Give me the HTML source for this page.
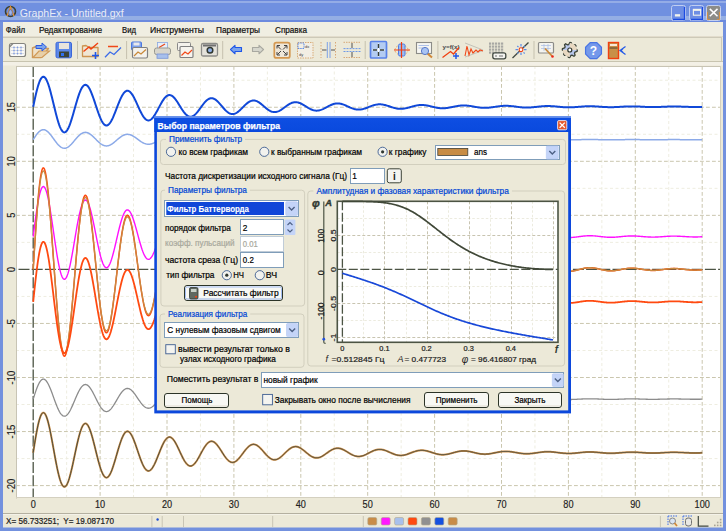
<!DOCTYPE html>
<html><head><meta charset="utf-8"><title>GraphEx</title>
<style>html,body{margin:0;padding:0;background:#ECE9D8;width:726px;height:531px;overflow:hidden}svg text{font-family:"Liberation Sans", sans-serif}</style>
</head><body><svg width="726" height="531" viewBox="0 0 726 531" style="display:block;font-family:'Liberation Sans', sans-serif"><rect x="0" y="0" width="726" height="531" fill="#ECE9D8" stroke="none" stroke-width="1" rx="0" /><linearGradient id="tg" x1="0" y1="0" x2="0" y2="1"><stop offset="0" stop-color="#6A88DC"/><stop offset="0.045" stop-color="#6A88DC"/><stop offset="0.045" stop-color="#94ACE6"/><stop offset="0.14" stop-color="#94ACE6"/><stop offset="0.14" stop-color="#7090E0"/><stop offset="0.727" stop-color="#7090E0"/><stop offset="0.727" stop-color="#94AEE4"/><stop offset="0.909" stop-color="#94AEE4"/><stop offset="0.909" stop-color="#6C8ADE"/><stop offset="1" stop-color="#6C8ADE"/></linearGradient><rect x="0" y="0" width="726" height="22" fill="url(#tg)" stroke="none" stroke-width="1" rx="0" /><rect x="0" y="22" width="3" height="509" fill="#7391DE" stroke="none" stroke-width="1" rx="0" /><rect x="723" y="22" width="3" height="509" fill="#7391DE" stroke="none" stroke-width="1" rx="0" /><rect x="0" y="527.5" width="726" height="3.5" fill="#7391DE" stroke="none" stroke-width="1" rx="0" /><text x="19.8" y="16.6" font-size="10.6" fill="#E8ECF6" font-weight="400" textLength="104" lengthAdjust="spacingAndGlyphs" >GraphEx - Untitled.gxf</text><g transform="translate(5,6)"><circle cx="5.5" cy="5.5" r="5" fill="none" stroke="#3C4030" stroke-width="1.6"/><path d="M2,10 L5.5,1 L9,10" fill="none" stroke="#E09030" stroke-width="1.4"/><ellipse cx="5.5" cy="6.5" rx="1.8" ry="2.8" fill="#9CB4EC" stroke="#506090" stroke-width="0.6"/></g><rect x="671.5" y="5.5" width="14" height="15" fill="#6E8EE4" stroke="#C0CEF2" stroke-width="1" rx="2" /><path d="M684.5,7 V19.5 H673" fill="none" stroke="#1C4CE0" stroke-width="1.3"/><rect x="674.9" y="14.2" width="5.2" height="2.3" fill="#F4F4EC" stroke="none" stroke-width="1" rx="0" /><rect x="689.5" y="5.5" width="14" height="15" fill="#6E8EE4" stroke="#C0CEF2" stroke-width="1" rx="2" /><path d="M702.5,7 V19.5 H691" fill="none" stroke="#1C4CE0" stroke-width="1.3"/><rect x="693.4" y="9.8" width="7.2" height="5.4" fill="none" stroke="#F4F4EC" stroke-width="1.1" rx="0" /><rect x="692.9" y="8.8" width="8.2" height="2" fill="#F4F4EC" stroke="none" stroke-width="1" rx="0" /><rect x="706.5" y="5.5" width="14" height="15" fill="#8C8C88" stroke="#C4D0F0" stroke-width="1" rx="2" /><path d="M707.5,12 V19.5 H710 M719.5,12 V19.5 H717" fill="none" stroke="#D89040" stroke-width="0.9"/><line x1="709.8" y1="8.9" x2="717.5" y2="16.2" stroke="#fff" stroke-width="1.5" /><line x1="717.5" y1="8.9" x2="709.8" y2="16.2" stroke="#fff" stroke-width="1.5" /><rect x="3" y="22" width="720" height="15" fill="#F0EEE2" stroke="none" stroke-width="1" rx="0" /><line x1="3" y1="36.5" x2="723" y2="36.5" stroke="#E2DCCC" stroke-width="1" /><line x1="3" y1="37.5" x2="722" y2="37.5" stroke="#CDC9B8" stroke-width="1" /><text x="5.8" y="32.7" font-size="8.3" fill="#101010" font-weight="400" textLength="19.4" lengthAdjust="spacingAndGlyphs" stroke="#101010" stroke-width="0.2" >Файл</text><text x="39" y="32.7" font-size="8.3" fill="#101010" font-weight="400" textLength="63" lengthAdjust="spacingAndGlyphs" stroke="#101010" stroke-width="0.2" >Редактирование</text><text x="122" y="32.7" font-size="8.3" fill="#101010" font-weight="400" textLength="14" lengthAdjust="spacingAndGlyphs" stroke="#101010" stroke-width="0.2" >Вид</text><text x="150" y="32.7" font-size="8.3" fill="#101010" font-weight="400" textLength="54" lengthAdjust="spacingAndGlyphs" stroke="#101010" stroke-width="0.2" >Инструменты</text><text x="216" y="32.7" font-size="8.3" fill="#101010" font-weight="400" textLength="44" lengthAdjust="spacingAndGlyphs" stroke="#101010" stroke-width="0.2" >Параметры</text><text x="275" y="32.7" font-size="8.3" fill="#101010" font-weight="400" textLength="32" lengthAdjust="spacingAndGlyphs" stroke="#101010" stroke-width="0.2" >Справка</text><rect x="3" y="38" width="720" height="23" fill="#ECE9D8" stroke="none" stroke-width="1" rx="0" /><line x1="3" y1="61.5" x2="723" y2="61.5" stroke="#C8C4B0" stroke-width="1" /><line x1="721.5" y1="37.5" x2="721.5" y2="61.5" stroke="#CDC9B8" stroke-width="1" /><line x1="77.5" y1="41" x2="77.5" y2="59" stroke="#C5C1AE" stroke-width="1" /><line x1="126.6" y1="41" x2="126.6" y2="59" stroke="#C5C1AE" stroke-width="1" /><line x1="222.7" y1="41" x2="222.7" y2="59" stroke="#C5C1AE" stroke-width="1" /><line x1="365.2" y1="41" x2="365.2" y2="59" stroke="#C5C1AE" stroke-width="1" /><line x1="437.9" y1="41" x2="437.9" y2="59" stroke="#C5C1AE" stroke-width="1" /><line x1="534.0" y1="41" x2="534.0" y2="59" stroke="#C5C1AE" stroke-width="1" /><g><rect x="9.5" y="43.5" width="16" height="13" rx="2" fill="#FAFAF8" stroke="#84847E" stroke-width="1.2"/><path d="M9.5,47 L13,43.5" stroke="#84847E" stroke-width="1.2"/><line x1="14" y1="46" x2="14" y2="55" stroke="#D0D4D8" stroke-width="0.8"/><line x1="17.5" y1="46" x2="17.5" y2="55" stroke="#D0D4D8" stroke-width="0.8"/><line x1="21" y1="46" x2="21" y2="55" stroke="#D0D4D8" stroke-width="0.8"/><line x1="11" y1="47.5" x2="24" y2="47.5" stroke="#D0D4D8" stroke-width="0.8"/><line x1="11" y1="50.5" x2="24" y2="50.5" stroke="#D0D4D8" stroke-width="0.8"/><line x1="11" y1="53.5" x2="24" y2="53.5" stroke="#D0D4D8" stroke-width="0.8"/><rect x="13.3" y="46.8" width="1.4" height="1.4" fill="#7C9CE8"/><rect x="13.3" y="49.8" width="1.4" height="1.4" fill="#7C9CE8"/><rect x="13.3" y="52.8" width="1.4" height="1.4" fill="#7C9CE8"/><rect x="16.8" y="46.8" width="1.4" height="1.4" fill="#7C9CE8"/><rect x="16.8" y="49.8" width="1.4" height="1.4" fill="#7C9CE8"/><rect x="16.8" y="52.8" width="1.4" height="1.4" fill="#7C9CE8"/><rect x="20.3" y="46.8" width="1.4" height="1.4" fill="#7C9CE8"/><rect x="20.3" y="49.8" width="1.4" height="1.4" fill="#7C9CE8"/><rect x="20.3" y="52.8" width="1.4" height="1.4" fill="#7C9CE8"/></g><g><path d="M32.5,57.5 L32.5,48 L36,46.5 L40,48.5 L48.5,48.5 L41,57.5 Z" fill="#F0E2C8" stroke="#D09A58" stroke-width="1.4" stroke-linejoin="round"/><path d="M33,57.5 L39,51 L49.5,51 L42,57.5 Z" fill="#E8D0A8" stroke="#D09A58" stroke-width="1.2"/><path d="M36,45.5 H42 V43 L46.5,47 L42,51 V48.5 H36 Z" fill="#7CA4EC" stroke="#2C5CE0" stroke-width="1"/></g><g><rect x="56" y="42.3" width="15.5" height="15.5" rx="1.5" fill="#5C88E8" stroke="#3A66DA" stroke-width="1"/><rect x="59" y="43" width="10" height="6" fill="#E8E4DC"/><rect x="59" y="51.5" width="10" height="5.8" fill="#3C4438"/><rect x="61" y="53" width="3" height="3" fill="#3070F0"/></g><g><path d="M82.5,56.5 V46 L86,45.5 L89,47.5 H98 V56.5 Z" fill="#F0E6D4" stroke="#CC9450" stroke-width="1.3" stroke-linejoin="round"/><path d="M83.5,51.5 L89,47 L91,49 L98,43" fill="none" stroke="#F04010" stroke-width="1.4"/><path d="M95.5,52 V59 M92,55.5 H99" stroke="#2058E8" stroke-width="1.6"/></g><g><line x1="108" y1="46.5" x2="118" y2="46.5" stroke="#F04818" stroke-width="1.5"/><path d="M105,57.3 L110,52 L114,54.5 L121,47.5" fill="none" stroke="#3C6CE8" stroke-width="1.3"/></g><g><rect x="131.5" y="42" width="10" height="8" rx="1" fill="#7CA0EC" stroke="#4C78E0" stroke-width="1"/><rect x="133.5" y="42.5" width="6" height="3" fill="#E8E8EC"/><rect x="132.5" y="47.5" width="15" height="10.5" rx="1.5" fill="#F4F2EC" stroke="#808080" stroke-width="1.2"/><path d="M134,56 L138,52 L141,54 L146,49.5" fill="none" stroke="#C88838" stroke-width="1.2"/></g><g><rect x="157.5" y="42.5" width="10" height="6" fill="#E8EEF8" stroke="#8AA8E0" stroke-width="0.8"/><path d="M159,47.5 L165,44" stroke="#E84818" stroke-width="1.2"/><rect x="154.5" y="48" width="16" height="6.5" rx="2" fill="#D8D6CC" stroke="#989890" stroke-width="1"/><rect x="157" y="54" width="11" height="4.3" fill="#A8C0EC" stroke="#7894D8" stroke-width="0.8"/></g><g><rect x="177.5" y="42.5" width="13" height="8" rx="1" fill="#F4F2EC" stroke="#888" stroke-width="1"/><rect x="180" y="46.5" width="13" height="11" rx="1" fill="#F6F4EE" stroke="#808080" stroke-width="1.2"/><path d="M181.5,55.5 L185,52 L188,54 L192,50" fill="none" stroke="#F04818" stroke-width="1.2"/></g><g><rect x="201.5" y="43.5" width="16" height="12.5" rx="1.5" fill="#E4E2DA" stroke="#8C8C88" stroke-width="1.3"/><rect x="203" y="44.5" width="13" height="2" fill="#707070"/><circle cx="210" cy="50.3" r="2.8" fill="#90B0E8" stroke="#303830" stroke-width="1.5"/></g><g><path d="M230.5,49.5 L235,45.3 V47.5 H241.5 V51.5 H235 V53.8 Z" fill="#7CA4EC" stroke="#1E56E8" stroke-width="1.1" stroke-linejoin="round"/></g><g><path d="M263.5,49.5 L259,45.3 V47.5 H252.5 V51.5 H259 V53.8 Z" fill="#D6D6CC" stroke="#A8A8A0" stroke-width="1.1" stroke-linejoin="round"/></g><g><rect x="274.3" y="42.7" width="15.5" height="15.2" rx="2" fill="#EEE6D8" stroke="#D49850" stroke-width="1.7"/><path d="M277.5,46 L281,49.5 M286.5,46 L283,49.5 M277.5,54.5 L281,51 M286.5,54.5 L283,51" stroke="#404040" stroke-width="1"/><path d="M277,45.5 h3 M277,45.5 v3 M287,45.5 h-3 M287,45.5 v3 M277,55 h3 M277,55 v-3 M287,55 h-3 M287,55 v-3" stroke="#404040" stroke-width="1"/></g><g><rect x="297.5" y="42.5" width="15.5" height="15.5" fill="#F2EEE4" stroke="#D8AC78" stroke-width="1" stroke-dasharray="1.5,1"/><rect x="298" y="43" width="6" height="5.5" fill="none" stroke="#5C8CE8" stroke-width="1" stroke-dasharray="1.5,0.8"/><text x="305" y="48" font-size="4" fill="#404040">dx</text><text x="299" y="56" font-size="4" fill="#404040">dy</text></g><g><line x1="321" y1="42" x2="321" y2="58" stroke="#D8A878" stroke-width="1" stroke-dasharray="1.5,1.5"/><line x1="335.5" y1="42" x2="335.5" y2="58" stroke="#D8A878" stroke-width="1" stroke-dasharray="1.5,1.5"/><line x1="327.3" y1="42" x2="327.3" y2="58" stroke="#7CA0E8" stroke-width="1"/><line x1="330" y1="42" x2="330" y2="58" stroke="#7CA0E8" stroke-width="1"/><path d="M322,50 H326.5 M331,50 H335" stroke="#505050" stroke-width="1"/></g><g><line x1="343.5" y1="42.3" x2="360.5" y2="42.3" stroke="#D8A878" stroke-width="1" stroke-dasharray="1.5,1"/><line x1="343.5" y1="57.5" x2="360.5" y2="57.5" stroke="#D8A878" stroke-width="1" stroke-dasharray="1.5,1"/><line x1="343.5" y1="48.6" x2="360.5" y2="48.6" stroke="#6C98E8" stroke-width="1" stroke-dasharray="2,1"/><line x1="343.5" y1="51.5" x2="360.5" y2="51.5" stroke="#6C98E8" stroke-width="1" stroke-dasharray="2,1"/><path d="M352,43 V48 M352,52 V57" stroke="#505050" stroke-width="1"/></g><g><rect x="370.5" y="41.5" width="16" height="16.5" rx="1" fill="#B4CCF2" stroke="#5A82E8" stroke-width="1.7"/><path d="M378.5,43.5 V56.5 M372.5,50 H384.5" stroke="#FFFFFF" stroke-width="1"/><path d="M378.5,44 V48 M378.5,52 V56 M373,50 H377 M380,50 H384" stroke="#384038" stroke-width="1.4"/></g><g><ellipse cx="401.5" cy="50" rx="6.5" ry="5" fill="none" stroke="#E8A050" stroke-width="1" stroke-dasharray="1.5,1.5"/><rect x="398.5" y="44" width="6.5" height="12" rx="1.5" fill="#9CBCF0" stroke="#4C7CE8" stroke-width="1"/><path d="M401.5,42 V58 M394,50 H410" stroke="#F03C10" stroke-width="1.2"/></g><g><rect x="416.5" y="42.5" width="15" height="11" fill="#F6F6F2" stroke="#8C8C88" stroke-width="1.1"/><path d="M418.5,45.5 H429 M418.5,48 H423" stroke="#9CB4E4" stroke-width="0.8"/><path d="M427.5,53.5 L432,57.5" stroke="#D08838" stroke-width="2"/><circle cx="425" cy="51" r="3.6" fill="#A8C4F4" stroke="#5878C8" stroke-width="1"/></g><g><text x="442.5" y="48.8" font-size="6.2" font-weight="700" fill="#484848" textLength="17" lengthAdjust="spacingAndGlyphs">y=f(x)</text><path d="M442.5,57.5 L450.5,51.5 L453.5,54 L459,47.5" fill="none" stroke="#F04010" stroke-width="1.3"/><path d="M456,53 V59 M453,56 H459" stroke="#2058E8" stroke-width="1.5"/></g><g><path d="M465,43 L483,50 M465,57 L483,50.5" stroke="#B8B8B0" stroke-width="0.8"/><path d="M465,56 L467,46 L469,55 L471,49 L473,53 L476,50 L478,52 L480,50 L483,51" fill="none" stroke="#F04818" stroke-width="1.1"/></g><g><rect x="489" y="42.5" width="2.2" height="2.2" fill="#A8A8A4"/><rect x="489" y="45.5" width="2.2" height="2.2" fill="#A8A8A4"/><rect x="489" y="48.5" width="2.2" height="2.2" fill="#A8A8A4"/><rect x="489" y="51.5" width="2.2" height="2.2" fill="#A8A8A4"/><rect x="492" y="42.5" width="2.2" height="2.2" fill="#A8A8A4"/><rect x="492" y="45.5" width="2.2" height="2.2" fill="#A8A8A4"/><rect x="492" y="48.5" width="2.2" height="2.2" fill="#A8A8A4"/><rect x="492" y="51.5" width="2.2" height="2.2" fill="#A8A8A4"/><rect x="495" y="42.5" width="2.2" height="2.2" fill="#A8A8A4"/><rect x="495" y="45.5" width="2.2" height="2.2" fill="#A8A8A4"/><rect x="495" y="48.5" width="2.2" height="2.2" fill="#A8A8A4"/><rect x="495" y="51.5" width="2.2" height="2.2" fill="#A8A8A4"/><rect x="498" y="42.5" width="2.2" height="2.2" fill="#A8A8A4"/><rect x="498" y="45.5" width="2.2" height="2.2" fill="#A8A8A4"/><rect x="498" y="48.5" width="2.2" height="2.2" fill="#A8A8A4"/><rect x="498" y="51.5" width="2.2" height="2.2" fill="#A8A8A4"/><rect x="501" y="42.5" width="2.2" height="2.2" fill="#A8A8A4"/><rect x="501" y="45.5" width="2.2" height="2.2" fill="#A8A8A4"/><rect x="501" y="48.5" width="2.2" height="2.2" fill="#A8A8A4"/><rect x="501" y="51.5" width="2.2" height="2.2" fill="#A8A8A4"/><rect x="492.8" y="52.8" width="13" height="6" rx="2" fill="#F4F4F0" stroke="#404840" stroke-width="1.3"/><path d="M495,56 h2 M499,56 h4" stroke="#707070" stroke-width="1"/></g><g><path d="M512.5,58 L528.5,42.5" stroke="#404840" stroke-width="1.3"/><path d="M521,44 V46.5 M521,52.5 V55 M515.5,49.7 H518 M524,49.7 H526.5 M517.3,46 L518.5,47.2 M523.5,52.3 L524.7,53.5 M517.3,53.5 L518.5,52.3 M523.5,47.2 L524.7,46" stroke="#5C8CE8" stroke-width="1.2"/><circle cx="521" cy="49.7" r="1.9" fill="#FFFFFF" stroke="#F03C10" stroke-width="1.1"/></g><g><rect x="538.5" y="42.5" width="15" height="10.5" rx="1" fill="#F4F4F0" stroke="#8C8C88" stroke-width="1.2"/><path d="M541,45.5 H551 M541,48.5 H551 M544,44 V51 M548,44 V51" stroke="#A8BCE4" stroke-width="0.7"/><path d="M545,48.5 L552,56" stroke="#C88838" stroke-width="1.8"/><circle cx="552.5" cy="56.5" r="1.3" fill="#F02818"/></g><g><path d="M577.30,50.00 L577.16,51.46 L574.97,52.14 L574.46,53.11 L575.10,55.30 L573.97,56.24 L571.94,55.17 L570.89,55.49 L569.80,57.50 L568.34,57.36 L567.66,55.17 L566.69,54.66 L564.50,55.30 L563.56,54.17 L564.63,52.14 L564.31,51.09 L562.30,50.00 L562.44,48.54 L564.63,47.86 L565.14,46.89 L564.50,44.70 L565.63,43.76 L567.66,44.83 L568.71,44.51 L569.80,42.50 L571.26,42.64 L571.94,44.83 L572.91,45.34 L575.10,44.70 L576.04,45.83 L574.97,47.86 L575.29,48.91 Z" fill="#B8C8EC" stroke="#3C4438" stroke-width="1.3" stroke-linejoin="round"/><path d="M569.8,43 A7,7 0 0 1 576.8,50 L569.8,50 Z M569.8,57 A7,7 0 0 1 562.8,50 L569.8,50Z" fill="#E8D8C0"/><circle cx="569.8" cy="50" r="2" fill="#FFFFFF" stroke="#303830" stroke-width="1.2"/></g><g><path d="M601.45,53.89 L596.79,58.55 L590.21,58.55 L585.55,53.89 L585.55,47.31 L590.21,42.65 L596.79,42.65 L601.45,47.31 Z" fill="#7498EA" stroke="#4874E4" stroke-width="1.2"/><text x="593.5" y="55" font-size="12" font-weight="700" fill="#FFFFFF" text-anchor="middle">?</text></g><g><rect x="608.5" y="42.5" width="10" height="16" fill="#C89048" stroke="#F04010" stroke-width="1.4"/><rect x="610" y="44" width="7" height="2" fill="#F8E8D8"/><path d="M609.5,48 H617.5" stroke="#303030" stroke-width="0.8"/><path d="M625.5,46.5 L620,50.5 L625.5,54.5 M623,48.5 L621,50.5 L623,52.5" fill="none" stroke="#2058E8" stroke-width="1.2"/></g><rect x="3" y="62" width="720" height="451" fill="#ECE9D8" stroke="none" stroke-width="1" rx="0" /><rect x="3" y="62" width="720" height="3.5" fill="#F3F0E6" stroke="none" stroke-width="1" rx="0" /><rect x="16" y="66" width="705" height="432" fill="#FFFFFF" stroke="none" stroke-width="1" rx="0" /><line x1="16.5" y1="66" x2="16.5" y2="498.5" stroke="#C8C4B4" stroke-width="1" /><line x1="16" y1="66.5" x2="721" y2="66.5" stroke="#C8C4B4" stroke-width="1" /><line x1="720.5" y1="66" x2="720.5" y2="498" stroke="#D4D0C0" stroke-width="1" /><line x1="16" y1="497.5" x2="721" y2="497.5" stroke="#D4D0C0" stroke-width="1" /><clipPath id="pc"><rect x="17" y="67" width="703" height="430"/></clipPath><g clip-path="url(#pc)"><line x1="66.65" y1="66" x2="66.65" y2="498" stroke="#EEEDE0" stroke-width="1" stroke-dasharray="3,2.5" /><line x1="133.55" y1="66" x2="133.55" y2="498" stroke="#EEEDE0" stroke-width="1" stroke-dasharray="3,2.5" /><line x1="200.45" y1="66" x2="200.45" y2="498" stroke="#EEEDE0" stroke-width="1" stroke-dasharray="3,2.5" /><line x1="267.35" y1="66" x2="267.35" y2="498" stroke="#EEEDE0" stroke-width="1" stroke-dasharray="3,2.5" /><line x1="334.25" y1="66" x2="334.25" y2="498" stroke="#EEEDE0" stroke-width="1" stroke-dasharray="3,2.5" /><line x1="401.15" y1="66" x2="401.15" y2="498" stroke="#EEEDE0" stroke-width="1" stroke-dasharray="3,2.5" /><line x1="468.05" y1="66" x2="468.05" y2="498" stroke="#EEEDE0" stroke-width="1" stroke-dasharray="3,2.5" /><line x1="534.95" y1="66" x2="534.95" y2="498" stroke="#EEEDE0" stroke-width="1" stroke-dasharray="3,2.5" /><line x1="601.85" y1="66" x2="601.85" y2="498" stroke="#EEEDE0" stroke-width="1" stroke-dasharray="3,2.5" /><line x1="668.75" y1="66" x2="668.75" y2="498" stroke="#EEEDE0" stroke-width="1" stroke-dasharray="3,2.5" /><line x1="16" y1="458.57" x2="721" y2="458.57" stroke="#EEEDE0" stroke-width="1" stroke-dasharray="3,2.5" /><line x1="16" y1="404.52" x2="721" y2="404.52" stroke="#EEEDE0" stroke-width="1" stroke-dasharray="3,2.5" /><line x1="16" y1="350.47" x2="721" y2="350.47" stroke="#EEEDE0" stroke-width="1" stroke-dasharray="3,2.5" /><line x1="16" y1="296.42" x2="721" y2="296.42" stroke="#EEEDE0" stroke-width="1" stroke-dasharray="3,2.5" /><line x1="16" y1="242.37" x2="721" y2="242.37" stroke="#EEEDE0" stroke-width="1" stroke-dasharray="3,2.5" /><line x1="16" y1="188.32" x2="721" y2="188.32" stroke="#EEEDE0" stroke-width="1" stroke-dasharray="3,2.5" /><line x1="16" y1="134.27" x2="721" y2="134.27" stroke="#EEEDE0" stroke-width="1" stroke-dasharray="3,2.5" /><line x1="16" y1="80.22" x2="721" y2="80.22" stroke="#EEEDE0" stroke-width="1" stroke-dasharray="3,2.5" /><line x1="100.1" y1="66" x2="100.1" y2="498" stroke="#CAC6AE" stroke-width="1" stroke-dasharray="3.8,2.2" /><line x1="167.0" y1="66" x2="167.0" y2="498" stroke="#CAC6AE" stroke-width="1" stroke-dasharray="3.8,2.2" /><line x1="233.9" y1="66" x2="233.9" y2="498" stroke="#CAC6AE" stroke-width="1" stroke-dasharray="3.8,2.2" /><line x1="300.8" y1="66" x2="300.8" y2="498" stroke="#CAC6AE" stroke-width="1" stroke-dasharray="3.8,2.2" /><line x1="367.7" y1="66" x2="367.7" y2="498" stroke="#CAC6AE" stroke-width="1" stroke-dasharray="3.8,2.2" /><line x1="434.6" y1="66" x2="434.6" y2="498" stroke="#CAC6AE" stroke-width="1" stroke-dasharray="3.8,2.2" /><line x1="501.5" y1="66" x2="501.5" y2="498" stroke="#CAC6AE" stroke-width="1" stroke-dasharray="3.8,2.2" /><line x1="568.4" y1="66" x2="568.4" y2="498" stroke="#CAC6AE" stroke-width="1" stroke-dasharray="3.8,2.2" /><line x1="635.3" y1="66" x2="635.3" y2="498" stroke="#CAC6AE" stroke-width="1" stroke-dasharray="3.8,2.2" /><line x1="702.2" y1="66" x2="702.2" y2="498" stroke="#CAC6AE" stroke-width="1" stroke-dasharray="3.8,2.2" /><line x1="16" y1="485.6" x2="721" y2="485.6" stroke="#CAC6AE" stroke-width="1" stroke-dasharray="3.8,2.2" /><line x1="16" y1="431.55" x2="721" y2="431.55" stroke="#CAC6AE" stroke-width="1" stroke-dasharray="3.8,2.2" /><line x1="16" y1="377.5" x2="721" y2="377.5" stroke="#CAC6AE" stroke-width="1" stroke-dasharray="3.8,2.2" /><line x1="16" y1="323.45" x2="721" y2="323.45" stroke="#CAC6AE" stroke-width="1" stroke-dasharray="3.8,2.2" /><line x1="16" y1="215.35" x2="721" y2="215.35" stroke="#CAC6AE" stroke-width="1" stroke-dasharray="3.8,2.2" /><line x1="16" y1="161.3" x2="721" y2="161.3" stroke="#CAC6AE" stroke-width="1" stroke-dasharray="3.8,2.2" /><line x1="16" y1="107.25" x2="721" y2="107.25" stroke="#CAC6AE" stroke-width="1" stroke-dasharray="3.8,2.2" /><line x1="16" y1="269.4" x2="721" y2="269.4" stroke="#4C5444" stroke-width="1.3" stroke-dasharray="11,2.2" stroke-dashoffset="-2.5"/><line x1="33.2" y1="66" x2="33.2" y2="498" stroke="#4C5444" stroke-width="1.3" stroke-dasharray="11,2.2" /><polyline points="33.20,106.75 33.87,103.53 34.54,100.37 35.21,97.31 35.88,94.37 36.55,91.59 37.21,88.98 37.88,86.58 38.55,84.40 39.22,82.46 39.89,80.79 40.56,79.39 41.23,78.28 41.90,77.47 42.57,76.95 43.24,76.74 43.90,76.83 44.57,77.21 45.24,77.89 45.91,78.84 46.58,80.07 47.25,81.55 47.92,83.26 48.59,85.19 49.26,87.32 49.93,89.62 50.59,92.07 51.26,94.64 51.93,97.31 52.60,100.04 53.27,102.81 53.94,105.60 54.61,108.36 55.28,111.09 55.95,113.74 56.62,116.30 57.28,118.74 57.95,121.03 58.62,123.16 59.29,125.10 59.96,126.84 60.63,128.37 61.30,129.66 61.97,130.71 62.64,131.52 63.31,132.06 63.97,132.35 64.64,132.39 65.31,132.16 65.98,131.69 66.65,130.97 67.32,130.02 67.99,128.84 68.66,127.46 69.33,125.88 69.99,124.13 70.66,122.22 71.33,120.18 72.00,118.02 72.67,115.78 73.34,113.46 74.01,111.10 74.68,108.73 75.35,106.35 76.02,104.01 76.68,101.71 77.35,99.49 78.02,97.36 78.69,95.34 79.36,93.46 80.03,91.74 80.70,90.17 81.37,88.79 82.04,87.60 82.71,86.62 83.37,85.84 84.04,85.28 84.71,84.94 85.38,84.83 86.05,84.93 86.72,85.24 87.39,85.77 88.06,86.50 88.73,87.43 89.40,88.54 90.06,89.82 90.73,91.26 91.40,92.83 92.07,94.53 92.74,96.34 93.41,98.23 94.08,100.18 94.75,102.19 95.42,104.21 96.09,106.25 96.75,108.27 97.42,110.25 98.09,112.18 98.76,114.03 99.43,115.79 100.10,117.45 100.77,118.98 101.44,120.38 102.11,121.63 102.78,122.71 103.44,123.63 104.11,124.36 104.78,124.92 105.45,125.29 106.12,125.47 106.79,125.46 107.46,125.27 108.13,124.89 108.80,124.33 109.47,123.61 110.13,122.73 110.80,121.69 111.47,120.52 112.14,119.22 112.81,117.81 113.48,116.30 114.15,114.71 114.82,113.06 115.49,111.37 116.16,109.64 116.82,107.90 117.49,106.17 118.16,104.46 118.83,102.79 119.50,101.18 120.17,99.64 120.84,98.18 121.51,96.83 122.18,95.58 122.85,94.46 123.51,93.48 124.18,92.63 124.85,91.94 125.52,91.40 126.19,91.02 126.86,90.80 127.53,90.74 128.20,90.84 128.87,91.10 129.54,91.51 130.20,92.07 130.87,92.77 131.54,93.60 132.21,94.55 132.88,95.62 133.55,96.79 134.22,98.04 134.89,99.37 135.56,100.76 136.23,102.20 136.89,103.67 137.56,105.15 138.23,106.63 138.90,108.10 139.57,109.55 140.24,110.95 140.91,112.29 141.58,113.57 142.25,114.76 142.92,115.86 143.58,116.87 144.25,117.76 144.92,118.53 145.59,119.18 146.26,119.69 146.93,120.08 147.60,120.32 148.27,120.43 148.94,120.40 149.61,120.24 150.27,119.94 150.94,119.51 151.61,118.96 152.28,118.30 152.95,117.53 153.62,116.65 154.29,115.69 154.96,114.65 155.63,113.53 156.30,112.37 156.96,111.15 157.63,109.91 158.30,108.65 158.97,107.38 159.64,106.11 160.31,104.87 160.98,103.66 161.65,102.49 162.32,101.37 162.99,100.32 163.66,99.34 164.32,98.45 164.99,97.65 165.66,96.95 166.33,96.35 167.00,95.86 167.67,95.48 168.34,95.22 169.01,95.08 169.68,95.06 170.35,95.15 171.01,95.36 171.68,95.68 172.35,96.10 173.02,96.63 173.69,97.26 174.36,97.97 175.03,98.76 175.70,99.62 176.37,100.55 177.04,101.53 177.70,102.55 178.37,103.60 179.04,104.68 179.71,105.76 180.38,106.85 181.05,107.92 181.72,108.97 182.39,109.98 183.06,110.96 183.73,111.88 184.39,112.74 185.06,113.54 185.73,114.25 186.40,114.89 187.07,115.44 187.74,115.90 188.41,116.26 189.08,116.52 189.75,116.68 190.42,116.75 191.08,116.71 191.75,116.57 192.42,116.34 193.09,116.01 193.76,115.60 194.43,115.10 195.10,114.52 195.77,113.87 196.44,113.15 197.11,112.38 197.77,111.56 198.44,110.71 199.11,109.82 199.78,108.90 200.45,107.98 201.12,107.05 201.79,106.13 202.46,105.23 203.13,104.34 203.80,103.50 204.46,102.69 205.13,101.93 205.80,101.23 206.47,100.58 207.14,100.01 207.81,99.51 208.48,99.09 209.15,98.74 209.82,98.48 210.49,98.31 211.15,98.22 211.82,98.22 212.49,98.30 213.16,98.46 213.83,98.71 214.50,99.03 215.17,99.43 215.84,99.90 216.51,100.43 217.18,101.02 217.84,101.66 218.51,102.34 219.18,103.06 219.85,103.81 220.52,104.58 221.19,105.37 221.86,106.16 222.53,106.95 223.20,107.73 223.87,108.50 224.53,109.23 225.20,109.94 225.87,110.61 226.54,111.23 227.21,111.80 227.88,112.31 228.55,112.77 229.22,113.16 229.89,113.48 230.56,113.73 231.22,113.91 231.89,114.02 232.56,114.05 233.23,114.01 233.90,113.90 234.57,113.72 235.24,113.47 235.91,113.15 236.58,112.78 237.25,112.35 237.91,111.86 238.58,111.34 239.25,110.77 239.92,110.16 240.59,109.53 241.26,108.88 241.93,108.21 242.60,107.53 243.27,106.86 243.94,106.19 244.60,105.53 245.27,104.89 245.94,104.27 246.61,103.69 247.28,103.14 247.95,102.63 248.62,102.17 249.29,101.76 249.96,101.41 250.63,101.11 251.29,100.87 251.96,100.69 252.63,100.57 253.30,100.51 253.97,100.52 254.64,100.59 255.31,100.72 255.98,100.91 256.65,101.16 257.32,101.46 257.98,101.81 258.65,102.20 259.32,102.64 259.99,103.11 260.66,103.62 261.33,104.15 262.00,104.70 262.67,105.26 263.34,105.84 264.01,106.42 264.67,106.99 265.34,107.56 266.01,108.12 266.68,108.65 267.35,109.16 268.02,109.64 268.69,110.09 269.36,110.50 270.03,110.87 270.70,111.20 271.36,111.47 272.03,111.70 272.70,111.88 273.37,112.00 274.04,112.07 274.71,112.08 275.38,112.04 276.05,111.95 276.72,111.81 277.39,111.62 278.05,111.38 278.72,111.10 279.39,110.78 280.06,110.42 280.73,110.03 281.40,109.61 282.07,109.17 282.74,108.70 283.41,108.22 284.08,107.73 284.74,107.24 285.41,106.75 286.08,106.26 286.75,105.78 287.42,105.31 288.09,104.87 288.76,104.44 289.43,104.05 290.10,103.68 290.77,103.35 291.43,103.06 292.10,102.81 292.77,102.59 293.44,102.43 294.11,102.30 294.78,102.23 295.45,102.19 296.12,102.21 296.79,102.27 297.46,102.37 298.12,102.51 298.79,102.70 299.46,102.93 300.13,103.19 300.80,103.48 301.47,103.80 302.14,104.15 302.81,104.52 303.48,104.91 304.15,105.32 304.81,105.73 305.48,106.16 306.15,106.58 306.82,107.00 307.49,107.41 308.16,107.82 308.83,108.20 309.50,108.57 310.17,108.92 310.84,109.24 311.50,109.54 312.17,109.80 312.84,110.03 313.51,110.23 314.18,110.39 314.85,110.51 315.52,110.59 316.19,110.64 316.86,110.64 317.53,110.61 318.19,110.54 318.86,110.43 319.53,110.28 320.20,110.10 320.87,109.89 321.54,109.65 322.21,109.39 322.88,109.10 323.55,108.79 324.22,108.46 324.88,108.12 325.55,107.77 326.22,107.41 326.89,107.05 327.56,106.69 328.23,106.33 328.90,105.98 329.57,105.64 330.24,105.32 330.91,105.02 331.57,104.73 332.24,104.47 332.91,104.23 333.58,104.02 334.25,103.84 334.92,103.69 335.59,103.57 336.26,103.49 336.93,103.44 337.60,103.42 338.26,103.44 338.93,103.49 339.60,103.57 340.27,103.68 340.94,103.82 341.61,103.99 342.28,104.18 342.95,104.40 343.62,104.64 344.29,104.90 344.95,105.17 345.62,105.46 346.29,105.76 346.96,106.06 347.63,106.37 348.30,106.68 348.97,106.98 349.64,107.28 350.31,107.58 350.98,107.86 351.64,108.13 352.31,108.38 352.98,108.61 353.65,108.82 354.32,109.01 354.99,109.17 355.66,109.31 356.33,109.43 357.00,109.51 357.67,109.57 358.33,109.59 359.00,109.59 359.67,109.56 360.34,109.50 361.01,109.42 361.68,109.31 362.35,109.17 363.02,109.02 363.69,108.84 364.36,108.64 365.02,108.43 365.69,108.20 366.36,107.96 367.03,107.71 367.70,107.45 368.37,107.19 369.04,106.92 369.71,106.66 370.38,106.40 371.05,106.15 371.71,105.90 372.38,105.67 373.05,105.45 373.72,105.24 374.39,105.05 375.06,104.88 375.73,104.73 376.40,104.61 377.07,104.50 377.74,104.42 378.40,104.36 379.07,104.33 379.74,104.32 380.41,104.33 381.08,104.37 381.75,104.44 382.42,104.52 383.09,104.63 383.76,104.75 384.43,104.90 385.09,105.06 385.76,105.24 386.43,105.43 387.10,105.63 387.77,105.84 388.44,106.06 389.11,106.28 389.78,106.51 390.45,106.73 391.12,106.96 391.78,107.18 392.45,107.39 393.12,107.59 393.79,107.79 394.46,107.97 395.13,108.14 395.80,108.29 396.47,108.42 397.14,108.54 397.81,108.64 398.47,108.72 399.14,108.77 399.81,108.81 400.48,108.83 401.15,108.82 401.82,108.80 402.49,108.75 403.16,108.69 403.83,108.60 404.50,108.50 405.16,108.38 405.83,108.25 406.50,108.11 407.17,107.95 407.84,107.78 408.51,107.60 409.18,107.42 409.85,107.23 410.52,107.04 411.19,106.84 411.85,106.65 412.52,106.46 413.19,106.28 413.86,106.10 414.53,105.93 415.20,105.77 415.87,105.62 416.54,105.49 417.21,105.37 417.88,105.26 418.54,105.17 419.21,105.10 419.88,105.04 420.55,105.00 421.22,104.98 421.89,104.97 422.56,104.99 423.23,105.02 423.90,105.07 424.57,105.13 425.23,105.21 425.90,105.31 426.57,105.42 427.24,105.54 427.91,105.67 428.58,105.81 429.25,105.96 429.92,106.11 430.59,106.27 431.26,106.44 431.92,106.60 432.59,106.77 433.26,106.93 433.93,107.09 434.60,107.24 435.27,107.39 435.94,107.53 436.61,107.66 437.28,107.78 437.95,107.89 438.61,107.99 439.28,108.07 439.95,108.14 440.62,108.19 441.29,108.23 441.96,108.26 442.63,108.27 443.30,108.26 443.97,108.24 444.64,108.21 445.30,108.16 445.97,108.09 446.64,108.02 447.31,107.93 447.98,107.83 448.65,107.72 449.32,107.60 449.99,107.48 450.66,107.35 451.33,107.21 451.99,107.08 452.66,106.94 453.33,106.79 454.00,106.65 454.67,106.52 455.34,106.38 456.01,106.25 456.68,106.13 457.35,106.02 458.02,105.91 458.68,105.81 459.35,105.73 460.02,105.65 460.69,105.59 461.36,105.53 462.03,105.49 462.70,105.47 463.37,105.45 464.04,105.45 464.71,105.47 465.37,105.49 466.04,105.53 466.71,105.58 467.38,105.64 468.05,105.71 468.72,105.79 469.39,105.88 470.06,105.98 470.73,106.08 471.40,106.19 472.06,106.30 472.73,106.42 473.40,106.54 474.07,106.66 474.74,106.78 475.41,106.90 476.08,107.02 476.75,107.13 477.42,107.24 478.09,107.34 478.75,107.43 479.42,107.52 480.09,107.60 480.76,107.66 481.43,107.72 482.10,107.77 482.77,107.81 483.44,107.84 484.11,107.85 484.78,107.86 485.44,107.85 486.11,107.84 486.78,107.81 487.45,107.77 488.12,107.72 488.79,107.66 489.46,107.60 490.13,107.53 490.80,107.45 491.47,107.36 492.13,107.27 492.80,107.17 493.47,107.07 494.14,106.97 494.81,106.87 495.48,106.77 496.15,106.66 496.82,106.56 497.49,106.47 498.16,106.37 498.82,106.28 499.49,106.20 500.16,106.12 500.83,106.05 501.50,105.99 502.17,105.94 502.84,105.89 503.51,105.86 504.18,105.83 504.85,105.81 505.51,105.80 506.18,105.80 506.85,105.82 507.52,105.84 508.19,105.86 508.86,105.90 509.53,105.95 510.20,106.00 510.87,106.06 511.54,106.13 512.20,106.20 512.87,106.27 513.54,106.36 514.21,106.44 514.88,106.53 515.55,106.61 516.22,106.70 516.89,106.79 517.56,106.87 518.23,106.96 518.89,107.04 519.56,107.12 520.23,107.19 520.90,107.26 521.57,107.32 522.24,107.38 522.91,107.43 523.58,107.47 524.25,107.50 524.92,107.53 525.58,107.55 526.25,107.56 526.92,107.56 527.59,107.55 528.26,107.54 528.93,107.52 529.60,107.49 530.27,107.45 530.94,107.41 531.61,107.36 532.27,107.31 532.94,107.25 533.61,107.18 534.28,107.12 534.95,107.05 535.62,106.97 536.29,106.90 536.96,106.82 537.63,106.75 538.29,106.67 538.96,106.60 539.63,106.53 540.30,106.46 540.97,106.40 541.64,106.34 542.31,106.28 542.98,106.23 543.65,106.19 544.32,106.15 544.98,106.12 545.65,106.09 546.32,106.07 546.99,106.06 547.66,106.06 548.33,106.06 549.00,106.07 549.67,106.08 550.34,106.11 551.01,106.14 551.67,106.17 552.34,106.21 553.01,106.25 553.68,106.30 554.35,106.36 555.02,106.41 555.69,106.47 556.36,106.53 557.03,106.60 557.70,106.66 558.36,106.72 559.03,106.79 559.70,106.85 560.37,106.91 561.04,106.97 561.71,107.03 562.38,107.08 563.05,107.13 563.72,107.17 564.39,107.21 565.05,107.25 565.72,107.28 566.39,107.30 567.06,107.32 567.73,107.33 568.40,107.34 569.07,107.34 569.74,107.34 570.41,107.32 571.08,107.31 571.74,107.29 572.41,107.26 573.08,107.23 573.75,107.19 574.42,107.15 575.09,107.11 575.76,107.06 576.43,107.01 577.10,106.96 577.77,106.90 578.43,106.85 579.10,106.79 579.77,106.74 580.44,106.69 581.11,106.63 581.78,106.58 582.45,106.53 583.12,106.49 583.79,106.44 584.46,106.40 585.12,106.37 585.79,106.34 586.46,106.31 587.13,106.29 587.80,106.27 588.47,106.25 589.14,106.25 589.81,106.24 590.48,106.25 591.15,106.25 591.81,106.27 592.48,106.28 593.15,106.31 593.82,106.33 594.49,106.36 595.16,106.39 595.83,106.43 596.50,106.47 597.17,106.51 597.84,106.55 598.50,106.60 599.17,106.65 599.84,106.69 600.51,106.74 601.18,106.79 601.85,106.83 602.52,106.88 603.19,106.92 603.86,106.96 604.53,107.00 605.19,107.03 605.86,107.06 606.53,107.09 607.20,107.12 607.87,107.14 608.54,107.16 609.21,107.17 609.88,107.18 610.55,107.18 611.22,107.18 611.88,107.18 612.55,107.17 613.22,107.16 613.89,107.14 614.56,107.12 615.23,107.09 615.90,107.07 616.57,107.04 617.24,107.00 617.91,106.97 618.57,106.93 619.24,106.89 619.91,106.86 620.58,106.82 621.25,106.78 621.92,106.74 622.59,106.70 623.26,106.66 623.93,106.62 624.60,106.59 625.26,106.55 625.93,106.52 626.60,106.49 627.27,106.47 627.94,106.44 628.61,106.42 629.28,106.41 629.95,106.40 630.62,106.39 631.29,106.38 631.95,106.38 632.62,106.38 633.29,106.39 633.96,106.40 634.63,106.41 635.30,106.43 635.97,106.45 636.64,106.47 637.31,106.49 637.98,106.52 638.64,106.55 639.31,106.58 639.98,106.61 640.65,106.65 641.32,106.68 641.99,106.71 642.66,106.75 643.33,106.78 644.00,106.82 644.67,106.85 645.33,106.88 646.00,106.91 646.67,106.94 647.34,106.96 648.01,106.98 648.68,107.00 649.35,107.02 650.02,107.04 650.69,107.05 651.36,107.06 652.02,107.06 652.69,107.07 653.36,107.06 654.03,107.06 654.70,107.05 655.37,107.04 656.04,107.03 656.71,107.02 657.38,107.00 658.05,106.98 658.71,106.96 659.38,106.93 660.05,106.91 660.72,106.88 661.39,106.85 662.06,106.82 662.73,106.79 663.40,106.76 664.07,106.73 664.74,106.71 665.40,106.68 666.07,106.65 666.74,106.63 667.41,106.60 668.08,106.58 668.75,106.56 669.42,106.54 670.09,106.52 670.76,106.51 671.43,106.50 672.09,106.49 672.76,106.48 673.43,106.48 674.10,106.48 674.77,106.48 675.44,106.49 676.11,106.49 676.78,106.50 677.45,106.52 678.12,106.53 678.78,106.55 679.45,106.57 680.12,106.59 680.79,106.61 681.46,106.63 682.13,106.65 682.80,106.68 683.47,106.70 684.14,106.73 684.81,106.75 685.47,106.78 686.14,106.80 686.81,106.82 687.48,106.85 688.15,106.87 688.82,106.89 689.49,106.91 690.16,106.92 690.83,106.94 691.50,106.95 692.16,106.96 692.83,106.97 693.50,106.98 694.17,106.98 694.84,106.98 695.51,106.98 696.18,106.98 696.85,106.97 697.52,106.96 698.19,106.95 698.85,106.94 699.52,106.93 700.19,106.91 700.86,106.90 701.53,106.88 702.20,106.86" fill="none" stroke="#1048D8" stroke-width="2.0" stroke-linejoin="round"/><polyline points="33.20,139.68 33.87,138.61 34.54,137.55 35.21,136.53 35.88,135.55 36.55,134.63 37.21,133.76 37.88,132.96 38.55,132.23 39.22,131.58 39.89,131.03 40.56,130.56 41.23,130.19 41.90,129.92 42.57,129.75 43.24,129.68 43.90,129.71 44.57,129.83 45.24,130.06 45.91,130.38 46.58,130.79 47.25,131.28 47.92,131.85 48.59,132.49 49.26,133.20 49.93,133.97 50.59,134.79 51.26,135.64 51.93,136.53 52.60,137.44 53.27,138.37 53.94,139.30 54.61,140.22 55.28,141.13 55.95,142.01 56.62,142.86 57.28,143.68 57.95,144.44 58.62,145.15 59.29,145.80 59.96,146.38 60.63,146.89 61.30,147.32 61.97,147.67 62.64,147.94 63.31,148.12 63.97,148.21 64.64,148.23 65.31,148.15 65.98,147.99 66.65,147.75 67.32,147.44 67.99,147.04 68.66,146.58 69.33,146.06 69.99,145.47 70.66,144.84 71.33,144.16 72.00,143.44 72.67,142.69 73.34,141.92 74.01,141.13 74.68,140.34 75.35,139.55 76.02,138.77 76.68,138.00 77.35,137.26 78.02,136.55 78.69,135.88 79.36,135.25 80.03,134.68 80.70,134.15 81.37,133.69 82.04,133.30 82.71,132.97 83.37,132.71 84.04,132.52 84.71,132.41 85.38,132.37 86.05,132.41 86.72,132.51 87.39,132.69 88.06,132.93 88.73,133.24 89.40,133.61 90.06,134.04 90.73,134.52 91.40,135.04 92.07,135.61 92.74,136.21 93.41,136.84 94.08,137.49 94.75,138.16 95.42,138.83 96.09,139.51 96.75,140.19 97.42,140.85 98.09,141.49 98.76,142.11 99.43,142.69 100.10,143.25 100.77,143.76 101.44,144.22 102.11,144.64 102.78,145.00 103.44,145.31 104.11,145.55 104.78,145.74 105.45,145.86 106.12,145.92 106.79,145.92 107.46,145.85 108.13,145.73 108.80,145.54 109.47,145.30 110.13,145.01 110.80,144.66 111.47,144.27 112.14,143.84 112.81,143.37 113.48,142.86 114.15,142.33 114.82,141.78 115.49,141.22 116.16,140.64 116.82,140.06 117.49,139.49 118.16,138.92 118.83,138.36 119.50,137.82 120.17,137.31 120.84,136.82 121.51,136.37 122.18,135.96 122.85,135.58 123.51,135.26 124.18,134.97 124.85,134.74 125.52,134.56 126.19,134.44 126.86,134.36 127.53,134.34 128.20,134.38 128.87,134.46 129.54,134.60 130.20,134.79 130.87,135.02 131.54,135.30 132.21,135.61 132.88,135.97 133.55,136.36 134.22,136.78 134.89,137.22 135.56,137.68 136.23,138.16 136.89,138.65 137.56,139.15 138.23,139.64 138.90,140.13 139.57,140.61 140.24,141.08 140.91,141.53 141.58,141.95 142.25,142.35 142.92,142.72 143.58,143.05 144.25,143.35 144.92,143.61 145.59,143.82 146.26,143.99 146.93,144.12 147.60,144.20 148.27,144.24 148.94,144.23 149.61,144.18 150.27,144.08 150.94,143.93 151.61,143.75 152.28,143.53 152.95,143.27 153.62,142.98 154.29,142.66 154.96,142.31 155.63,141.94 156.30,141.55 156.96,141.15 157.63,140.73 158.30,140.31 158.97,139.89 159.64,139.47 160.31,139.05 160.98,138.65 161.65,138.26 162.32,137.89 162.99,137.54 163.66,137.21 164.32,136.91 164.99,136.65 165.66,136.41 166.33,136.21 167.00,136.05 167.67,135.92 168.34,135.84 169.01,135.79 169.68,135.78 170.35,135.81 171.01,135.88 171.68,135.99 172.35,136.13 173.02,136.31 173.69,136.52 174.36,136.75 175.03,137.02 175.70,137.30 176.37,137.61 177.04,137.94 177.70,138.28 178.37,138.63 179.04,138.99 179.71,139.35 180.38,139.71 181.05,140.07 181.72,140.42 182.39,140.76 183.06,141.08 183.73,141.39 184.39,141.68 185.06,141.94 185.73,142.18 186.40,142.39 187.07,142.58 187.74,142.73 188.41,142.85 189.08,142.94 189.75,142.99 190.42,143.01 191.08,143.00 191.75,142.95 192.42,142.88 193.09,142.77 193.76,142.63 194.43,142.46 195.10,142.27 195.77,142.05 196.44,141.81 197.11,141.56 197.77,141.28 198.44,141.00 199.11,140.70 199.78,140.40 200.45,140.09 201.12,139.78 201.79,139.47 202.46,139.17 203.13,138.88 203.80,138.60 204.46,138.33 205.13,138.07 205.80,137.84 206.47,137.62 207.14,137.43 207.81,137.27 208.48,137.13 209.15,137.01 209.82,136.92 210.49,136.87 211.15,136.84 211.82,136.84 212.49,136.86 213.16,136.92 213.83,137.00 214.50,137.11 215.17,137.24 215.84,137.40 216.51,137.57 217.18,137.77 217.84,137.98 218.51,138.21 219.18,138.45 219.85,138.70 220.52,138.96 221.19,139.22 221.86,139.48 222.53,139.75 223.20,140.01 223.87,140.26 224.53,140.51 225.20,140.74 225.87,140.97 226.54,141.17 227.21,141.36 227.88,141.53 228.55,141.69 229.22,141.82 229.89,141.92 230.56,142.01 231.22,142.07 231.89,142.10 232.56,142.11 233.23,142.10 233.90,142.06 234.57,142.00 235.24,141.92 235.91,141.81 236.58,141.69 237.25,141.55 237.91,141.38 238.58,141.21 239.25,141.02 239.92,140.82 240.59,140.61 241.26,140.39 241.93,140.17 242.60,139.94 243.27,139.72 243.94,139.49 244.60,139.27 245.27,139.06 245.94,138.85 246.61,138.66 247.28,138.48 247.95,138.31 248.62,138.15 249.29,138.02 249.96,137.90 250.63,137.80 251.29,137.72 251.96,137.66 252.63,137.62 253.30,137.60 253.97,137.60 254.64,137.63 255.31,137.67 255.98,137.73 256.65,137.82 257.32,137.92 257.98,138.03 258.65,138.16 259.32,138.31 259.99,138.47 260.66,138.64 261.33,138.81 262.00,139.00 262.67,139.18 263.34,139.38 264.01,139.57 264.67,139.76 265.34,139.95 266.01,140.14 266.68,140.31 267.35,140.48 268.02,140.64 268.69,140.79 269.36,140.93 270.03,141.05 270.70,141.16 271.36,141.25 272.03,141.33 272.70,141.39 273.37,141.43 274.04,141.45 274.71,141.46 275.38,141.44 276.05,141.41 276.72,141.37 277.39,141.30 278.05,141.22 278.72,141.13 279.39,141.02 280.06,140.90 280.73,140.77 281.40,140.63 282.07,140.49 282.74,140.33 283.41,140.17 284.08,140.01 284.74,139.84 285.41,139.68 286.08,139.52 286.75,139.36 287.42,139.20 288.09,139.05 288.76,138.91 289.43,138.78 290.10,138.66 290.77,138.55 291.43,138.45 292.10,138.37 292.77,138.29 293.44,138.24 294.11,138.20 294.78,138.17 295.45,138.16 296.12,138.17 296.79,138.19 297.46,138.22 298.12,138.27 298.79,138.33 299.46,138.41 300.13,138.49 300.80,138.59 301.47,138.70 302.14,138.81 302.81,138.94 303.48,139.07 304.15,139.20 304.81,139.34 305.48,139.48 306.15,139.62 306.82,139.76 307.49,139.90 308.16,140.04 308.83,140.16 309.50,140.29 310.17,140.40 310.84,140.51 311.50,140.61 312.17,140.70 312.84,140.77 313.51,140.84 314.18,140.89 314.85,140.93 315.52,140.96 316.19,140.98 316.86,140.98 317.53,140.97 318.19,140.94 318.86,140.91 319.53,140.86 320.20,140.80 320.87,140.73 321.54,140.65 322.21,140.56 322.88,140.46 323.55,140.36 324.22,140.25 324.88,140.14 325.55,140.02 326.22,139.90 326.89,139.78 327.56,139.66 328.23,139.54 328.90,139.42 329.57,139.31 330.24,139.20 330.91,139.10 331.57,139.01 332.24,138.92 332.91,138.84 333.58,138.77 334.25,138.71 334.92,138.66 335.59,138.62 336.26,138.59 336.93,138.58 337.60,138.57 338.26,138.58 338.93,138.59 339.60,138.62 340.27,138.66 340.94,138.70 341.61,138.76 342.28,138.82 342.95,138.90 343.62,138.98 344.29,139.06 344.95,139.15 345.62,139.25 346.29,139.35 346.96,139.45 347.63,139.55 348.30,139.66 348.97,139.76 349.64,139.86 350.31,139.96 350.98,140.05 351.64,140.14 352.31,140.22 352.98,140.30 353.65,140.37 354.32,140.43 354.99,140.49 355.66,140.53 356.33,140.57 357.00,140.60 357.67,140.62 358.33,140.63 359.00,140.63 359.67,140.62 360.34,140.60 361.01,140.57 361.68,140.53 362.35,140.49 363.02,140.44 363.69,140.38 364.36,140.31 365.02,140.24 365.69,140.16 366.36,140.08 367.03,140.00 367.70,139.91 368.37,139.83 369.04,139.74 369.71,139.65 370.38,139.56 371.05,139.48 371.71,139.40 372.38,139.32 373.05,139.25 373.72,139.18 374.39,139.11 375.06,139.06 375.73,139.01 376.40,138.97 377.07,138.93 377.74,138.90 378.40,138.88 379.07,138.87 379.74,138.87 380.41,138.87 381.08,138.89 381.75,138.91 382.42,138.94 383.09,138.97 383.76,139.01 384.43,139.06 385.09,139.12 385.76,139.18 386.43,139.24 387.10,139.31 387.77,139.38 388.44,139.45 389.11,139.52 389.78,139.60 390.45,139.67 391.12,139.75 391.78,139.82 392.45,139.89 393.12,139.96 393.79,140.03 394.46,140.09 395.13,140.14 395.80,140.19 396.47,140.24 397.14,140.28 397.81,140.31 398.47,140.34 399.14,140.35 399.81,140.37 400.48,140.37 401.15,140.37 401.82,140.36 402.49,140.35 403.16,140.33 403.83,140.30 404.50,140.26 405.16,140.22 405.83,140.18 406.50,140.13 407.17,140.08 407.84,140.02 408.51,139.96 409.18,139.90 409.85,139.84 410.52,139.78 411.19,139.71 411.85,139.65 412.52,139.58 413.19,139.52 413.86,139.46 414.53,139.41 415.20,139.35 415.87,139.30 416.54,139.26 417.21,139.22 417.88,139.18 418.54,139.15 419.21,139.13 419.88,139.11 420.55,139.10 421.22,139.09 421.89,139.09 422.56,139.09 423.23,139.10 423.90,139.12 424.57,139.14 425.23,139.17 425.90,139.20 426.57,139.24 427.24,139.28 427.91,139.32 428.58,139.37 429.25,139.42 429.92,139.47 430.59,139.52 431.26,139.58 431.92,139.63 432.59,139.69 433.26,139.74 433.93,139.79 434.60,139.84 435.27,139.89 435.94,139.94 436.61,139.98 437.28,140.02 437.95,140.06 438.61,140.09 439.28,140.12 439.95,140.14 440.62,140.16 441.29,140.17 441.96,140.18 442.63,140.19 443.30,140.18 443.97,140.18 444.64,140.17 445.30,140.15 445.97,140.13 446.64,140.10 447.31,140.07 447.98,140.04 448.65,140.00 449.32,139.96 449.99,139.92 450.66,139.88 451.33,139.83 451.99,139.79 452.66,139.74 453.33,139.69 454.00,139.65 454.67,139.60 455.34,139.56 456.01,139.51 456.68,139.47 457.35,139.44 458.02,139.40 458.68,139.37 459.35,139.34 460.02,139.31 460.69,139.29 461.36,139.27 462.03,139.26 462.70,139.25 463.37,139.25 464.04,139.25 464.71,139.25 465.37,139.26 466.04,139.27 466.71,139.29 467.38,139.31 468.05,139.33 468.72,139.36 469.39,139.39 470.06,139.42 470.73,139.46 471.40,139.49 472.06,139.53 472.73,139.57 473.40,139.61 474.07,139.65 474.74,139.69 475.41,139.73 476.08,139.77 476.75,139.81 477.42,139.84 478.09,139.88 478.75,139.91 479.42,139.94 480.09,139.96 480.76,139.98 481.43,140.00 482.10,140.02 482.77,140.03 483.44,140.04 484.11,140.05 484.78,140.05 485.44,140.05 486.11,140.04 486.78,140.03 487.45,140.02 488.12,140.00 488.79,139.98 489.46,139.96 490.13,139.94 490.80,139.91 491.47,139.88 492.13,139.85 492.80,139.82 493.47,139.79 494.14,139.75 494.81,139.72 495.48,139.69 496.15,139.65 496.82,139.62 497.49,139.59 498.16,139.55 498.82,139.52 499.49,139.50 500.16,139.47 500.83,139.45 501.50,139.43 502.17,139.41 502.84,139.39 503.51,139.38 504.18,139.37 504.85,139.37 505.51,139.36 506.18,139.36 506.85,139.37 507.52,139.38 508.19,139.38 508.86,139.40 509.53,139.41 510.20,139.43 510.87,139.45 511.54,139.47 512.20,139.50 512.87,139.52 513.54,139.55 514.21,139.58 514.88,139.61 515.55,139.63 516.22,139.66 516.89,139.69 517.56,139.72 518.23,139.75 518.89,139.78 519.56,139.80 520.23,139.83 520.90,139.85 521.57,139.87 522.24,139.89 522.91,139.91 523.58,139.92 524.25,139.93 524.92,139.94 525.58,139.95 526.25,139.95 526.92,139.95 527.59,139.95 528.26,139.94 528.93,139.94 529.60,139.93 530.27,139.91 530.94,139.90 531.61,139.88 532.27,139.87 532.94,139.85 533.61,139.82 534.28,139.80 534.95,139.78 535.62,139.75 536.29,139.73 536.96,139.70 537.63,139.68 538.29,139.65 538.96,139.63 539.63,139.61 540.30,139.58 540.97,139.56 541.64,139.54 542.31,139.52 542.98,139.51 543.65,139.49 544.32,139.48 544.98,139.47 545.65,139.46 546.32,139.45 546.99,139.45 547.66,139.45 548.33,139.45 549.00,139.45 549.67,139.46 550.34,139.47 551.01,139.48 551.67,139.49 552.34,139.50 553.01,139.51 553.68,139.53 554.35,139.55 555.02,139.57 555.69,139.59 556.36,139.61 557.03,139.63 557.70,139.65 558.36,139.67 559.03,139.69 559.70,139.71 560.37,139.73 561.04,139.75 561.71,139.77 562.38,139.79 563.05,139.81 563.72,139.82 564.39,139.83 565.05,139.85 565.72,139.86 566.39,139.86 567.06,139.87 567.73,139.87 568.40,139.88 569.07,139.88 569.74,139.88 570.41,139.87 571.08,139.87 571.74,139.86 572.41,139.85 573.08,139.84 573.75,139.83 574.42,139.81 575.09,139.80 575.76,139.78 576.43,139.77 577.10,139.75 577.77,139.73 578.43,139.71 579.10,139.69 579.77,139.68 580.44,139.66 581.11,139.64 581.78,139.62 582.45,139.61 583.12,139.59 583.79,139.58 584.46,139.56 585.12,139.55 585.79,139.54 586.46,139.53 587.13,139.53 587.80,139.52 588.47,139.51 589.14,139.51 589.81,139.51 590.48,139.51 591.15,139.51 591.81,139.52 592.48,139.52 593.15,139.53 593.82,139.54 594.49,139.55 595.16,139.56 595.83,139.57 596.50,139.59 597.17,139.60 597.84,139.61 598.50,139.63 599.17,139.65 599.84,139.66 600.51,139.68 601.18,139.69 601.85,139.71 602.52,139.72 603.19,139.74 603.86,139.75 604.53,139.76 605.19,139.77 605.86,139.78 606.53,139.79 607.20,139.80 607.87,139.81 608.54,139.82 609.21,139.82 609.88,139.82 610.55,139.82 611.22,139.82 611.88,139.82 612.55,139.82 613.22,139.82 613.89,139.81 614.56,139.80 615.23,139.79 615.90,139.79 616.57,139.78 617.24,139.76 617.91,139.75 618.57,139.74 619.24,139.73 619.91,139.72 620.58,139.70 621.25,139.69 621.92,139.68 622.59,139.66 623.26,139.65 623.93,139.64 624.60,139.63 625.26,139.61 625.93,139.60 626.60,139.59 627.27,139.59 627.94,139.58 628.61,139.57 629.28,139.57 629.95,139.56 630.62,139.56 631.29,139.56 631.95,139.56 632.62,139.56 633.29,139.56 633.96,139.56 634.63,139.57 635.30,139.57 635.97,139.58 636.64,139.59 637.31,139.59 637.98,139.60 638.64,139.61 639.31,139.62 639.98,139.63 640.65,139.65 641.32,139.66 641.99,139.67 642.66,139.68 643.33,139.69 644.00,139.70 644.67,139.71 645.33,139.72 646.00,139.73 646.67,139.74 647.34,139.75 648.01,139.76 648.68,139.76 649.35,139.77 650.02,139.78 650.69,139.78 651.36,139.78 652.02,139.78 652.69,139.79 653.36,139.78 654.03,139.78 654.70,139.78 655.37,139.78 656.04,139.77 656.71,139.77 657.38,139.76 658.05,139.76 658.71,139.75 659.38,139.74 660.05,139.73 660.72,139.72 661.39,139.71 662.06,139.70 662.73,139.69 663.40,139.68 664.07,139.67 664.74,139.67 665.40,139.66 666.07,139.65 666.74,139.64 667.41,139.63 668.08,139.62 668.75,139.62 669.42,139.61 670.09,139.60 670.76,139.60 671.43,139.60 672.09,139.59 672.76,139.59 673.43,139.59 674.10,139.59 674.77,139.59 675.44,139.59 676.11,139.59 676.78,139.60 677.45,139.60 678.12,139.61 678.78,139.61 679.45,139.62 680.12,139.63 680.79,139.63 681.46,139.64 682.13,139.65 682.80,139.66 683.47,139.66 684.14,139.67 684.81,139.68 685.47,139.69 686.14,139.70 686.81,139.70 687.48,139.71 688.15,139.72 688.82,139.73 689.49,139.73 690.16,139.74 690.83,139.74 691.50,139.75 692.16,139.75 692.83,139.75 693.50,139.76 694.17,139.76 694.84,139.76 695.51,139.76 696.18,139.76 696.85,139.75 697.52,139.75 698.19,139.75 698.85,139.74 699.52,139.74 700.19,139.73 700.86,139.73 701.53,139.72 702.20,139.72" fill="none" stroke="#8CAAE8" stroke-width="1.5" stroke-linejoin="round"/><polyline points="33.20,236.57 33.87,231.20 34.54,225.94 35.21,220.83 35.88,215.94 36.55,211.30 37.21,206.95 37.88,202.95 38.55,199.32 39.22,196.09 39.89,193.31 40.56,190.98 41.23,189.13 41.90,187.77 42.57,186.91 43.24,186.55 43.90,186.70 44.57,187.34 45.24,188.46 45.91,190.06 46.58,192.10 47.25,194.56 47.92,197.42 48.59,200.64 49.26,204.19 49.93,208.02 50.59,212.10 51.26,216.39 51.93,220.83 52.60,225.38 53.27,230.00 53.94,234.65 54.61,239.26 55.28,243.80 55.95,248.22 56.62,252.49 57.28,256.55 57.95,260.37 58.62,263.92 59.29,267.16 59.96,270.06 60.63,272.60 61.30,274.76 61.97,276.51 62.64,277.85 63.31,278.76 63.97,279.24 64.64,279.30 65.31,278.92 65.98,278.13 66.65,276.94 67.32,275.35 67.99,273.39 68.66,271.08 69.33,268.45 69.99,265.54 70.66,262.36 71.33,258.95 72.00,255.36 72.67,251.62 73.34,247.76 74.01,243.83 74.68,239.86 75.35,235.91 76.02,232.00 76.68,228.17 77.35,224.46 78.02,220.92 78.69,217.56 79.36,214.43 80.03,211.55 80.70,208.94 81.37,206.64 82.04,204.66 82.71,203.02 83.37,201.73 84.04,200.79 84.71,200.23 85.38,200.03 86.05,200.20 86.72,200.72 87.39,201.61 88.06,202.83 88.73,204.37 89.40,206.22 90.06,208.35 90.73,210.75 91.40,213.38 92.07,216.21 92.74,219.22 93.41,222.37 94.08,225.63 94.75,228.96 95.42,232.34 96.09,235.73 96.75,239.10 97.42,242.40 98.09,245.61 98.76,248.71 99.43,251.64 100.10,254.40 100.77,256.96 101.44,259.29 102.11,261.36 102.78,263.17 103.44,264.70 104.11,265.93 104.78,266.85 105.45,267.47 106.12,267.77 106.79,267.75 107.46,267.43 108.13,266.80 108.80,265.88 109.47,264.67 110.13,263.20 110.80,261.47 111.47,259.51 112.14,257.35 112.81,255.00 113.48,252.49 114.15,249.84 114.82,247.09 115.49,244.26 116.16,241.39 116.82,238.49 117.49,235.60 118.16,232.75 118.83,229.97 119.50,227.28 120.17,224.71 120.84,222.29 121.51,220.03 122.18,217.96 122.85,216.09 123.51,214.45 124.18,213.04 124.85,211.89 125.52,210.99 126.19,210.35 126.86,209.98 127.53,209.88 128.20,210.05 128.87,210.48 129.54,211.16 130.20,212.10 130.87,213.26 131.54,214.65 132.21,216.24 132.88,218.02 133.55,219.97 134.22,222.06 134.89,224.28 135.56,226.59 136.23,228.98 136.89,231.43 137.56,233.90 138.23,236.37 138.90,238.82 139.57,241.23 140.24,243.56 140.91,245.80 141.58,247.93 142.25,249.92 142.92,251.76 143.58,253.43 144.25,254.91 144.92,256.20 145.59,257.28 146.26,258.14 146.93,258.78 147.60,259.19 148.27,259.37 148.94,259.32 149.61,259.05 150.27,258.55 150.94,257.84 151.61,256.93 152.28,255.82 152.95,254.53 153.62,253.07 154.29,251.47 154.96,249.73 155.63,247.88 156.30,245.93 156.96,243.91 157.63,241.84 158.30,239.73 158.97,237.62 159.64,235.51 160.31,233.44 160.98,231.42 161.65,229.46 162.32,227.60 162.99,225.85 163.66,224.22 164.32,222.74 164.99,221.40 165.66,220.23 166.33,219.23 167.00,218.42 167.67,217.79 168.34,217.36 169.01,217.12 169.68,217.08 170.35,217.24 171.01,217.58 171.68,218.12 172.35,218.83 173.02,219.71 173.69,220.75 174.36,221.93 175.03,223.25 175.70,224.69 176.37,226.24 177.04,227.87 177.70,229.57 178.37,231.33 179.04,233.12 179.71,234.92 180.38,236.73 181.05,238.51 181.72,240.26 182.39,241.96 183.06,243.58 183.73,245.12 184.39,246.56 185.06,247.88 185.73,249.08 186.40,250.14 187.07,251.05 187.74,251.81 188.41,252.42 189.08,252.85 189.75,253.13 190.42,253.23 191.08,253.17 191.75,252.94 192.42,252.55 193.09,252.01 193.76,251.31 194.43,250.48 195.10,249.52 195.77,248.43 196.44,247.24 197.11,245.96 197.77,244.59 198.44,243.16 199.11,241.68 199.78,240.16 200.45,238.62 201.12,237.07 201.79,235.54 202.46,234.03 203.13,232.56 203.80,231.15 204.46,229.80 205.13,228.54 205.80,227.36 206.47,226.29 207.14,225.34 207.81,224.50 208.48,223.80 209.15,223.22 209.82,222.79 210.49,222.50 211.15,222.35 211.82,222.35 212.49,222.48 213.16,222.76 213.83,223.17 214.50,223.71 215.17,224.37 215.84,225.15 216.51,226.03 217.18,227.01 217.84,228.08 218.51,229.22 219.18,230.42 219.85,231.67 220.52,232.96 221.19,234.27 221.86,235.59 222.53,236.91 223.20,238.21 223.87,239.48 224.53,240.71 225.20,241.88 225.87,243.00 226.54,244.03 227.21,244.98 227.88,245.84 228.55,246.60 229.22,247.25 229.89,247.79 230.56,248.21 231.22,248.51 231.89,248.68 232.56,248.74 233.23,248.67 233.90,248.49 234.57,248.18 235.24,247.77 235.91,247.24 236.58,246.62 237.25,245.90 237.91,245.09 238.58,244.21 239.25,243.26 239.92,242.26 240.59,241.21 241.26,240.12 241.93,239.00 242.60,237.88 243.27,236.75 243.94,235.63 244.60,234.53 245.27,233.47 245.94,232.44 246.61,231.47 247.28,230.55 247.95,229.71 248.62,228.94 249.29,228.26 249.96,227.66 250.63,227.16 251.29,226.76 251.96,226.46 252.63,226.27 253.30,226.18 253.97,226.19 254.64,226.31 255.31,226.53 255.98,226.84 256.65,227.25 257.32,227.75 257.98,228.33 258.65,228.99 259.32,229.72 259.99,230.51 260.66,231.35 261.33,232.23 262.00,233.15 262.67,234.09 263.34,235.05 264.01,236.02 264.67,236.98 265.34,237.92 266.01,238.85 266.68,239.74 267.35,240.59 268.02,241.39 268.69,242.14 269.36,242.83 270.03,243.44 270.70,243.98 271.36,244.44 272.03,244.82 272.70,245.11 273.37,245.32 274.04,245.43 274.71,245.46 275.38,245.39 276.05,245.24 276.72,245.01 277.39,244.69 278.05,244.29 278.72,243.83 279.39,243.29 280.06,242.69 280.73,242.04 281.40,241.34 282.07,240.60 282.74,239.82 283.41,239.02 284.08,238.21 284.74,237.39 285.41,236.56 286.08,235.75 286.75,234.95 287.42,234.17 288.09,233.43 288.76,232.73 289.43,232.07 290.10,231.46 290.77,230.91 291.43,230.42 292.10,230.00 292.77,229.64 293.44,229.36 294.11,229.16 294.78,229.03 295.45,228.98 296.12,229.00 296.79,229.10 297.46,229.27 298.12,229.51 298.79,229.82 299.46,230.20 300.13,230.63 300.80,231.12 301.47,231.66 302.14,232.24 302.81,232.86 303.48,233.51 304.15,234.19 304.81,234.88 305.48,235.58 306.15,236.28 306.82,236.98 307.49,237.67 308.16,238.35 308.83,238.99 309.50,239.61 310.17,240.19 310.84,240.73 311.50,241.22 312.17,241.66 312.84,242.04 313.51,242.37 314.18,242.64 314.85,242.84 315.52,242.98 316.19,243.05 316.86,243.06 317.53,243.00 318.19,242.88 318.86,242.70 319.53,242.46 320.20,242.16 320.87,241.81 321.54,241.41 322.21,240.96 322.88,240.48 323.55,239.96 324.22,239.42 324.88,238.85 325.55,238.26 326.22,237.67 326.89,237.06 327.56,236.46 328.23,235.87 328.90,235.29 329.57,234.73 330.24,234.19 330.91,233.68 331.57,233.20 332.24,232.77 332.91,232.37 333.58,232.02 334.25,231.72 334.92,231.47 335.59,231.28 336.26,231.14 336.93,231.05 337.60,231.02 338.26,231.05 338.93,231.13 339.60,231.26 340.27,231.45 340.94,231.68 341.61,231.96 342.28,232.29 342.95,232.65 343.62,233.05 344.29,233.48 344.95,233.94 345.62,234.42 346.29,234.91 346.96,235.42 347.63,235.93 348.30,236.45 348.97,236.96 349.64,237.46 350.31,237.95 350.98,238.42 351.64,238.86 352.31,239.28 352.98,239.67 353.65,240.02 354.32,240.34 354.99,240.61 355.66,240.84 356.33,241.03 357.00,241.17 357.67,241.26 358.33,241.31 359.00,241.30 359.67,241.25 360.34,241.16 361.01,241.02 361.68,240.83 362.35,240.61 363.02,240.35 363.69,240.05 364.36,239.72 365.02,239.36 365.69,238.98 366.36,238.58 367.03,238.16 367.70,237.73 368.37,237.30 369.04,236.86 369.71,236.42 370.38,235.99 371.05,235.56 371.71,235.16 372.38,234.77 373.05,234.40 373.72,234.06 374.39,233.74 375.06,233.46 375.73,233.21 376.40,233.00 377.07,232.82 377.74,232.68 378.40,232.59 379.07,232.53 379.74,232.52 380.41,232.54 381.08,232.61 381.75,232.71 382.42,232.86 383.09,233.03 383.76,233.24 384.43,233.49 385.09,233.76 385.76,234.05 386.43,234.37 387.10,234.71 387.77,235.06 388.44,235.42 389.11,235.79 389.78,236.17 390.45,236.54 391.12,236.92 391.78,237.28 392.45,237.63 393.12,237.97 393.79,238.30 394.46,238.60 395.13,238.88 395.80,239.13 396.47,239.36 397.14,239.55 397.81,239.72 398.47,239.85 399.14,239.94 399.81,240.00 400.48,240.03 401.15,240.02 401.82,239.98 402.49,239.91 403.16,239.80 403.83,239.66 404.50,239.49 405.16,239.29 405.83,239.07 406.50,238.83 407.17,238.57 407.84,238.28 408.51,237.99 409.18,237.68 409.85,237.37 410.52,237.05 411.19,236.73 411.85,236.41 412.52,236.09 413.19,235.78 413.86,235.49 414.53,235.21 415.20,234.94 415.87,234.69 416.54,234.47 417.21,234.26 417.88,234.09 418.54,233.94 419.21,233.81 419.88,233.72 420.55,233.65 421.22,233.62 421.89,233.61 422.56,233.64 423.23,233.69 423.90,233.77 424.57,233.88 425.23,234.01 425.90,234.17 426.57,234.35 427.24,234.55 427.91,234.77 428.58,235.00 429.25,235.25 429.92,235.51 430.59,235.78 431.26,236.05 431.92,236.32 432.59,236.60 433.26,236.87 433.93,237.13 434.60,237.39 435.27,237.64 435.94,237.87 436.61,238.09 437.28,238.29 437.95,238.47 438.61,238.63 439.28,238.77 439.95,238.89 440.62,238.98 441.29,239.04 441.96,239.08 442.63,239.10 443.30,239.09 443.97,239.05 444.64,239.00 445.30,238.91 445.97,238.81 446.64,238.68 447.31,238.53 447.98,238.37 448.65,238.19 449.32,237.99 449.99,237.79 450.66,237.57 451.33,237.34 451.99,237.11 452.66,236.88 453.33,236.64 454.00,236.41 454.67,236.18 455.34,235.96 456.01,235.74 456.68,235.54 457.35,235.35 458.02,235.17 458.68,235.01 459.35,234.86 460.02,234.74 460.69,234.63 461.36,234.54 462.03,234.48 462.70,234.43 463.37,234.41 464.04,234.41 464.71,234.43 465.37,234.47 466.04,234.54 466.71,234.62 467.38,234.72 468.05,234.84 468.72,234.97 469.39,235.12 470.06,235.28 470.73,235.46 471.40,235.64 472.06,235.83 472.73,236.02 473.40,236.22 474.07,236.42 474.74,236.62 475.41,236.82 476.08,237.01 476.75,237.20 477.42,237.38 478.09,237.55 478.75,237.70 479.42,237.85 480.09,237.98 480.76,238.09 481.43,238.19 482.10,238.27 482.77,238.34 483.44,238.38 484.11,238.41 484.78,238.42 485.44,238.41 486.11,238.38 486.78,238.33 487.45,238.27 488.12,238.19 488.79,238.09 489.46,237.99 490.13,237.86 490.80,237.73 491.47,237.59 492.13,237.43 492.80,237.27 493.47,237.11 494.14,236.94 494.81,236.77 495.48,236.60 496.15,236.43 496.82,236.26 497.49,236.10 498.16,235.94 498.82,235.79 499.49,235.66 500.16,235.53 500.83,235.41 501.50,235.31 502.17,235.22 502.84,235.14 503.51,235.08 504.18,235.04 504.85,235.01 505.51,234.99 506.18,234.99 506.85,235.01 507.52,235.05 508.19,235.09 508.86,235.16 509.53,235.23 510.20,235.32 510.87,235.42 511.54,235.53 512.20,235.65 512.87,235.78 513.54,235.91 514.21,236.05 514.88,236.20 515.55,236.34 516.22,236.49 516.89,236.63 517.56,236.78 518.23,236.92 518.89,237.05 519.56,237.18 520.23,237.30 520.90,237.42 521.57,237.52 522.24,237.61 522.91,237.70 523.58,237.77 524.25,237.82 524.92,237.87 525.58,237.90 526.25,237.92 526.92,237.92 527.59,237.91 528.26,237.89 528.93,237.85 529.60,237.80 530.27,237.74 530.94,237.67 531.61,237.59 532.27,237.50 532.94,237.40 533.61,237.29 534.28,237.18 534.95,237.06 535.62,236.94 536.29,236.82 536.96,236.69 537.63,236.57 538.29,236.44 538.96,236.32 539.63,236.21 540.30,236.09 540.97,235.99 541.64,235.89 542.31,235.79 542.98,235.71 543.65,235.64 544.32,235.57 544.98,235.52 545.65,235.48 546.32,235.44 546.99,235.42 547.66,235.42 548.33,235.42 549.00,235.44 549.67,235.46 550.34,235.50 551.01,235.55 551.67,235.60 552.34,235.67 553.01,235.74 553.68,235.83 554.35,235.91 555.02,236.01 555.69,236.11 556.36,236.21 557.03,236.31 557.70,236.42 558.36,236.53 559.03,236.63 559.70,236.74 560.37,236.84 561.04,236.94 561.71,237.03 562.38,237.12 563.05,237.20 563.72,237.28 564.39,237.34 565.05,237.40 565.72,237.45 566.39,237.49 567.06,237.52 567.73,237.54 568.40,237.55 569.07,237.55 569.74,237.55 570.41,237.53 571.08,237.50 571.74,237.46 572.41,237.42 573.08,237.36 573.75,237.30 574.42,237.24 575.09,237.16 575.76,237.08 576.43,237.00 577.10,236.92 577.77,236.83 578.43,236.74 579.10,236.64 579.77,236.55 580.44,236.46 581.11,236.37 581.78,236.29 582.45,236.21 583.12,236.13 583.79,236.06 584.46,235.99 585.12,235.93 585.79,235.88 586.46,235.83 587.13,235.80 587.80,235.77 588.47,235.74 589.14,235.73 589.81,235.73 590.48,235.73 591.15,235.74 591.81,235.76 592.48,235.79 593.15,235.83 593.82,235.87 594.49,235.92 595.16,235.98 595.83,236.04 596.50,236.10 597.17,236.17 597.84,236.24 598.50,236.32 599.17,236.40 599.84,236.47 600.51,236.55 601.18,236.63 601.85,236.71 602.52,236.78 603.19,236.85 603.86,236.92 604.53,236.98 605.19,237.04 605.86,237.09 606.53,237.14 607.20,237.18 607.87,237.22 608.54,237.25 609.21,237.27 609.88,237.28 610.55,237.29 611.22,237.29 611.88,237.28 612.55,237.27 613.22,237.25 613.89,237.22 614.56,237.18 615.23,237.14 615.90,237.10 616.57,237.05 617.24,236.99 617.91,236.94 618.57,236.87 619.24,236.81 619.91,236.75 620.58,236.68 621.25,236.61 621.92,236.55 622.59,236.48 623.26,236.42 623.93,236.35 624.60,236.30 625.26,236.24 625.93,236.19 626.60,236.14 627.27,236.10 627.94,236.06 628.61,236.03 629.28,236.00 629.95,235.98 630.62,235.97 631.29,235.96 631.95,235.95 632.62,235.96 633.29,235.97 633.96,235.98 634.63,236.01 635.30,236.03 635.97,236.07 636.64,236.10 637.31,236.14 637.98,236.19 638.64,236.24 639.31,236.29 639.98,236.34 640.65,236.40 641.32,236.45 641.99,236.51 642.66,236.57 643.33,236.62 644.00,236.68 644.67,236.73 645.33,236.78 646.00,236.83 646.67,236.88 647.34,236.92 648.01,236.96 648.68,236.99 649.35,237.02 650.02,237.05 650.69,237.07 651.36,237.08 652.02,237.09 652.69,237.10 653.36,237.09 654.03,237.09 654.70,237.08 655.37,237.06 656.04,237.04 656.71,237.01 657.38,236.98 658.05,236.95 658.71,236.91 659.38,236.87 660.05,236.83 660.72,236.78 661.39,236.74 662.06,236.69 662.73,236.64 663.40,236.59 664.07,236.54 664.74,236.50 665.40,236.45 666.07,236.41 666.74,236.36 667.41,236.32 668.08,236.28 668.75,236.25 669.42,236.22 670.09,236.19 670.76,236.17 671.43,236.15 672.09,236.14 672.76,236.13 673.43,236.12 674.10,236.12 674.77,236.12 675.44,236.13 676.11,236.14 676.78,236.16 677.45,236.18 678.12,236.21 678.78,236.23 679.45,236.26 680.12,236.30 680.79,236.33 681.46,236.37 682.13,236.41 682.80,236.45 683.47,236.49 684.14,236.53 684.81,236.57 685.47,236.62 686.14,236.66 686.81,236.69 687.48,236.73 688.15,236.77 688.82,236.80 689.49,236.83 690.16,236.86 690.83,236.88 691.50,236.90 692.16,236.92 692.83,236.94 693.50,236.95 694.17,236.95 694.84,236.95 695.51,236.95 696.18,236.95 696.85,236.94 697.52,236.93 698.19,236.91 698.85,236.89 699.52,236.87 700.19,236.84 700.86,236.82 701.53,236.79 702.20,236.75" fill="none" stroke="#FF10FF" stroke-width="1.4" stroke-linejoin="round"/><polyline points="33.20,269.40 33.87,258.50 34.54,247.82 35.21,237.46 35.88,227.52 36.55,218.10 37.21,209.28 37.88,201.15 38.55,193.78 39.22,187.23 39.89,181.58 40.56,176.85 41.23,173.09 41.90,170.33 42.57,168.58 43.24,167.86 43.90,168.16 44.57,169.46 45.24,171.74 45.91,174.98 46.58,179.12 47.25,184.13 47.92,189.93 48.59,196.47 49.26,203.67 49.93,211.45 50.59,219.73 51.26,228.43 51.93,237.45 52.60,246.69 53.27,256.07 53.94,265.49 54.61,274.86 55.28,284.08 55.95,293.05 56.62,301.71 57.28,309.96 57.95,317.72 58.62,324.92 59.29,331.49 59.96,337.39 60.63,342.54 61.30,346.92 61.97,350.48 62.64,353.19 63.31,355.05 63.97,356.03 64.64,356.14 65.31,355.38 65.98,353.77 66.65,351.34 67.32,348.12 67.99,344.14 68.66,339.46 69.33,334.13 69.99,328.20 70.66,321.75 71.33,314.84 72.00,307.54 72.67,299.94 73.34,292.11 74.01,284.13 74.68,276.09 75.35,268.05 76.02,260.11 76.68,252.35 77.35,244.83 78.02,237.62 78.69,230.81 79.36,224.45 80.03,218.60 80.70,213.32 81.37,208.64 82.04,204.62 82.71,201.29 83.37,198.67 84.04,196.77 84.71,195.62 85.38,195.22 86.05,195.56 86.72,196.63 87.39,198.42 88.06,200.90 88.73,204.03 89.40,207.79 90.06,212.12 90.73,216.98 91.40,222.32 92.07,228.07 92.74,234.17 93.41,240.57 94.08,247.19 94.75,253.96 95.42,260.82 96.09,267.70 96.75,274.53 97.42,281.24 98.09,287.76 98.76,294.03 99.43,300.00 100.10,305.60 100.77,310.79 101.44,315.51 102.11,319.73 102.78,323.40 103.44,326.50 104.11,329.00 104.78,330.87 105.45,332.12 106.12,332.73 106.79,332.70 107.46,332.04 108.13,330.77 108.80,328.89 109.47,326.44 110.13,323.45 110.80,319.95 111.47,315.98 112.14,311.58 112.81,306.81 113.48,301.71 114.15,296.34 114.82,290.76 115.49,285.01 116.16,279.17 116.82,273.30 117.49,267.44 118.16,261.65 118.83,256.01 119.50,250.55 120.17,245.33 120.84,240.41 121.51,235.82 122.18,231.62 122.85,227.83 123.51,224.50 124.18,221.64 124.85,219.29 125.52,217.46 126.19,216.17 126.86,215.43 127.53,215.22 128.20,215.56 128.87,216.44 129.54,217.83 130.20,219.72 130.87,222.09 131.54,224.90 132.21,228.14 132.88,231.75 133.55,235.70 134.22,239.94 134.89,244.44 135.56,249.14 136.23,254.00 136.89,258.96 137.56,263.98 138.23,269.00 138.90,273.98 139.57,278.86 140.24,283.59 140.91,288.14 141.58,292.46 142.25,296.50 142.92,300.24 143.58,303.63 144.25,306.64 144.92,309.25 145.59,311.44 146.26,313.19 146.93,314.49 147.60,315.32 148.27,315.69 148.94,315.59 149.61,315.03 150.27,314.02 150.94,312.58 151.61,310.73 152.28,308.47 152.95,305.86 153.62,302.90 154.29,299.64 154.96,296.11 155.63,292.35 156.30,288.40 156.96,284.30 157.63,280.09 158.30,275.82 158.97,271.52 159.64,267.25 160.31,263.04 160.98,258.94 161.65,254.98 162.32,251.20 162.99,247.64 163.66,244.34 164.32,241.32 164.99,238.60 165.66,236.23 166.33,234.20 167.00,232.55 167.67,231.28 168.34,230.40 169.01,229.92 169.68,229.84 170.35,230.16 171.01,230.86 171.68,231.94 172.35,233.38 173.02,235.17 173.69,237.28 174.36,239.68 175.03,242.37 175.70,245.29 176.37,248.43 177.04,251.74 177.70,255.19 178.37,258.76 179.04,262.39 179.71,266.06 180.38,269.72 181.05,273.35 181.72,276.90 182.39,280.34 183.06,283.63 183.73,286.75 184.39,289.67 185.06,292.36 185.73,294.79 186.40,296.94 187.07,298.80 187.74,300.35 188.41,301.57 189.08,302.46 189.75,303.01 190.42,303.22 191.08,303.09 191.75,302.63 192.42,301.84 193.09,300.73 193.76,299.33 194.43,297.64 195.10,295.68 195.77,293.48 196.44,291.07 197.11,288.46 197.77,285.69 198.44,282.78 199.11,279.77 199.78,276.69 200.45,273.56 201.12,270.42 201.79,267.31 202.46,264.24 203.13,261.26 203.80,258.39 204.46,255.66 205.13,253.09 205.80,250.71 206.47,248.54 207.14,246.60 207.81,244.90 208.48,243.47 209.15,242.31 209.82,241.43 210.49,240.84 211.15,240.54 211.82,240.53 212.49,240.80 213.16,241.36 213.83,242.20 214.50,243.29 215.17,244.64 215.84,246.22 216.51,248.01 217.18,250.00 217.84,252.16 218.51,254.48 219.18,256.92 219.85,259.46 220.52,262.07 221.19,264.73 221.86,267.41 222.53,270.08 223.20,272.72 223.87,275.30 224.53,277.80 225.20,280.19 225.87,282.44 226.54,284.55 227.21,286.48 227.88,288.22 228.55,289.76 229.22,291.08 229.89,292.17 230.56,293.02 231.22,293.63 231.89,293.99 232.56,294.10 233.23,293.97 233.90,293.59 234.57,292.97 235.24,292.13 235.91,291.07 236.58,289.80 237.25,288.34 237.91,286.70 238.58,284.92 239.25,282.99 239.92,280.95 240.59,278.81 241.26,276.60 241.93,274.34 242.60,272.05 243.27,269.76 243.94,267.49 244.60,265.26 245.27,263.10 245.94,261.02 246.61,259.04 247.28,257.18 247.95,255.47 248.62,253.91 249.29,252.52 249.96,251.32 250.63,250.30 251.29,249.49 251.96,248.88 252.63,248.49 253.30,248.30 253.97,248.33 254.64,248.57 255.31,249.01 255.98,249.65 256.65,250.48 257.32,251.50 257.98,252.68 258.65,254.01 259.32,255.49 259.99,257.09 260.66,258.79 261.33,260.59 262.00,262.46 262.67,264.37 263.34,266.32 264.01,268.28 264.67,270.23 265.34,272.15 266.01,274.02 266.68,275.84 267.35,277.56 268.02,279.19 268.69,280.71 269.36,282.10 270.03,283.35 270.70,284.44 271.36,285.38 272.03,286.15 272.70,286.74 273.37,287.15 274.04,287.39 274.71,287.44 275.38,287.31 276.05,287.00 276.72,286.53 277.39,285.88 278.05,285.08 278.72,284.13 279.39,283.04 280.06,281.83 280.73,280.50 281.40,279.08 282.07,277.58 282.74,276.00 283.41,274.38 284.08,272.73 284.74,271.06 285.41,269.39 286.08,267.73 286.75,266.11 287.42,264.54 288.09,263.03 288.76,261.60 289.43,260.26 290.10,259.03 290.77,257.91 291.43,256.92 292.10,256.06 292.77,255.34 293.44,254.77 294.11,254.35 294.78,254.09 295.45,253.98 296.12,254.03 296.79,254.23 297.46,254.58 298.12,255.07 298.79,255.70 299.46,256.46 300.13,257.34 300.80,258.34 301.47,259.43 302.14,260.61 302.81,261.87 303.48,263.19 304.15,264.56 304.81,265.96 305.48,267.39 306.15,268.82 306.82,270.24 307.49,271.64 308.16,273.00 308.83,274.32 309.50,275.57 310.17,276.75 310.84,277.84 311.50,278.84 312.17,279.73 312.84,280.51 313.51,281.18 314.18,281.71 314.85,282.13 315.52,282.41 316.19,282.55 316.86,282.57 317.53,282.45 318.19,282.21 318.86,281.84 319.53,281.35 320.20,280.74 320.87,280.03 321.54,279.22 322.21,278.32 322.88,277.34 323.55,276.29 324.22,275.18 324.88,274.03 325.55,272.84 326.22,271.63 326.89,270.40 327.56,269.18 328.23,267.98 328.90,266.80 329.57,265.66 330.24,264.57 330.91,263.53 331.57,262.57 332.24,261.68 332.91,260.88 333.58,260.17 334.25,259.56 334.92,259.05 335.59,258.66 336.26,258.37 336.93,258.20 337.60,258.14 338.26,258.19 338.93,258.35 339.60,258.63 340.27,259.00 340.94,259.48 341.61,260.05 342.28,260.71 342.95,261.45 343.62,262.26 344.29,263.13 344.95,264.06 345.62,265.03 346.29,266.04 346.96,267.07 347.63,268.11 348.30,269.15 348.97,270.19 349.64,271.21 350.31,272.20 350.98,273.15 351.64,274.05 352.31,274.90 352.98,275.69 353.65,276.41 354.32,277.05 354.99,277.60 355.66,278.07 356.33,278.45 357.00,278.74 357.67,278.92 358.33,279.02 359.00,279.01 359.67,278.91 360.34,278.72 361.01,278.43 361.68,278.06 362.35,277.60 363.02,277.07 363.69,276.47 364.36,275.80 365.02,275.07 365.69,274.30 366.36,273.48 367.03,272.64 367.70,271.76 368.37,270.88 369.04,269.98 369.71,269.09 370.38,268.22 371.05,267.36 371.71,266.53 372.38,265.74 373.05,264.99 373.72,264.30 374.39,263.66 375.06,263.08 375.73,262.58 376.40,262.15 377.07,261.79 377.74,261.51 378.40,261.32 379.07,261.20 379.74,261.17 380.41,261.23 381.08,261.36 381.75,261.57 382.42,261.86 383.09,262.22 383.76,262.65 384.43,263.14 385.09,263.69 385.76,264.29 386.43,264.93 387.10,265.62 387.77,266.33 388.44,267.07 389.11,267.82 389.78,268.58 390.45,269.35 391.12,270.10 391.78,270.84 392.45,271.56 393.12,272.25 393.79,272.91 394.46,273.52 395.13,274.09 395.80,274.60 396.47,275.06 397.14,275.45 397.81,275.79 398.47,276.05 399.14,276.25 399.81,276.37 400.48,276.43 401.15,276.41 401.82,276.33 402.49,276.17 403.16,275.95 403.83,275.67 404.50,275.33 405.16,274.93 405.83,274.48 406.50,273.99 407.17,273.45 407.84,272.88 408.51,272.28 409.18,271.66 409.85,271.02 410.52,270.37 411.19,269.72 411.85,269.07 412.52,268.43 413.19,267.81 413.86,267.20 414.53,266.63 415.20,266.09 415.87,265.59 416.54,265.13 417.21,264.72 417.88,264.36 418.54,264.05 419.21,263.80 419.88,263.61 420.55,263.48 421.22,263.41 421.89,263.39 422.56,263.44 423.23,263.55 423.90,263.71 424.57,263.93 425.23,264.20 425.90,264.53 426.57,264.89 427.24,265.30 427.91,265.74 428.58,266.22 429.25,266.72 429.92,267.25 430.59,267.79 431.26,268.34 431.92,268.90 432.59,269.45 433.26,270.00 433.93,270.54 434.60,271.07 435.27,271.57 435.94,272.04 436.61,272.48 437.28,272.89 437.95,273.26 438.61,273.58 439.28,273.87 439.95,274.10 440.62,274.29 441.29,274.42 441.96,274.50 442.63,274.54 443.30,274.52 443.97,274.44 444.64,274.32 445.30,274.16 445.97,273.94 446.64,273.68 447.31,273.39 447.98,273.05 448.65,272.69 449.32,272.29 449.99,271.87 450.66,271.43 451.33,270.97 451.99,270.50 452.66,270.03 453.33,269.55 454.00,269.08 454.67,268.61 455.34,268.16 456.01,267.72 456.68,267.31 457.35,266.92 458.02,266.56 458.68,266.23 459.35,265.94 460.02,265.68 460.69,265.46 461.36,265.29 462.03,265.15 462.70,265.06 463.37,265.02 464.04,265.02 464.71,265.06 465.37,265.14 466.04,265.27 466.71,265.44 467.38,265.64 468.05,265.88 468.72,266.16 469.39,266.46 470.06,266.79 470.73,267.14 471.40,267.51 472.06,267.89 472.73,268.29 473.40,268.69 474.07,269.10 474.74,269.51 475.41,269.91 476.08,270.30 476.75,270.68 477.42,271.04 478.09,271.38 478.75,271.70 479.42,272.00 480.09,272.26 480.76,272.49 481.43,272.69 482.10,272.86 482.77,272.99 483.44,273.08 484.11,273.13 484.78,273.15 485.44,273.13 486.11,273.07 486.78,272.98 487.45,272.85 488.12,272.69 488.79,272.50 489.46,272.27 490.13,272.03 490.80,271.75 491.47,271.46 492.13,271.15 492.80,270.83 493.47,270.49 494.14,270.15 494.81,269.80 495.48,269.45 496.15,269.11 496.82,268.77 497.49,268.44 498.16,268.12 498.82,267.82 499.49,267.54 500.16,267.28 500.83,267.05 501.50,266.84 502.17,266.65 502.84,266.50 503.51,266.38 504.18,266.28 504.85,266.22 505.51,266.20 506.18,266.20 506.85,266.24 507.52,266.30 508.19,266.40 508.86,266.53 509.53,266.68 510.20,266.86 510.87,267.07 511.54,267.29 512.20,267.53 512.87,267.79 513.54,268.06 514.21,268.35 514.88,268.64 515.55,268.93 516.22,269.23 516.89,269.53 517.56,269.82 518.23,270.10 518.89,270.38 519.56,270.64 520.23,270.89 520.90,271.12 521.57,271.33 522.24,271.52 522.91,271.69 523.58,271.83 524.25,271.94 524.92,272.03 525.58,272.10 526.25,272.13 526.92,272.14 527.59,272.12 528.26,272.07 528.93,272.00 529.60,271.90 530.27,271.78 530.94,271.63 531.61,271.47 532.27,271.29 532.94,271.08 533.61,270.87 534.28,270.64 534.95,270.40 535.62,270.15 536.29,269.90 536.96,269.65 537.63,269.40 538.29,269.14 538.96,268.90 539.63,268.66 540.30,268.43 540.97,268.21 541.64,268.01 542.31,267.82 542.98,267.65 543.65,267.50 544.32,267.37 544.98,267.26 545.65,267.18 546.32,267.12 546.99,267.08 547.66,267.06 548.33,267.07 549.00,267.10 549.67,267.15 550.34,267.22 551.01,267.32 551.67,267.44 552.34,267.57 553.01,267.72 553.68,267.89 554.35,268.07 555.02,268.26 555.69,268.46 556.36,268.67 557.03,268.88 557.70,269.10 558.36,269.31 559.03,269.53 559.70,269.74 560.37,269.95 561.04,270.15 561.71,270.34 562.38,270.52 563.05,270.68 563.72,270.83 564.39,270.97 565.05,271.09 565.72,271.19 566.39,271.27 567.06,271.33 567.73,271.38 568.40,271.40 569.07,271.40 569.74,271.38 570.41,271.34 571.08,271.29 571.74,271.21 572.41,271.12 573.08,271.01 573.75,270.89 574.42,270.75 575.09,270.60 575.76,270.44 576.43,270.28 577.10,270.10 577.77,269.92 578.43,269.74 579.10,269.55 579.77,269.37 580.44,269.18 581.11,269.00 581.78,268.83 582.45,268.66 583.12,268.51 583.79,268.36 584.46,268.23 585.12,268.11 585.79,268.00 586.46,267.91 587.13,267.83 587.80,267.77 588.47,267.73 589.14,267.70 589.81,267.69 590.48,267.70 591.15,267.72 591.81,267.76 592.48,267.82 593.15,267.89 593.82,267.98 594.49,268.08 595.16,268.19 595.83,268.32 596.50,268.45 597.17,268.59 597.84,268.74 598.50,268.89 599.17,269.05 599.84,269.21 600.51,269.36 601.18,269.52 601.85,269.68 602.52,269.83 603.19,269.97 603.86,270.11 604.53,270.24 605.19,270.36 605.86,270.46 606.53,270.56 607.20,270.65 607.87,270.72 608.54,270.77 609.21,270.82 609.88,270.85 610.55,270.86 611.22,270.86 611.88,270.84 612.55,270.81 613.22,270.77 613.89,270.71 614.56,270.64 615.23,270.56 615.90,270.47 616.57,270.37 617.24,270.26 617.91,270.14 618.57,270.02 619.24,269.89 619.91,269.76 620.58,269.62 621.25,269.49 621.92,269.35 622.59,269.22 623.26,269.09 623.93,268.96 624.60,268.84 625.26,268.73 625.93,268.62 626.60,268.53 627.27,268.44 627.94,268.36 628.61,268.30 629.28,268.24 629.95,268.20 630.62,268.17 631.29,268.16 631.95,268.15 632.62,268.16 633.29,268.18 633.96,268.21 634.63,268.26 635.30,268.31 635.97,268.38 636.64,268.45 637.31,268.53 637.98,268.62 638.64,268.72 639.31,268.83 639.98,268.93 640.65,269.05 641.32,269.16 641.99,269.28 642.66,269.39 643.33,269.51 644.00,269.62 644.67,269.73 645.33,269.83 646.00,269.93 646.67,270.03 647.34,270.11 648.01,270.19 648.68,270.26 649.35,270.32 650.02,270.37 650.69,270.41 651.36,270.44 652.02,270.46 652.69,270.47 653.36,270.46 654.03,270.45 654.70,270.43 655.37,270.39 656.04,270.35 656.71,270.30 657.38,270.24 658.05,270.17 658.71,270.10 659.38,270.01 660.05,269.93 660.72,269.84 661.39,269.74 662.06,269.64 662.73,269.55 663.40,269.45 664.07,269.35 664.74,269.25 665.40,269.16 666.07,269.07 666.74,268.98 667.41,268.90 668.08,268.82 668.75,268.75 669.42,268.69 670.09,268.63 670.76,268.59 671.43,268.55 672.09,268.52 672.76,268.50 673.43,268.49 674.10,268.49 674.77,268.50 675.44,268.51 676.11,268.54 676.78,268.57 677.45,268.61 678.12,268.66 678.78,268.72 679.45,268.78 680.12,268.85 680.79,268.92 681.46,268.99 682.13,269.07 682.80,269.16 683.47,269.24 684.14,269.32 684.81,269.41 685.47,269.49 686.14,269.57 686.81,269.65 687.48,269.73 688.15,269.80 688.82,269.87 689.49,269.93 690.16,269.99 690.83,270.04 691.50,270.08 692.16,270.11 692.83,270.14 693.50,270.16 694.17,270.17 694.84,270.18 695.51,270.18 696.18,270.17 696.85,270.15 697.52,270.12 698.19,270.09 698.85,270.05 699.52,270.01 700.19,269.95 700.86,269.90 701.53,269.84 702.20,269.77" fill="none" stroke="#FF4A10" stroke-width="1.5" stroke-linejoin="round"/><polyline points="33.20,269.40 33.87,258.82 34.54,248.46 35.21,238.40 35.88,228.76 36.55,219.61 37.21,211.05 37.88,203.16 38.55,196.01 39.22,189.66 39.89,184.17 40.56,179.58 41.23,175.94 41.90,173.26 42.57,171.56 43.24,170.86 43.90,171.15 44.57,172.41 45.24,174.63 45.91,177.77 46.58,181.79 47.25,186.65 47.92,192.28 48.59,198.62 49.26,205.61 49.93,213.16 50.59,221.20 51.26,229.64 51.93,238.39 52.60,247.36 53.27,256.47 53.94,265.61 54.61,274.70 55.28,283.64 55.95,292.36 56.62,300.75 57.28,308.76 57.95,316.29 58.62,323.28 59.29,329.66 59.96,335.38 60.63,340.38 61.30,344.63 61.97,348.08 62.64,350.72 63.31,352.51 63.97,353.47 64.64,353.57 65.31,352.84 65.98,351.28 66.65,348.92 67.32,345.79 67.99,341.93 68.66,337.39 69.33,332.21 69.99,326.46 70.66,320.20 71.33,313.50 72.00,306.42 72.67,299.04 73.34,291.44 74.01,283.70 74.68,275.89 75.35,268.09 76.02,260.39 76.68,252.85 77.35,245.55 78.02,238.56 78.69,231.95 79.36,225.78 80.03,220.10 80.70,214.98 81.37,210.44 82.04,206.54 82.71,203.30 83.37,200.76 84.04,198.92 84.71,197.80 85.38,197.41 86.05,197.74 86.72,198.78 87.39,200.52 88.06,202.92 88.73,205.97 89.40,209.61 90.06,213.82 90.73,218.53 91.40,223.71 92.07,229.29 92.74,235.21 93.41,241.42 94.08,247.84 94.75,254.42 95.42,261.08 96.09,267.75 96.75,274.38 97.42,280.89 98.09,287.22 98.76,293.31 99.43,299.10 100.10,304.53 100.77,309.57 101.44,314.15 102.11,318.24 102.78,321.80 103.44,324.81 104.11,327.23 104.78,329.06 105.45,330.27 106.12,330.86 106.79,330.83 107.46,330.19 108.13,328.96 108.80,327.14 109.47,324.76 110.13,321.85 110.80,318.45 111.47,314.60 112.14,310.33 112.81,305.70 113.48,300.76 114.15,295.54 114.82,290.13 115.49,284.55 116.16,278.89 116.82,273.18 117.49,267.49 118.16,261.88 118.83,256.40 119.50,251.11 120.17,246.04 120.84,241.27 121.51,236.82 122.18,232.73 122.85,229.06 123.51,225.82 124.18,223.05 124.85,220.77 125.52,219.00 126.19,217.75 126.86,217.02 127.53,216.82 128.20,217.15 128.87,218.00 129.54,219.35 130.20,221.19 130.87,223.49 131.54,226.22 132.21,229.35 132.88,232.86 133.55,236.69 134.22,240.81 134.89,245.18 135.56,249.74 136.23,254.46 136.89,259.27 137.56,264.14 138.23,269.01 138.90,273.84 139.57,278.58 140.24,283.17 140.91,287.59 141.58,291.78 142.25,295.70 142.92,299.32 143.58,302.61 144.25,305.54 144.92,308.07 145.59,310.20 146.26,311.90 146.93,313.15 147.60,313.96 148.27,314.32 148.94,314.22 149.61,313.68 150.27,312.70 150.94,311.31 151.61,309.50 152.28,307.32 152.95,304.78 153.62,301.91 154.29,298.75 154.96,295.32 155.63,291.67 156.30,287.84 156.96,283.86 157.63,279.78 158.30,275.63 158.97,271.46 159.64,267.31 160.31,263.23 160.98,259.25 161.65,255.40 162.32,251.74 162.99,248.29 163.66,245.08 164.32,242.15 164.99,239.51 165.66,237.21 166.33,235.24 167.00,233.64 167.67,232.41 168.34,231.56 169.01,231.09 169.68,231.01 170.35,231.32 171.01,232.00 171.68,233.05 172.35,234.44 173.02,236.18 173.69,238.23 174.36,240.56 175.03,243.17 175.70,246.00 176.37,249.05 177.04,252.26 177.70,255.61 178.37,259.07 179.04,262.60 179.71,266.16 180.38,269.71 181.05,273.23 181.72,276.68 182.39,280.01 183.06,283.21 183.73,286.24 184.39,289.07 185.06,291.68 185.73,294.04 186.40,296.13 187.07,297.93 187.74,299.43 188.41,300.62 189.08,301.48 189.75,302.01 190.42,302.22 191.08,302.09 191.75,301.65 192.42,300.88 193.09,299.81 193.76,298.44 194.43,296.80 195.10,294.90 195.77,292.77 196.44,290.43 197.11,287.90 197.77,285.21 198.44,282.39 199.11,279.46 199.78,276.47 200.45,273.44 201.12,270.39 201.79,267.37 202.46,264.40 203.13,261.50 203.80,258.72 204.46,256.06 205.13,253.57 205.80,251.26 206.47,249.16 207.14,247.27 207.81,245.63 208.48,244.24 209.15,243.11 209.82,242.26 210.49,241.68 211.15,241.39 211.82,241.38 212.49,241.65 213.16,242.19 213.83,243.00 214.50,244.06 215.17,245.37 215.84,246.90 216.51,248.64 217.18,250.58 217.84,252.67 218.51,254.92 219.18,257.29 219.85,259.75 220.52,262.29 221.19,264.87 221.86,267.47 222.53,270.06 223.20,272.63 223.87,275.13 224.53,277.55 225.20,279.87 225.87,282.06 226.54,284.10 227.21,285.98 227.88,287.67 228.55,289.16 229.22,290.44 229.89,291.50 230.56,292.32 231.22,292.91 231.89,293.26 232.56,293.37 233.23,293.24 233.90,292.87 234.57,292.28 235.24,291.46 235.91,290.42 236.58,289.19 237.25,287.78 237.91,286.19 238.58,284.46 239.25,282.59 239.92,280.61 240.59,278.53 241.26,276.39 241.93,274.19 242.60,271.98 243.27,269.75 243.94,267.55 244.60,265.39 245.27,263.28 245.94,261.26 246.61,259.35 247.28,257.55 247.95,255.88 248.62,254.37 249.29,253.02 249.96,251.85 250.63,250.87 251.29,250.08 251.96,249.49 252.63,249.10 253.30,248.93 253.97,248.95 254.64,249.18 255.31,249.61 255.98,250.24 256.65,251.04 257.32,252.03 257.98,253.17 258.65,254.47 259.32,255.90 259.99,257.45 260.66,259.11 261.33,260.85 262.00,262.66 262.67,264.52 263.34,266.41 264.01,268.31 264.67,270.20 265.34,272.07 266.01,273.89 266.68,275.64 267.35,277.32 268.02,278.90 268.69,280.38 269.36,281.72 270.03,282.94 270.70,284.00 271.36,284.91 272.03,285.65 272.70,286.23 273.37,286.63 274.04,286.86 274.71,286.91 275.38,286.78 276.05,286.48 276.72,286.02 277.39,285.39 278.05,284.62 278.72,283.69 279.39,282.64 280.06,281.46 280.73,280.17 281.40,278.79 282.07,277.33 282.74,275.81 283.41,274.24 284.08,272.63 284.74,271.01 285.41,269.39 286.08,267.78 286.75,266.21 287.42,264.68 288.09,263.22 288.76,261.83 289.43,260.53 290.10,259.33 290.77,258.25 291.43,257.29 292.10,256.45 292.77,255.76 293.44,255.20 294.11,254.80 294.78,254.54 295.45,254.44 296.12,254.48 296.79,254.68 297.46,255.01 298.12,255.49 298.79,256.10 299.46,256.84 300.13,257.70 300.80,258.66 301.47,259.72 302.14,260.87 302.81,262.09 303.48,263.37 304.15,264.70 304.81,266.07 305.48,267.45 306.15,268.84 306.82,270.22 307.49,271.57 308.16,272.90 308.83,274.17 309.50,275.39 310.17,276.53 310.84,277.59 311.50,278.56 312.17,279.42 312.84,280.18 313.51,280.83 314.18,281.35 314.85,281.75 315.52,282.02 316.19,282.17 316.86,282.18 317.53,282.07 318.19,281.83 318.86,281.47 319.53,280.99 320.20,280.41 320.87,279.72 321.54,278.93 322.21,278.06 322.88,277.10 323.55,276.09 324.22,275.01 324.88,273.89 325.55,272.74 326.22,271.56 326.89,270.37 327.56,269.19 328.23,268.02 328.90,266.88 329.57,265.77 330.24,264.71 330.91,263.71 331.57,262.77 332.24,261.91 332.91,261.13 333.58,260.44 334.25,259.85 334.92,259.36 335.59,258.97 336.26,258.70 336.93,258.53 337.60,258.47 338.26,258.52 338.93,258.68 339.60,258.94 340.27,259.31 340.94,259.77 341.61,260.33 342.28,260.97 342.95,261.68 343.62,262.47 344.29,263.32 344.95,264.22 345.62,265.16 346.29,266.14 346.96,267.13 347.63,268.15 348.30,269.16 348.97,270.16 349.64,271.15 350.31,272.11 350.98,273.04 351.64,273.92 352.31,274.74 352.98,275.51 353.65,276.20 354.32,276.82 354.99,277.36 355.66,277.82 356.33,278.18 357.00,278.46 357.67,278.64 358.33,278.73 359.00,278.73 359.67,278.63 360.34,278.44 361.01,278.16 361.68,277.80 362.35,277.36 363.02,276.84 363.69,276.26 364.36,275.61 365.02,274.91 365.69,274.15 366.36,273.36 367.03,272.54 367.70,271.69 368.37,270.83 369.04,269.97 369.71,269.10 370.38,268.25 371.05,267.42 371.71,266.62 372.38,265.85 373.05,265.12 373.72,264.45 374.39,263.83 375.06,263.27 375.73,262.78 376.40,262.36 377.07,262.01 377.74,261.75 378.40,261.56 379.07,261.45 379.74,261.42 380.41,261.47 381.08,261.60 381.75,261.80 382.42,262.08 383.09,262.43 383.76,262.85 384.43,263.32 385.09,263.86 385.76,264.44 386.43,265.07 387.10,265.73 387.77,266.42 388.44,267.14 389.11,267.87 389.78,268.61 390.45,269.35 391.12,270.08 391.78,270.80 392.45,271.50 393.12,272.17 393.79,272.80 394.46,273.40 395.13,273.95 395.80,274.45 396.47,274.89 397.14,275.28 397.81,275.60 398.47,275.85 399.14,276.04 399.81,276.17 400.48,276.22 401.15,276.21 401.82,276.12 402.49,275.97 403.16,275.76 403.83,275.49 404.50,275.15 405.16,274.77 405.83,274.33 406.50,273.85 407.17,273.33 407.84,272.78 408.51,272.19 409.18,271.59 409.85,270.97 410.52,270.34 411.19,269.71 411.85,269.08 412.52,268.46 413.19,267.85 413.86,267.27 414.53,266.71 415.20,266.19 415.87,265.70 416.54,265.26 417.21,264.86 417.88,264.51 418.54,264.21 419.21,263.97 419.88,263.78 420.55,263.65 421.22,263.58 421.89,263.57 422.56,263.62 423.23,263.72 423.90,263.88 424.57,264.09 425.23,264.36 425.90,264.67 426.57,265.02 427.24,265.42 427.91,265.85 428.58,266.31 429.25,266.80 429.92,267.31 430.59,267.84 431.26,268.37 431.92,268.91 432.59,269.45 433.26,269.99 433.93,270.51 434.60,271.02 435.27,271.50 435.94,271.96 436.61,272.39 437.28,272.79 437.95,273.14 438.61,273.46 439.28,273.73 439.95,273.96 440.62,274.14 441.29,274.27 441.96,274.35 442.63,274.38 443.30,274.36 443.97,274.30 444.64,274.18 445.30,274.02 445.97,273.81 446.64,273.56 447.31,273.27 447.98,272.95 448.65,272.59 449.32,272.20 449.99,271.80 450.66,271.37 451.33,270.92 451.99,270.47 452.66,270.01 453.33,269.55 454.00,269.09 454.67,268.64 455.34,268.20 456.01,267.77 456.68,267.37 457.35,266.99 458.02,266.64 458.68,266.32 459.35,266.04 460.02,265.79 460.69,265.58 461.36,265.41 462.03,265.28 462.70,265.19 463.37,265.15 464.04,265.15 464.71,265.19 465.37,265.27 466.04,265.39 466.71,265.55 467.38,265.75 468.05,265.99 468.72,266.25 469.39,266.54 470.06,266.86 470.73,267.20 471.40,267.56 472.06,267.94 472.73,268.32 473.40,268.72 474.07,269.11 474.74,269.50 475.41,269.89 476.08,270.27 476.75,270.64 477.42,270.99 478.09,271.32 478.75,271.63 479.42,271.92 480.09,272.18 480.76,272.40 481.43,272.60 482.10,272.76 482.77,272.88 483.44,272.97 484.11,273.02 484.78,273.04 485.44,273.02 486.11,272.96 486.78,272.87 487.45,272.75 488.12,272.59 488.79,272.40 489.46,272.19 490.13,271.95 490.80,271.68 491.47,271.40 492.13,271.10 492.80,270.78 493.47,270.46 494.14,270.12 494.81,269.79 495.48,269.45 496.15,269.12 496.82,268.79 497.49,268.47 498.16,268.16 498.82,267.87 499.49,267.60 500.16,267.35 500.83,267.12 501.50,266.91 502.17,266.73 502.84,266.58 503.51,266.47 504.18,266.38 504.85,266.32 505.51,266.29 506.18,266.30 506.85,266.33 507.52,266.40 508.19,266.49 508.86,266.61 509.53,266.76 510.20,266.94 510.87,267.13 511.54,267.35 512.20,267.59 512.87,267.84 513.54,268.10 514.21,268.38 514.88,268.66 515.55,268.95 516.22,269.24 516.89,269.52 517.56,269.81 518.23,270.08 518.89,270.35 519.56,270.61 520.23,270.85 520.90,271.07 521.57,271.27 522.24,271.46 522.91,271.62 523.58,271.76 524.25,271.87 524.92,271.96 525.58,272.02 526.25,272.05 526.92,272.06 527.59,272.04 528.26,271.99 528.93,271.92 529.60,271.83 530.27,271.71 530.94,271.57 531.61,271.41 532.27,271.23 532.94,271.03 533.61,270.82 534.28,270.60 534.95,270.37 535.62,270.13 536.29,269.89 536.96,269.64 537.63,269.40 538.29,269.15 538.96,268.91 539.63,268.68 540.30,268.46 540.97,268.25 541.64,268.05 542.31,267.87 542.98,267.71 543.65,267.56 544.32,267.43 544.98,267.33 545.65,267.24 546.32,267.18 546.99,267.14 547.66,267.13 548.33,267.14 549.00,267.16 549.67,267.22 550.34,267.29 551.01,267.38 551.67,267.49 552.34,267.62 553.01,267.77 553.68,267.93 554.35,268.11 555.02,268.29 555.69,268.49 556.36,268.69 557.03,268.90 557.70,269.11 558.36,269.32 559.03,269.53 559.70,269.73 560.37,269.93 561.04,270.13 561.71,270.31 562.38,270.48 563.05,270.64 563.72,270.79 564.39,270.92 565.05,271.04 565.72,271.14 566.39,271.22 567.06,271.28 567.73,271.32 568.40,271.34 569.07,271.34 569.74,271.32 570.41,271.29 571.08,271.23 571.74,271.16 572.41,271.07 573.08,270.97 573.75,270.85 574.42,270.71 575.09,270.57 575.76,270.41 576.43,270.25 577.10,270.08 577.77,269.90 578.43,269.73 579.10,269.55 579.77,269.37 580.44,269.19 581.11,269.02 581.78,268.85 582.45,268.69 583.12,268.53 583.79,268.39 584.46,268.26 585.12,268.14 585.79,268.04 586.46,267.95 587.13,267.87 587.80,267.82 588.47,267.77 589.14,267.75 589.81,267.74 590.48,267.75 591.15,267.77 591.81,267.81 592.48,267.87 593.15,267.94 593.82,268.02 594.49,268.12 595.16,268.23 595.83,268.35 596.50,268.48 597.17,268.61 597.84,268.76 598.50,268.91 599.17,269.06 599.84,269.21 600.51,269.36 601.18,269.52 601.85,269.67 602.52,269.81 603.19,269.95 603.86,270.09 604.53,270.21 605.19,270.33 605.86,270.43 606.53,270.53 607.20,270.61 607.87,270.68 608.54,270.73 609.21,270.78 609.88,270.80 610.55,270.82 611.22,270.82 611.88,270.80 612.55,270.77 613.22,270.73 613.89,270.68 614.56,270.61 615.23,270.53 615.90,270.44 616.57,270.34 617.24,270.23 617.91,270.12 618.57,270.00 619.24,269.88 619.91,269.75 620.58,269.62 621.25,269.48 621.92,269.35 622.59,269.22 623.26,269.10 623.93,268.98 624.60,268.86 625.26,268.75 625.93,268.65 626.60,268.55 627.27,268.47 627.94,268.39 628.61,268.33 629.28,268.28 629.95,268.24 630.62,268.21 631.29,268.19 631.95,268.19 632.62,268.20 633.29,268.22 633.96,268.25 634.63,268.29 635.30,268.34 635.97,268.41 636.64,268.48 637.31,268.56 637.98,268.65 638.64,268.74 639.31,268.84 639.98,268.95 640.65,269.06 641.32,269.17 641.99,269.28 642.66,269.39 643.33,269.50 644.00,269.61 644.67,269.72 645.33,269.82 646.00,269.92 646.67,270.01 647.34,270.09 648.01,270.17 648.68,270.23 649.35,270.29 650.02,270.34 650.69,270.38 651.36,270.41 652.02,270.43 652.69,270.44 653.36,270.43 654.03,270.42 654.70,270.40 655.37,270.37 656.04,270.32 656.71,270.27 657.38,270.21 658.05,270.15 658.71,270.08 659.38,270.00 660.05,269.91 660.72,269.82 661.39,269.73 662.06,269.64 662.73,269.54 663.40,269.45 664.07,269.35 664.74,269.26 665.40,269.16 666.07,269.08 666.74,268.99 667.41,268.91 668.08,268.84 668.75,268.77 669.42,268.71 670.09,268.66 670.76,268.61 671.43,268.57 672.09,268.55 672.76,268.53 673.43,268.52 674.10,268.52 674.77,268.52 675.44,268.54 676.11,268.56 676.78,268.59 677.45,268.63 678.12,268.68 678.78,268.74 679.45,268.80 680.12,268.86 680.79,268.93 681.46,269.01 682.13,269.08 682.80,269.16 683.47,269.24 684.14,269.33 684.81,269.41 685.47,269.49 686.14,269.57 686.81,269.65 687.48,269.72 688.15,269.79 688.82,269.85 689.49,269.91 690.16,269.97 690.83,270.02 691.50,270.06 692.16,270.09 692.83,270.12 693.50,270.14 694.17,270.15 694.84,270.16 695.51,270.15 696.18,270.14 696.85,270.13 697.52,270.10 698.19,270.07 698.85,270.03 699.52,269.99 700.19,269.94 700.86,269.88 701.53,269.83 702.20,269.76" fill="none" stroke="#C88A40" stroke-width="1.3" stroke-linejoin="round"/><polyline points="33.20,301.83 33.87,295.39 34.54,289.07 35.21,282.95 35.88,277.07 36.55,271.50 37.21,266.29 37.88,261.48 38.55,257.13 39.22,253.26 39.89,249.91 40.56,247.12 41.23,244.90 41.90,243.27 42.57,242.23 43.24,241.81 43.90,241.98 44.57,242.75 45.24,244.10 45.91,246.02 46.58,248.47 47.25,251.42 47.92,254.85 48.59,258.72 49.26,262.97 49.93,267.57 50.59,272.47 51.26,277.61 51.93,282.94 52.60,288.41 53.27,293.95 53.94,299.52 54.61,305.06 55.28,310.51 55.95,315.81 56.62,320.93 57.28,325.80 57.95,330.39 58.62,334.65 59.29,338.54 59.96,342.02 60.63,345.07 61.30,347.65 61.97,349.76 62.64,351.36 63.31,352.46 63.97,353.04 64.64,353.10 65.31,352.65 65.98,351.71 66.65,350.27 67.32,348.36 67.99,346.01 68.66,343.24 69.33,340.09 69.99,336.59 70.66,332.77 71.33,328.69 72.00,324.38 72.67,319.88 73.34,315.26 74.01,310.54 74.68,305.78 75.35,301.03 76.02,296.34 76.68,291.75 77.35,287.30 78.02,283.05 78.69,279.02 79.36,275.26 80.03,271.80 80.70,268.68 81.37,265.92 82.04,263.54 82.71,261.57 83.37,260.02 84.04,258.90 84.71,258.22 85.38,257.98 86.05,258.18 86.72,258.82 87.39,259.87 88.06,261.34 88.73,263.19 89.40,265.41 90.06,267.97 90.73,270.84 91.40,274.00 92.07,277.40 92.74,281.01 93.41,284.79 94.08,288.70 94.75,292.70 95.42,296.76 96.09,300.83 96.75,304.86 97.42,308.83 98.09,312.68 98.76,316.39 99.43,319.92 100.10,323.23 100.77,326.30 101.44,329.09 102.11,331.58 102.78,333.75 103.44,335.58 104.11,337.06 104.78,338.17 105.45,338.91 106.12,339.27 106.79,339.25 107.46,338.86 108.13,338.11 108.80,337.00 109.47,335.55 110.13,333.78 110.80,331.71 111.47,329.36 112.14,326.76 112.81,323.94 113.48,320.93 114.15,317.76 114.82,314.45 115.49,311.06 116.16,307.61 116.82,304.13 117.49,300.67 118.16,297.25 118.83,293.91 119.50,290.69 120.17,287.60 120.84,284.69 121.51,281.98 122.18,279.50 122.85,277.26 123.51,275.29 124.18,273.60 124.85,272.21 125.52,271.13 126.19,270.37 126.86,269.92 127.53,269.80 128.20,270.00 128.87,270.52 129.54,271.34 130.20,272.46 130.87,273.86 131.54,275.53 132.21,277.44 132.88,279.57 133.55,281.91 134.22,284.42 134.89,287.08 135.56,289.86 136.23,292.73 136.89,295.66 137.56,298.63 138.23,301.59 138.90,304.54 139.57,307.42 140.24,310.22 140.91,312.91 141.58,315.46 142.25,317.85 142.92,320.06 143.58,322.06 144.25,323.84 144.92,325.39 145.59,326.68 146.26,327.72 146.93,328.48 147.60,328.97 148.27,329.19 148.94,329.13 149.61,328.80 150.27,328.21 150.94,327.36 151.61,326.26 152.28,324.93 152.95,323.38 153.62,321.63 154.29,319.71 154.96,317.62 155.63,315.40 156.30,313.06 156.96,310.64 157.63,308.15 158.30,305.62 158.97,303.09 159.64,300.56 160.31,298.07 160.98,295.64 161.65,293.30 162.32,291.07 162.99,288.97 163.66,287.02 164.32,285.23 164.99,283.63 165.66,282.22 166.33,281.02 167.00,280.05 167.67,279.30 168.34,278.78 169.01,278.49 169.68,278.45 170.35,278.63 171.01,279.05 171.68,279.69 172.35,280.54 173.02,281.59 173.69,282.84 174.36,284.26 175.03,285.85 175.70,287.58 176.37,289.43 177.04,291.39 177.70,293.43 178.37,295.54 179.04,297.69 179.71,299.85 180.38,302.02 181.05,304.16 181.72,306.26 182.39,308.29 183.06,310.24 183.73,312.09 184.39,313.81 185.06,315.40 185.73,316.84 186.40,318.11 187.07,319.21 187.74,320.12 188.41,320.85 189.08,321.37 189.75,321.70 190.42,321.82 191.08,321.75 191.75,321.47 192.42,321.01 193.09,320.35 193.76,319.52 194.43,318.52 195.10,317.37 195.77,316.07 196.44,314.64 197.11,313.10 197.77,311.46 198.44,309.74 199.11,307.96 199.78,306.14 200.45,304.29 201.12,302.44 201.79,300.59 202.46,298.78 203.13,297.02 203.80,295.32 204.46,293.71 205.13,292.19 205.80,290.78 206.47,289.50 207.14,288.35 207.81,287.35 208.48,286.50 209.15,285.82 209.82,285.30 210.49,284.95 211.15,284.77 211.82,284.76 212.49,284.93 213.16,285.26 213.83,285.75 214.50,286.40 215.17,287.19 215.84,288.13 216.51,289.19 217.18,290.36 217.84,291.64 218.51,293.01 219.18,294.45 219.85,295.95 220.52,297.50 221.19,299.07 221.86,300.65 222.53,302.23 223.20,303.79 223.87,305.32 224.53,306.80 225.20,308.21 225.87,309.54 226.54,310.78 227.21,311.93 227.88,312.96 228.55,313.87 229.22,314.65 229.89,315.29 230.56,315.79 231.22,316.15 231.89,316.37 232.56,316.43 233.23,316.35 233.90,316.13 234.57,315.76 235.24,315.27 235.91,314.64 236.58,313.89 237.25,313.02 237.91,312.06 238.58,311.00 239.25,309.86 239.92,308.66 240.59,307.39 241.26,306.09 241.93,304.75 242.60,303.40 243.27,302.04 243.94,300.70 244.60,299.38 245.27,298.10 245.94,296.87 246.61,295.71 247.28,294.61 247.95,293.60 248.62,292.67 249.29,291.85 249.96,291.14 250.63,290.54 251.29,290.06 251.96,289.70 252.63,289.47 253.30,289.36 253.97,289.37 254.64,289.52 255.31,289.78 255.98,290.16 256.65,290.65 257.32,291.25 257.98,291.94 258.65,292.73 259.32,293.61 259.99,294.55 260.66,295.56 261.33,296.62 262.00,297.72 262.67,298.86 263.34,300.01 264.01,301.17 264.67,302.32 265.34,303.45 266.01,304.56 266.68,305.63 267.35,306.66 268.02,307.62 268.69,308.52 269.36,309.34 270.03,310.07 270.70,310.72 271.36,311.28 272.03,311.73 272.70,312.08 273.37,312.33 274.04,312.46 274.71,312.49 275.38,312.42 276.05,312.24 276.72,311.95 277.39,311.57 278.05,311.10 278.72,310.54 279.39,309.89 280.06,309.18 280.73,308.39 281.40,307.55 282.07,306.66 282.74,305.73 283.41,304.78 284.08,303.80 284.74,302.81 285.41,301.82 286.08,300.84 286.75,299.88 287.42,298.95 288.09,298.06 288.76,297.22 289.43,296.43 290.10,295.70 290.77,295.04 291.43,294.45 292.10,293.94 292.77,293.52 293.44,293.18 294.11,292.94 294.78,292.78 295.45,292.72 296.12,292.74 296.79,292.86 297.46,293.07 298.12,293.36 298.79,293.73 299.46,294.18 300.13,294.70 300.80,295.29 301.47,295.94 302.14,296.64 302.81,297.38 303.48,298.16 304.15,298.97 304.81,299.80 305.48,300.64 306.15,301.49 306.82,302.33 307.49,303.15 308.16,303.96 308.83,304.74 309.50,305.48 310.17,306.17 310.84,306.82 311.50,307.41 312.17,307.94 312.84,308.40 313.51,308.79 314.18,309.11 314.85,309.35 315.52,309.52 316.19,309.61 316.86,309.61 317.53,309.55 318.19,309.40 318.86,309.18 319.53,308.89 320.20,308.53 320.87,308.11 321.54,307.64 322.21,307.10 322.88,306.52 323.55,305.90 324.22,305.25 324.88,304.57 325.55,303.86 326.22,303.15 326.89,302.42 327.56,301.70 328.23,300.99 328.90,300.29 329.57,299.62 330.24,298.97 330.91,298.36 331.57,297.79 332.24,297.27 332.91,296.79 333.58,296.37 334.25,296.01 334.92,295.71 335.59,295.48 336.26,295.31 336.93,295.21 337.60,295.17 338.26,295.20 338.93,295.30 339.60,295.46 340.27,295.68 340.94,295.97 341.61,296.30 342.28,296.69 342.95,297.13 343.62,297.61 344.29,298.12 344.95,298.67 345.62,299.25 346.29,299.84 346.96,300.45 347.63,301.07 348.30,301.68 348.97,302.30 349.64,302.90 350.31,303.48 350.98,304.05 351.64,304.58 352.31,305.08 352.98,305.55 353.65,305.97 354.32,306.35 354.99,306.68 355.66,306.96 356.33,307.18 357.00,307.35 357.67,307.46 358.33,307.51 359.00,307.51 359.67,307.45 360.34,307.34 361.01,307.17 361.68,306.95 362.35,306.68 363.02,306.36 363.69,306.01 364.36,305.61 365.02,305.18 365.69,304.73 366.36,304.24 367.03,303.74 367.70,303.23 368.37,302.70 369.04,302.17 369.71,301.65 370.38,301.13 371.05,300.62 371.71,300.13 372.38,299.67 373.05,299.22 373.72,298.81 374.39,298.44 375.06,298.10 375.73,297.80 376.40,297.54 377.07,297.33 377.74,297.17 378.40,297.05 379.07,296.99 379.74,296.97 380.41,297.00 381.08,297.08 381.75,297.20 382.42,297.37 383.09,297.59 383.76,297.84 384.43,298.13 385.09,298.45 385.76,298.81 386.43,299.19 387.10,299.59 387.77,300.02 388.44,300.45 389.11,300.90 389.78,301.35 390.45,301.80 391.12,302.24 391.78,302.68 392.45,303.11 393.12,303.52 393.79,303.90 394.46,304.27 395.13,304.60 395.80,304.90 396.47,305.17 397.14,305.41 397.81,305.61 398.47,305.76 399.14,305.88 399.81,305.95 400.48,305.98 401.15,305.98 401.82,305.92 402.49,305.83 403.16,305.70 403.83,305.54 404.50,305.34 405.16,305.10 405.83,304.83 406.50,304.54 407.17,304.22 407.84,303.89 408.51,303.53 409.18,303.16 409.85,302.79 410.52,302.40 411.19,302.02 411.85,301.63 412.52,301.26 413.19,300.89 413.86,300.53 414.53,300.19 415.20,299.87 415.87,299.58 416.54,299.31 417.21,299.06 417.88,298.85 418.54,298.67 419.21,298.52 419.88,298.41 420.55,298.33 421.22,298.29 421.89,298.28 422.56,298.31 423.23,298.37 423.90,298.47 424.57,298.60 425.23,298.76 425.90,298.95 426.57,299.16 427.24,299.41 427.91,299.67 428.58,299.95 429.25,300.25 429.92,300.56 430.59,300.88 431.26,301.20 431.92,301.53 432.59,301.86 433.26,302.19 433.93,302.51 434.60,302.81 435.27,303.11 435.94,303.39 436.61,303.65 437.28,303.89 437.95,304.11 438.61,304.30 439.28,304.47 439.95,304.61 440.62,304.72 441.29,304.80 441.96,304.85 442.63,304.87 443.30,304.85 443.97,304.81 444.64,304.74 445.30,304.64 445.97,304.51 446.64,304.36 447.31,304.19 447.98,303.99 448.65,303.77 449.32,303.54 449.99,303.29 450.66,303.03 451.33,302.76 451.99,302.48 452.66,302.20 453.33,301.92 454.00,301.64 454.67,301.36 455.34,301.10 456.01,300.84 456.68,300.59 457.35,300.36 458.02,300.15 458.68,299.96 459.35,299.78 460.02,299.63 460.69,299.50 461.36,299.40 462.03,299.32 462.70,299.27 463.37,299.24 464.04,299.24 464.71,299.26 465.37,299.31 466.04,299.39 466.71,299.49 467.38,299.61 468.05,299.75 468.72,299.91 469.39,300.09 470.06,300.28 470.73,300.49 471.40,300.71 472.06,300.94 472.73,301.17 473.40,301.41 474.07,301.65 474.74,301.89 475.41,302.13 476.08,302.36 476.75,302.59 477.42,302.80 478.09,303.00 478.75,303.19 479.42,303.36 480.09,303.52 480.76,303.66 481.43,303.78 482.10,303.87 482.77,303.95 483.44,304.01 484.11,304.04 484.78,304.05 485.44,304.03 486.11,304.00 486.78,303.95 487.45,303.87 488.12,303.77 488.79,303.66 489.46,303.53 490.13,303.38 490.80,303.22 491.47,303.05 492.13,302.86 492.80,302.67 493.47,302.47 494.14,302.27 494.81,302.07 495.48,301.86 496.15,301.66 496.82,301.46 497.49,301.26 498.16,301.08 498.82,300.90 499.49,300.73 500.16,300.58 500.83,300.44 501.50,300.31 502.17,300.21 502.84,300.12 503.51,300.04 504.18,299.99 504.85,299.95 505.51,299.94 506.18,299.94 506.85,299.96 507.52,300.00 508.19,300.06 508.86,300.13 509.53,300.22 510.20,300.33 510.87,300.45 511.54,300.58 512.20,300.73 512.87,300.88 513.54,301.04 514.21,301.21 514.88,301.38 515.55,301.55 516.22,301.73 516.89,301.91 517.56,302.08 518.23,302.25 518.89,302.41 519.56,302.56 520.23,302.71 520.90,302.85 521.57,302.97 522.24,303.08 522.91,303.18 523.58,303.27 524.25,303.33 524.92,303.39 525.58,303.42 526.25,303.44 526.92,303.45 527.59,303.44 528.26,303.41 528.93,303.37 529.60,303.31 530.27,303.24 530.94,303.15 531.61,303.05 532.27,302.94 532.94,302.83 533.61,302.70 534.28,302.56 534.95,302.42 535.62,302.28 536.29,302.13 536.96,301.98 537.63,301.83 538.29,301.68 538.96,301.53 539.63,301.39 540.30,301.26 540.97,301.13 541.64,301.01 542.31,300.90 542.98,300.80 543.65,300.71 544.32,300.63 544.98,300.57 545.65,300.52 546.32,300.48 546.99,300.46 547.66,300.45 548.33,300.45 549.00,300.47 549.67,300.50 550.34,300.54 551.01,300.60 551.67,300.67 552.34,300.75 553.01,300.84 553.68,300.94 554.35,301.04 555.02,301.16 555.69,301.27 556.36,301.40 557.03,301.52 557.70,301.65 558.36,301.78 559.03,301.91 559.70,302.03 560.37,302.15 561.04,302.27 561.71,302.38 562.38,302.49 563.05,302.59 563.72,302.68 564.39,302.76 565.05,302.83 565.72,302.89 566.39,302.94 567.06,302.97 567.73,303.00 568.40,303.01 569.07,303.01 569.74,303.00 570.41,302.98 571.08,302.95 571.74,302.90 572.41,302.85 573.08,302.78 573.75,302.71 574.42,302.63 575.09,302.54 575.76,302.45 576.43,302.35 577.10,302.24 577.77,302.14 578.43,302.03 579.10,301.92 579.77,301.81 580.44,301.70 581.11,301.60 581.78,301.49 582.45,301.40 583.12,301.30 583.79,301.22 584.46,301.14 585.12,301.06 585.79,301.00 586.46,300.95 587.13,300.90 587.80,300.87 588.47,300.84 589.14,300.82 589.81,300.82 590.48,300.82 591.15,300.84 591.81,300.86 592.48,300.90 593.15,300.94 593.82,300.99 594.49,301.05 595.16,301.12 595.83,301.19 596.50,301.27 597.17,301.35 597.84,301.44 598.50,301.53 599.17,301.62 599.84,301.71 600.51,301.81 601.18,301.90 601.85,301.99 602.52,302.08 603.19,302.17 603.86,302.25 604.53,302.32 605.19,302.40 605.86,302.46 606.53,302.52 607.20,302.57 607.87,302.61 608.54,302.64 609.21,302.67 609.88,302.68 610.55,302.69 611.22,302.69 611.88,302.68 612.55,302.67 613.22,302.64 613.89,302.61 614.56,302.57 615.23,302.52 615.90,302.46 616.57,302.40 617.24,302.34 617.91,302.27 618.57,302.20 619.24,302.12 619.91,302.04 620.58,301.96 621.25,301.88 621.92,301.80 622.59,301.72 623.26,301.65 623.93,301.57 624.60,301.50 625.26,301.43 625.93,301.37 626.60,301.31 627.27,301.26 627.94,301.22 628.61,301.18 629.28,301.15 629.95,301.12 630.62,301.10 631.29,301.09 631.95,301.09 632.62,301.10 633.29,301.11 633.96,301.13 634.63,301.15 635.30,301.19 635.97,301.22 636.64,301.27 637.31,301.32 637.98,301.37 638.64,301.43 639.31,301.49 639.98,301.56 640.65,301.62 641.32,301.69 641.99,301.76 642.66,301.83 643.33,301.89 644.00,301.96 644.67,302.02 645.33,302.09 646.00,302.15 646.67,302.20 647.34,302.25 648.01,302.30 648.68,302.34 649.35,302.37 650.02,302.40 650.69,302.43 651.36,302.44 652.02,302.46 652.69,302.46 653.36,302.46 654.03,302.45 654.70,302.44 655.37,302.42 656.04,302.39 656.71,302.36 657.38,302.33 658.05,302.29 658.71,302.24 659.38,302.19 660.05,302.14 660.72,302.09 661.39,302.03 662.06,301.97 662.73,301.92 663.40,301.86 664.07,301.80 664.74,301.74 665.40,301.69 666.07,301.63 666.74,301.58 667.41,301.53 668.08,301.49 668.75,301.45 669.42,301.41 670.09,301.38 670.76,301.35 671.43,301.33 672.09,301.31 672.76,301.30 673.43,301.29 674.10,301.29 674.77,301.30 675.44,301.30 676.11,301.32 676.78,301.34 677.45,301.36 678.12,301.39 678.78,301.43 679.45,301.46 680.12,301.50 680.79,301.54 681.46,301.59 682.13,301.64 682.80,301.69 683.47,301.74 684.14,301.79 684.81,301.84 685.47,301.88 686.14,301.93 686.81,301.98 687.48,302.02 688.15,302.07 688.82,302.11 689.49,302.14 690.16,302.18 690.83,302.21 691.50,302.23 692.16,302.25 692.83,302.27 693.50,302.28 694.17,302.29 694.84,302.29 695.51,302.29 696.18,302.28 696.85,302.27 697.52,302.26 698.19,302.24 698.85,302.21 699.52,302.19 700.19,302.16 700.86,302.12 701.53,302.09 702.20,302.05" fill="none" stroke="#FF4A10" stroke-width="1.8" stroke-linejoin="round"/><polyline points="33.20,399.12 33.87,396.97 34.54,394.87 35.21,392.83 35.88,390.87 36.55,389.01 37.21,387.27 37.88,385.67 38.55,384.22 39.22,382.93 39.89,381.81 40.56,380.88 41.23,380.14 41.90,379.60 42.57,379.25 43.24,379.11 43.90,379.17 44.57,379.43 45.24,379.88 45.91,380.52 46.58,381.33 47.25,382.32 47.92,383.46 48.59,384.75 49.26,386.17 49.93,387.70 50.59,389.33 51.26,391.05 51.93,392.82 52.60,394.65 53.27,396.49 53.94,398.35 54.61,400.20 55.28,402.01 55.95,403.78 56.62,405.49 57.28,407.11 57.95,408.64 58.62,410.06 59.29,411.36 59.96,412.52 60.63,413.53 61.30,414.39 61.97,415.10 62.64,415.63 63.31,416.00 63.97,416.19 64.64,416.21 65.31,416.06 65.98,415.75 66.65,415.27 67.32,414.63 67.99,413.85 68.66,412.92 69.33,411.87 69.99,410.71 70.66,409.43 71.33,408.07 72.00,406.64 72.67,405.14 73.34,403.60 74.01,402.02 74.68,400.44 75.35,398.85 76.02,397.29 76.68,395.76 77.35,394.28 78.02,392.86 78.69,391.52 79.36,390.26 80.03,389.11 80.70,388.07 81.37,387.15 82.04,386.36 82.71,385.70 83.37,385.18 84.04,384.81 84.71,384.58 85.38,384.50 86.05,384.57 86.72,384.78 87.39,385.13 88.06,385.62 88.73,386.24 89.40,386.98 90.06,387.83 90.73,388.79 91.40,389.84 92.07,390.98 92.74,392.18 93.41,393.44 94.08,394.74 94.75,396.08 95.42,397.43 96.09,398.79 96.75,400.13 97.42,401.45 98.09,402.74 98.76,403.97 99.43,405.15 100.10,406.25 100.77,407.28 101.44,408.21 102.11,409.04 102.78,409.76 103.44,410.37 104.11,410.86 104.78,411.23 105.45,411.48 106.12,411.60 106.79,411.59 107.46,411.46 108.13,411.21 108.80,410.84 109.47,410.36 110.13,409.77 110.80,409.08 111.47,408.30 112.14,407.43 112.81,406.49 113.48,405.49 114.15,404.43 114.82,403.33 115.49,402.20 116.16,401.05 116.82,399.89 117.49,398.73 118.16,397.59 118.83,396.48 119.50,395.41 120.17,394.38 120.84,393.41 121.51,392.50 122.18,391.68 122.85,390.93 123.51,390.27 124.18,389.71 124.85,389.25 125.52,388.89 126.19,388.63 126.86,388.48 127.53,388.44 128.20,388.51 128.87,388.68 129.54,388.96 130.20,389.33 130.87,389.80 131.54,390.35 132.21,390.99 132.88,391.70 133.55,392.48 134.22,393.32 134.89,394.20 135.56,395.13 136.23,396.09 136.89,397.06 137.56,398.05 138.23,399.04 138.90,400.02 139.57,400.98 140.24,401.92 140.91,402.81 141.58,403.66 142.25,404.46 142.92,405.20 143.58,405.86 144.25,406.46 144.92,406.97 145.59,407.40 146.26,407.75 146.93,408.00 147.60,408.17 148.27,408.24 148.94,408.22 149.61,408.11 150.27,407.91 150.94,407.63 151.61,407.26 152.28,406.82 152.95,406.30 153.62,405.72 154.29,405.08 154.96,404.38 155.63,403.64 156.30,402.86 156.96,402.06 157.63,401.23 158.30,400.38 158.97,399.54 159.64,398.70 160.31,397.87 160.98,397.06 161.65,396.28 162.32,395.53 162.99,394.83 163.66,394.18 164.32,393.59 164.99,393.05 165.66,392.58 166.33,392.18 167.00,391.86 167.67,391.61 168.34,391.44 169.01,391.34 169.68,391.33 170.35,391.39 171.01,391.53 171.68,391.74 172.35,392.02 173.02,392.37 173.69,392.79 174.36,393.26 175.03,393.79 175.70,394.37 176.37,394.99 177.04,395.64 177.70,396.32 178.37,397.02 179.04,397.74 179.71,398.46 180.38,399.18 181.05,399.90 181.72,400.60 182.39,401.27 183.06,401.92 183.73,402.54 184.39,403.11 185.06,403.64 185.73,404.12 186.40,404.55 187.07,404.91 187.74,405.22 188.41,405.46 189.08,405.63 189.75,405.74 190.42,405.78 191.08,405.76 191.75,405.67 192.42,405.51 193.09,405.29 193.76,405.02 194.43,404.68 195.10,404.30 195.77,403.87 196.44,403.39 197.11,402.88 197.77,402.33 198.44,401.76 199.11,401.16 199.78,400.56 200.45,399.94 201.12,399.32 201.79,398.71 202.46,398.10 203.13,397.52 203.80,396.95 204.46,396.41 205.13,395.91 205.80,395.44 206.47,395.01 207.14,394.63 207.81,394.29 208.48,394.01 209.15,393.78 209.82,393.61 210.49,393.49 211.15,393.43 211.82,393.43 212.49,393.49 213.16,393.60 213.83,393.76 214.50,393.98 215.17,394.24 215.84,394.55 216.51,394.91 217.18,395.30 217.84,395.72 218.51,396.18 219.18,396.66 219.85,397.16 220.52,397.68 221.19,398.20 221.86,398.73 222.53,399.25 223.20,399.77 223.87,400.28 224.53,400.78 225.20,401.25 225.87,401.69 226.54,402.10 227.21,402.49 227.88,402.83 228.55,403.13 229.22,403.39 229.89,403.61 230.56,403.77 231.22,403.89 231.89,403.97 232.56,403.99 233.23,403.96 233.90,403.89 234.57,403.76 235.24,403.60 235.91,403.39 236.58,403.14 237.25,402.85 237.91,402.53 238.58,402.18 239.25,401.80 239.92,401.40 240.59,400.97 241.26,400.54 241.93,400.09 242.60,399.64 243.27,399.19 243.94,398.74 244.60,398.30 245.27,397.88 245.94,397.47 246.61,397.08 247.28,396.71 247.95,396.38 248.62,396.07 249.29,395.79 249.96,395.56 250.63,395.36 251.29,395.20 251.96,395.08 252.63,395.00 253.30,394.96 253.97,394.97 254.64,395.02 255.31,395.10 255.98,395.23 256.65,395.39 257.32,395.59 257.98,395.82 258.65,396.09 259.32,396.38 259.99,396.69 260.66,397.03 261.33,397.38 262.00,397.75 262.67,398.13 263.34,398.51 264.01,398.90 264.67,399.28 265.34,399.66 266.01,400.03 266.68,400.39 267.35,400.73 268.02,401.05 268.69,401.35 269.36,401.62 270.03,401.87 270.70,402.08 271.36,402.27 272.03,402.42 272.70,402.54 273.37,402.62 274.04,402.66 274.71,402.67 275.38,402.65 276.05,402.59 276.72,402.49 277.39,402.37 278.05,402.21 278.72,402.02 279.39,401.81 280.06,401.57 280.73,401.31 281.40,401.03 282.07,400.73 282.74,400.42 283.41,400.10 284.08,399.78 284.74,399.45 285.41,399.12 286.08,398.79 286.75,398.47 287.42,398.16 288.09,397.86 288.76,397.58 289.43,397.32 290.10,397.08 290.77,396.86 291.43,396.66 292.10,396.49 292.77,396.35 293.44,396.24 294.11,396.16 294.78,396.10 295.45,396.08 296.12,396.09 296.79,396.13 297.46,396.20 298.12,396.30 298.79,396.42 299.46,396.57 300.13,396.74 300.80,396.94 301.47,397.16 302.14,397.39 302.81,397.64 303.48,397.90 304.15,398.17 304.81,398.44 305.48,398.72 306.15,399.01 306.82,399.29 307.49,399.56 308.16,399.83 308.83,400.09 309.50,400.34 310.17,400.57 310.84,400.78 311.50,400.98 312.17,401.16 312.84,401.31 313.51,401.44 314.18,401.55 314.85,401.63 315.52,401.68 316.19,401.71 316.86,401.71 317.53,401.69 318.19,401.64 318.86,401.57 319.53,401.47 320.20,401.35 320.87,401.21 321.54,401.06 322.21,400.88 322.88,400.68 323.55,400.48 324.22,400.26 324.88,400.03 325.55,399.80 326.22,399.56 326.89,399.32 327.56,399.08 328.23,398.84 328.90,398.61 329.57,398.38 330.24,398.17 330.91,397.96 331.57,397.77 332.24,397.60 332.91,397.44 333.58,397.30 334.25,397.18 334.92,397.08 335.59,397.00 336.26,396.95 336.93,396.91 337.60,396.90 338.26,396.91 338.93,396.94 339.60,397.00 340.27,397.07 340.94,397.17 341.61,397.28 342.28,397.41 342.95,397.55 343.62,397.71 344.29,397.88 344.95,398.07 345.62,398.26 346.29,398.46 346.96,398.66 347.63,398.87 348.30,399.07 348.97,399.28 349.64,399.48 350.31,399.67 350.98,399.86 351.64,400.04 352.31,400.20 352.98,400.36 353.65,400.50 354.32,400.63 354.99,400.74 355.66,400.83 356.33,400.90 357.00,400.96 357.67,401.00 358.33,401.01 359.00,401.01 359.67,400.99 360.34,400.96 361.01,400.90 361.68,400.83 362.35,400.74 363.02,400.63 363.69,400.51 364.36,400.38 365.02,400.24 365.69,400.09 366.36,399.92 367.03,399.76 367.70,399.59 368.37,399.41 369.04,399.23 369.71,399.06 370.38,398.89 371.05,398.72 371.71,398.55 372.38,398.40 373.05,398.25 373.72,398.11 374.39,397.99 375.06,397.88 375.73,397.78 376.40,397.69 377.07,397.62 377.74,397.57 378.40,397.53 379.07,397.51 379.74,397.50 380.41,397.51 381.08,397.54 381.75,397.58 382.42,397.63 383.09,397.71 383.76,397.79 384.43,397.89 385.09,397.99 385.76,398.11 386.43,398.24 387.10,398.37 387.77,398.52 388.44,398.66 389.11,398.81 389.78,398.96 390.45,399.11 391.12,399.26 391.78,399.40 392.45,399.55 393.12,399.68 393.79,399.81 394.46,399.93 395.13,400.04 395.80,400.14 396.47,400.23 397.14,400.31 397.81,400.38 398.47,400.43 399.14,400.47 399.81,400.49 400.48,400.50 401.15,400.50 401.82,400.48 402.49,400.45 403.16,400.41 403.83,400.36 404.50,400.29 405.16,400.21 405.83,400.12 406.50,400.02 407.17,399.92 407.84,399.81 408.51,399.69 409.18,399.56 409.85,399.44 410.52,399.31 411.19,399.18 411.85,399.05 412.52,398.93 413.19,398.81 413.86,398.69 414.53,398.57 415.20,398.47 415.87,398.37 416.54,398.28 417.21,398.20 417.88,398.13 418.54,398.07 419.21,398.02 419.88,397.98 420.55,397.95 421.22,397.94 421.89,397.94 422.56,397.95 423.23,397.97 423.90,398.00 424.57,398.04 425.23,398.10 425.90,398.16 426.57,398.23 427.24,398.31 427.91,398.40 428.58,398.49 429.25,398.59 429.92,398.70 430.59,398.80 431.26,398.91 431.92,399.02 432.59,399.13 433.26,399.24 433.93,399.35 434.60,399.45 435.27,399.55 435.94,399.64 436.61,399.73 437.28,399.81 437.95,399.88 438.61,399.94 439.28,400.00 439.95,400.05 440.62,400.08 441.29,400.11 441.96,400.13 442.63,400.13 443.30,400.13 443.97,400.11 444.64,400.09 445.30,400.06 445.97,400.01 446.64,399.96 447.31,399.91 447.98,399.84 448.65,399.77 449.32,399.69 449.99,399.61 450.66,399.52 451.33,399.43 451.99,399.34 452.66,399.24 453.33,399.15 454.00,399.06 454.67,398.96 455.34,398.88 456.01,398.79 456.68,398.71 457.35,398.63 458.02,398.56 458.68,398.50 459.35,398.44 460.02,398.39 460.69,398.34 461.36,398.31 462.03,398.28 462.70,398.27 463.37,398.26 464.04,398.26 464.71,398.26 465.37,398.28 466.04,398.31 466.71,398.34 467.38,398.38 468.05,398.43 468.72,398.48 469.39,398.54 470.06,398.60 470.73,398.67 471.40,398.75 472.06,398.82 472.73,398.90 473.40,398.98 474.07,399.06 474.74,399.14 475.41,399.22 476.08,399.30 476.75,399.37 477.42,399.44 478.09,399.51 478.75,399.57 479.42,399.63 480.09,399.68 480.76,399.73 481.43,399.77 482.10,399.80 482.77,399.83 483.44,399.85 484.11,399.86 484.78,399.86 485.44,399.85 486.11,399.84 486.78,399.83 487.45,399.80 488.12,399.77 488.79,399.73 489.46,399.69 490.13,399.64 490.80,399.58 491.47,399.53 492.13,399.46 492.80,399.40 493.47,399.33 494.14,399.27 494.81,399.20 495.48,399.13 496.15,399.06 496.82,399.00 497.49,398.93 498.16,398.87 498.82,398.81 499.49,398.75 500.16,398.70 500.83,398.66 501.50,398.61 502.17,398.58 502.84,398.55 503.51,398.52 504.18,398.51 504.85,398.49 505.51,398.49 506.18,398.49 506.85,398.50 507.52,398.51 508.19,398.53 508.86,398.55 509.53,398.58 510.20,398.62 510.87,398.66 511.54,398.70 512.20,398.75 512.87,398.80 513.54,398.86 514.21,398.91 514.88,398.97 515.55,399.03 516.22,399.09 516.89,399.15 517.56,399.20 518.23,399.26 518.89,399.31 519.56,399.36 520.23,399.41 520.90,399.46 521.57,399.50 522.24,399.54 522.91,399.57 523.58,399.60 524.25,399.62 524.92,399.64 525.58,399.65 526.25,399.66 526.92,399.66 527.59,399.66 528.26,399.65 528.93,399.63 529.60,399.61 530.27,399.59 530.94,399.56 531.61,399.53 532.27,399.49 532.94,399.45 533.61,399.41 534.28,399.36 534.95,399.32 535.62,399.27 536.29,399.22 536.96,399.17 537.63,399.12 538.29,399.07 538.96,399.02 539.63,398.97 540.30,398.93 540.97,398.89 541.64,398.85 542.31,398.81 542.98,398.78 543.65,398.75 544.32,398.72 544.98,398.70 545.65,398.68 546.32,398.67 546.99,398.66 547.66,398.66 548.33,398.66 549.00,398.67 549.67,398.68 550.34,398.69 551.01,398.71 551.67,398.73 552.34,398.76 553.01,398.79 553.68,398.82 554.35,398.86 555.02,398.90 555.69,398.93 556.36,398.98 557.03,399.02 557.70,399.06 558.36,399.10 559.03,399.15 559.70,399.19 560.37,399.23 561.04,399.27 561.71,399.30 562.38,399.34 563.05,399.37 563.72,399.40 564.39,399.43 565.05,399.45 565.72,399.47 566.39,399.49 567.06,399.50 567.73,399.51 568.40,399.51 569.07,399.51 569.74,399.51 570.41,399.50 571.08,399.49 571.74,399.48 572.41,399.46 573.08,399.44 573.75,399.41 574.42,399.39 575.09,399.36 575.76,399.33 576.43,399.29 577.10,399.26 577.77,399.22 578.43,399.19 579.10,399.15 579.77,399.11 580.44,399.08 581.11,399.04 581.78,399.01 582.45,398.98 583.12,398.94 583.79,398.92 584.46,398.89 585.12,398.86 585.79,398.84 586.46,398.83 587.13,398.81 587.80,398.80 588.47,398.79 589.14,398.78 589.81,398.78 590.48,398.78 591.15,398.79 591.81,398.80 592.48,398.81 593.15,398.82 593.82,398.84 594.49,398.86 595.16,398.88 595.83,398.91 596.50,398.93 597.17,398.96 597.84,398.99 598.50,399.02 599.17,399.05 599.84,399.08 600.51,399.11 601.18,399.14 601.85,399.17 602.52,399.20 603.19,399.23 603.86,399.26 604.53,399.28 605.19,399.31 605.86,399.33 606.53,399.35 607.20,399.37 607.87,399.38 608.54,399.39 609.21,399.40 609.88,399.40 610.55,399.41 611.22,399.41 611.88,399.40 612.55,399.40 613.22,399.39 613.89,399.38 614.56,399.37 615.23,399.35 615.90,399.33 616.57,399.31 617.24,399.29 617.91,399.27 618.57,399.24 619.24,399.22 619.91,399.19 620.58,399.16 621.25,399.14 621.92,399.11 622.59,399.08 623.26,399.06 623.93,399.03 624.60,399.01 625.26,398.99 625.93,398.97 626.60,398.95 627.27,398.93 627.94,398.92 628.61,398.90 629.28,398.89 629.95,398.88 630.62,398.88 631.29,398.87 631.95,398.87 632.62,398.88 633.29,398.88 633.96,398.89 634.63,398.89 635.30,398.91 635.97,398.92 636.64,398.93 637.31,398.95 637.98,398.97 638.64,398.99 639.31,399.01 639.98,399.03 640.65,399.05 641.32,399.07 641.99,399.10 642.66,399.12 643.33,399.14 644.00,399.16 644.67,399.18 645.33,399.21 646.00,399.23 646.67,399.24 647.34,399.26 648.01,399.28 648.68,399.29 649.35,399.30 650.02,399.31 650.69,399.32 651.36,399.32 652.02,399.33 652.69,399.33 653.36,399.33 654.03,399.33 654.70,399.32 655.37,399.32 656.04,399.31 656.71,399.30 657.38,399.29 658.05,399.27 658.71,399.26 659.38,399.24 660.05,399.22 660.72,399.21 661.39,399.19 662.06,399.17 662.73,399.15 663.40,399.13 664.07,399.11 664.74,399.09 665.40,399.07 666.07,399.05 666.74,399.04 667.41,399.02 668.08,399.01 668.75,398.99 669.42,398.98 670.09,398.97 670.76,398.96 671.43,398.95 672.09,398.95 672.76,398.94 673.43,398.94 674.10,398.94 674.77,398.94 675.44,398.94 676.11,398.95 676.78,398.96 677.45,398.96 678.12,398.97 678.78,398.99 679.45,399.00 680.12,399.01 680.79,399.02 681.46,399.04 682.13,399.06 682.80,399.07 683.47,399.09 684.14,399.11 684.81,399.12 685.47,399.14 686.14,399.15 686.81,399.17 687.48,399.18 688.15,399.20 688.82,399.21 689.49,399.22 690.16,399.24 690.83,399.25 691.50,399.25 692.16,399.26 692.83,399.27 693.50,399.27 694.17,399.27 694.84,399.27 695.51,399.27 696.18,399.27 696.85,399.27 697.52,399.26 698.19,399.26 698.85,399.25 699.52,399.24 700.19,399.23 700.86,399.22 701.53,399.21 702.20,399.19" fill="none" stroke="#8C8C8C" stroke-width="1.3" stroke-linejoin="round"/><polyline points="33.20,452.67 33.87,448.37 34.54,444.17 35.21,440.08 35.88,436.16 36.55,432.45 37.21,428.98 37.88,425.77 38.55,422.87 39.22,420.29 39.89,418.06 40.56,416.20 41.23,414.72 41.90,413.63 42.57,412.94 43.24,412.65 43.90,412.77 44.57,413.28 45.24,414.19 45.91,415.46 46.58,417.09 47.25,419.07 47.92,421.35 48.59,423.93 49.26,426.77 49.93,429.83 50.59,433.10 51.26,436.52 51.93,440.08 52.60,443.72 53.27,447.42 53.94,451.13 54.61,454.82 55.28,458.45 55.95,461.99 56.62,465.40 57.28,468.65 57.95,471.71 58.62,474.55 59.29,477.14 59.96,479.46 60.63,481.49 61.30,483.22 61.97,484.62 62.64,485.69 63.31,486.42 63.97,486.81 64.64,486.85 65.31,486.55 65.98,485.92 66.65,484.96 67.32,483.69 67.99,482.12 68.66,480.28 69.33,478.18 69.99,475.84 70.66,473.30 71.33,470.58 72.00,467.70 72.67,464.71 73.34,461.62 74.01,458.48 74.68,455.31 75.35,452.14 76.02,449.01 76.68,445.95 77.35,442.99 78.02,440.15 78.69,437.46 79.36,434.96 80.03,432.65 80.70,430.57 81.37,428.73 82.04,427.14 82.71,425.83 83.37,424.79 84.04,424.05 84.71,423.60 85.38,423.44 86.05,423.57 86.72,423.99 87.39,424.70 88.06,425.67 88.73,426.91 89.40,428.39 90.06,430.10 90.73,432.01 91.40,434.12 92.07,436.38 92.74,438.79 93.41,441.31 94.08,443.92 94.75,446.59 95.42,449.29 96.09,452.00 96.75,454.69 97.42,457.33 98.09,459.91 98.76,462.38 99.43,464.73 100.10,466.94 100.77,468.98 101.44,470.84 102.11,472.50 102.78,473.95 103.44,475.17 104.11,476.16 104.78,476.90 105.45,477.39 106.12,477.63 106.79,477.62 107.46,477.36 108.13,476.85 108.80,476.12 109.47,475.15 110.13,473.97 110.80,472.59 111.47,471.03 112.14,469.29 112.81,467.41 113.48,465.40 114.15,463.29 114.82,461.09 115.49,458.82 116.16,456.52 116.82,454.21 117.49,451.90 118.16,449.62 118.83,447.39 119.50,445.24 120.17,443.19 120.84,441.25 121.51,439.44 122.18,437.78 122.85,436.29 123.51,434.97 124.18,433.85 124.85,432.92 125.52,432.20 126.19,431.69 126.86,431.40 127.53,431.32 128.20,431.45 128.87,431.80 129.54,432.35 130.20,433.09 130.87,434.02 131.54,435.13 132.21,436.41 132.88,437.83 133.55,439.39 134.22,441.06 134.89,442.83 135.56,444.69 136.23,446.60 136.89,448.56 137.56,450.53 138.23,452.51 138.90,454.47 139.57,456.40 140.24,458.26 140.91,460.06 141.58,461.76 142.25,463.35 142.92,464.82 143.58,466.16 144.25,467.35 144.92,468.38 145.59,469.24 146.26,469.93 146.93,470.44 147.60,470.77 148.27,470.91 148.94,470.87 149.61,470.65 150.27,470.26 150.94,469.69 151.61,468.96 152.28,468.07 152.95,467.04 153.62,465.87 154.29,464.59 154.96,463.20 155.63,461.72 156.30,460.16 156.96,458.54 157.63,456.88 158.30,455.20 158.97,453.51 159.64,451.82 160.31,450.16 160.98,448.55 161.65,446.99 162.32,445.50 162.99,444.10 163.66,442.79 164.32,441.60 164.99,440.53 165.66,439.60 166.33,438.80 167.00,438.15 167.67,437.65 168.34,437.30 169.01,437.11 169.68,437.08 170.35,437.20 171.01,437.48 171.68,437.91 172.35,438.47 173.02,439.18 173.69,440.01 174.36,440.96 175.03,442.02 175.70,443.17 176.37,444.40 177.04,445.71 177.70,447.07 178.37,448.48 179.04,449.91 179.71,451.35 180.38,452.80 181.05,454.23 181.72,455.62 182.39,456.98 183.06,458.28 183.73,459.51 184.39,460.66 185.06,461.72 185.73,462.68 186.40,463.52 187.07,464.26 187.74,464.87 188.41,465.35 189.08,465.70 189.75,465.91 190.42,466.00 191.08,465.95 191.75,465.76 192.42,465.45 193.09,465.02 193.76,464.46 194.43,463.80 195.10,463.03 195.77,462.16 196.44,461.21 197.11,460.18 197.77,459.09 198.44,457.94 199.11,456.76 199.78,455.54 200.45,454.31 201.12,453.07 201.79,451.85 202.46,450.64 203.13,449.46 203.80,448.33 204.46,447.25 205.13,446.24 205.80,445.30 206.47,444.45 207.14,443.68 207.81,443.02 208.48,442.45 209.15,441.99 209.82,441.65 210.49,441.41 211.15,441.30 211.82,441.29 212.49,441.40 213.16,441.62 213.83,441.95 214.50,442.38 215.17,442.91 215.84,443.53 216.51,444.24 217.18,445.03 217.84,445.88 218.51,446.79 219.18,447.75 219.85,448.75 220.52,449.78 221.19,450.83 221.86,451.89 222.53,452.94 223.20,453.98 223.87,455.00 224.53,455.98 225.20,456.92 225.87,457.81 226.54,458.64 227.21,459.40 227.88,460.09 228.55,460.69 229.22,461.21 229.89,461.64 230.56,461.98 231.22,462.22 231.89,462.36 232.56,462.41 233.23,462.35 233.90,462.20 234.57,461.96 235.24,461.63 235.91,461.21 236.58,460.71 237.25,460.13 237.91,459.49 238.58,458.78 239.25,458.03 239.92,457.22 240.59,456.38 241.26,455.51 241.93,454.62 242.60,453.72 243.27,452.81 243.94,451.92 244.60,451.04 245.27,450.19 245.94,449.37 246.61,448.59 247.28,447.86 247.95,447.18 248.62,446.57 249.29,446.02 249.96,445.54 250.63,445.14 251.29,444.82 251.96,444.58 252.63,444.43 253.30,444.36 253.97,444.37 254.64,444.46 255.31,444.63 255.98,444.89 256.65,445.22 257.32,445.61 257.98,446.08 258.65,446.61 259.32,447.19 259.99,447.82 260.66,448.49 261.33,449.20 262.00,449.93 262.67,450.69 263.34,451.46 264.01,452.23 264.67,453.00 265.34,453.75 266.01,454.49 266.68,455.21 267.35,455.89 268.02,456.53 268.69,457.13 269.36,457.67 270.03,458.17 270.70,458.60 271.36,458.97 272.03,459.27 272.70,459.50 273.37,459.67 274.04,459.76 274.71,459.78 275.38,459.73 276.05,459.61 276.72,459.42 277.39,459.17 278.05,458.85 278.72,458.47 279.39,458.05 280.06,457.57 280.73,457.05 281.40,456.48 282.07,455.89 282.74,455.27 283.41,454.63 284.08,453.98 284.74,453.32 285.41,452.66 286.08,452.01 286.75,451.37 287.42,450.75 288.09,450.16 288.76,449.60 289.43,449.07 290.10,448.58 290.77,448.14 291.43,447.75 292.10,447.41 292.77,447.13 293.44,446.91 294.11,446.74 294.78,446.64 295.45,446.59 296.12,446.61 296.79,446.69 297.46,446.83 298.12,447.02 298.79,447.27 299.46,447.57 300.13,447.92 300.80,448.31 301.47,448.74 302.14,449.21 302.81,449.70 303.48,450.22 304.15,450.76 304.81,451.32 305.48,451.88 306.15,452.44 306.82,453.00 307.49,453.55 308.16,454.09 308.83,454.61 309.50,455.10 310.17,455.57 310.84,456.00 311.50,456.39 312.17,456.74 312.84,457.05 313.51,457.31 314.18,457.52 314.85,457.69 315.52,457.80 316.19,457.85 316.86,457.86 317.53,457.81 318.19,457.72 318.86,457.57 319.53,457.38 320.20,457.14 320.87,456.86 321.54,456.54 322.21,456.19 322.88,455.80 323.55,455.39 324.22,454.95 324.88,454.49 325.55,454.02 326.22,453.55 326.89,453.07 327.56,452.59 328.23,452.11 328.90,451.65 329.57,451.20 330.24,450.76 330.91,450.36 331.57,449.98 332.24,449.63 332.91,449.31 333.58,449.03 334.25,448.79 334.92,448.59 335.59,448.44 336.26,448.32 336.93,448.26 337.60,448.23 338.26,448.25 338.93,448.32 339.60,448.42 340.27,448.57 340.94,448.76 341.61,448.99 342.28,449.25 342.95,449.54 343.62,449.86 344.29,450.20 344.95,450.57 345.62,450.95 346.29,451.34 346.96,451.75 347.63,452.16 348.30,452.57 348.97,452.98 349.64,453.38 350.31,453.77 350.98,454.15 351.64,454.50 352.31,454.84 352.98,455.15 353.65,455.43 354.32,455.68 354.99,455.90 355.66,456.09 356.33,456.24 357.00,456.35 357.67,456.42 358.33,456.46 359.00,456.46 359.67,456.42 360.34,456.34 361.01,456.23 361.68,456.08 362.35,455.90 363.02,455.69 363.69,455.45 364.36,455.19 365.02,454.91 365.69,454.60 366.36,454.28 367.03,453.94 367.70,453.60 368.37,453.25 369.04,452.90 369.71,452.55 370.38,452.20 371.05,451.87 371.71,451.54 372.38,451.23 373.05,450.93 373.72,450.66 374.39,450.41 375.06,450.18 375.73,449.98 376.40,449.81 377.07,449.67 377.74,449.56 378.40,449.48 379.07,449.44 379.74,449.43 380.41,449.45 381.08,449.50 381.75,449.58 382.42,449.70 383.09,449.84 383.76,450.01 384.43,450.20 385.09,450.42 385.76,450.66 386.43,450.91 387.10,451.18 387.77,451.46 388.44,451.75 389.11,452.05 389.78,452.35 390.45,452.65 391.12,452.95 391.78,453.24 392.45,453.52 393.12,453.79 393.79,454.05 394.46,454.29 395.13,454.52 395.80,454.72 396.47,454.90 397.14,455.06 397.81,455.19 398.47,455.29 399.14,455.37 399.81,455.42 400.48,455.44 401.15,455.43 401.82,455.40 402.49,455.34 403.16,455.25 403.83,455.14 404.50,455.01 405.16,454.85 405.83,454.67 406.50,454.48 407.17,454.27 407.84,454.04 408.51,453.80 409.18,453.56 409.85,453.31 410.52,453.05 411.19,452.79 411.85,452.54 412.52,452.29 413.19,452.04 413.86,451.80 414.53,451.58 415.20,451.37 415.87,451.17 416.54,450.99 417.21,450.83 417.88,450.68 418.54,450.56 419.21,450.46 419.88,450.39 420.55,450.34 421.22,450.31 421.89,450.30 422.56,450.32 423.23,450.36 423.90,450.43 424.57,450.52 425.23,450.62 425.90,450.75 426.57,450.89 427.24,451.05 427.91,451.23 428.58,451.42 429.25,451.61 429.92,451.82 430.59,452.04 431.26,452.25 431.92,452.47 432.59,452.69 433.26,452.91 433.93,453.12 434.60,453.33 435.27,453.52 435.94,453.71 436.61,453.88 437.28,454.05 437.95,454.19 438.61,454.32 439.28,454.43 439.95,454.52 440.62,454.60 441.29,454.65 441.96,454.68 442.63,454.69 443.30,454.69 443.97,454.66 444.64,454.61 445.30,454.54 445.97,454.46 446.64,454.36 447.31,454.24 447.98,454.11 448.65,453.97 449.32,453.81 449.99,453.64 450.66,453.47 451.33,453.29 451.99,453.10 452.66,452.92 453.33,452.73 454.00,452.54 454.67,452.36 455.34,452.18 456.01,452.01 456.68,451.85 457.35,451.69 458.02,451.55 458.68,451.42 459.35,451.30 460.02,451.20 460.69,451.12 461.36,451.05 462.03,451.00 462.70,450.96 463.37,450.94 464.04,450.94 464.71,450.96 465.37,450.99 466.04,451.04 466.71,451.11 467.38,451.19 468.05,451.28 468.72,451.39 469.39,451.51 470.06,451.64 470.73,451.78 471.40,451.92 472.06,452.08 472.73,452.23 473.40,452.39 474.07,452.55 474.74,452.71 475.41,452.87 476.08,453.02 476.75,453.17 477.42,453.32 478.09,453.45 478.75,453.58 479.42,453.69 480.09,453.80 480.76,453.89 481.43,453.97 482.10,454.03 482.77,454.08 483.44,454.12 484.11,454.14 484.78,454.15 485.44,454.14 486.11,454.12 486.78,454.08 487.45,454.03 488.12,453.97 488.79,453.89 489.46,453.80 490.13,453.70 490.80,453.60 491.47,453.48 492.13,453.36 492.80,453.23 493.47,453.10 494.14,452.96 494.81,452.83 495.48,452.69 496.15,452.55 496.82,452.42 497.49,452.29 498.16,452.17 498.82,452.05 499.49,451.94 500.16,451.84 500.83,451.74 501.50,451.66 502.17,451.59 502.84,451.53 503.51,451.48 504.18,451.44 504.85,451.42 505.51,451.41 506.18,451.41 506.85,451.42 507.52,451.45 508.19,451.49 508.86,451.54 509.53,451.60 510.20,451.67 510.87,451.75 511.54,451.84 512.20,451.93 512.87,452.04 513.54,452.14 514.21,452.26 514.88,452.37 515.55,452.49 516.22,452.60 516.89,452.72 517.56,452.84 518.23,452.95 518.89,453.06 519.56,453.16 520.23,453.26 520.90,453.35 521.57,453.43 522.24,453.51 522.91,453.57 523.58,453.63 524.25,453.67 524.92,453.71 525.58,453.73 526.25,453.75 526.92,453.75 527.59,453.74 528.26,453.72 528.93,453.69 529.60,453.66 530.27,453.61 530.94,453.55 531.61,453.49 532.27,453.41 532.94,453.33 533.61,453.25 534.28,453.16 534.95,453.06 535.62,452.97 536.29,452.87 536.96,452.77 537.63,452.67 538.29,452.57 538.96,452.47 539.63,452.38 540.30,452.29 540.97,452.20 541.64,452.12 542.31,452.05 542.98,451.98 543.65,451.92 544.32,451.87 544.98,451.83 545.65,451.79 546.32,451.77 546.99,451.75 547.66,451.75 548.33,451.75 549.00,451.76 549.67,451.78 550.34,451.81 551.01,451.85 551.67,451.90 552.34,451.95 553.01,452.01 553.68,452.07 554.35,452.14 555.02,452.22 555.69,452.30 556.36,452.38 557.03,452.47 557.70,452.55 558.36,452.64 559.03,452.72 559.70,452.80 560.37,452.89 561.04,452.96 561.71,453.04 562.38,453.11 563.05,453.18 563.72,453.24 564.39,453.29 565.05,453.34 565.72,453.37 566.39,453.41 567.06,453.43 567.73,453.45 568.40,453.46 569.07,453.46 569.74,453.45 570.41,453.44 571.08,453.41 571.74,453.38 572.41,453.35 573.08,453.31 573.75,453.26 574.42,453.20 575.09,453.14 575.76,453.08 576.43,453.02 577.10,452.95 577.77,452.88 578.43,452.80 579.10,452.73 579.77,452.66 580.44,452.58 581.11,452.51 581.78,452.45 582.45,452.38 583.12,452.32 583.79,452.26 584.46,452.21 585.12,452.16 585.79,452.12 586.46,452.08 587.13,452.05 587.80,452.03 588.47,452.01 589.14,452.00 589.81,452.00 590.48,452.00 591.15,452.01 591.81,452.03 592.48,452.05 593.15,452.08 593.82,452.11 594.49,452.15 595.16,452.19 595.83,452.24 596.50,452.30 597.17,452.35 597.84,452.41 598.50,452.47 599.17,452.53 599.84,452.59 600.51,452.66 601.18,452.72 601.85,452.78 602.52,452.84 603.19,452.89 603.86,452.95 604.53,453.00 605.19,453.05 605.86,453.09 606.53,453.13 607.20,453.16 607.87,453.19 608.54,453.21 609.21,453.23 609.88,453.24 610.55,453.25 611.22,453.25 611.88,453.24 612.55,453.23 613.22,453.21 613.89,453.19 614.56,453.16 615.23,453.13 615.90,453.09 616.57,453.05 617.24,453.01 617.91,452.96 618.57,452.91 619.24,452.86 619.91,452.81 620.58,452.76 621.25,452.70 621.92,452.65 622.59,452.60 623.26,452.55 623.93,452.50 624.60,452.45 625.26,452.41 625.93,452.36 626.60,452.33 627.27,452.29 627.94,452.26 628.61,452.24 629.28,452.21 629.95,452.20 630.62,452.19 631.29,452.18 631.95,452.18 632.62,452.18 633.29,452.19 633.96,452.20 634.63,452.22 635.30,452.24 635.97,452.27 636.64,452.30 637.31,452.33 637.98,452.36 638.64,452.40 639.31,452.44 639.98,452.49 640.65,452.53 641.32,452.58 641.99,452.62 642.66,452.67 643.33,452.71 644.00,452.76 644.67,452.80 645.33,452.84 646.00,452.88 646.67,452.92 647.34,452.95 648.01,452.98 648.68,453.01 649.35,453.03 650.02,453.05 650.69,453.07 651.36,453.08 652.02,453.09 652.69,453.09 653.36,453.09 654.03,453.08 654.70,453.08 655.37,453.06 656.04,453.05 656.71,453.02 657.38,453.00 658.05,452.97 658.71,452.94 659.38,452.91 660.05,452.88 660.72,452.84 661.39,452.80 662.06,452.77 662.73,452.73 663.40,452.69 664.07,452.65 664.74,452.61 665.40,452.57 666.07,452.54 666.74,452.50 667.41,452.47 668.08,452.44 668.75,452.41 669.42,452.39 670.09,452.37 670.76,452.35 671.43,452.33 672.09,452.32 672.76,452.32 673.43,452.31 674.10,452.31 674.77,452.31 675.44,452.32 676.11,452.33 676.78,452.34 677.45,452.36 678.12,452.38 678.78,452.40 679.45,452.42 680.12,452.45 680.79,452.48 681.46,452.51 682.13,452.54 682.80,452.57 683.47,452.61 684.14,452.64 684.81,452.67 685.47,452.71 686.14,452.74 686.81,452.77 687.48,452.80 688.15,452.83 688.82,452.85 689.49,452.88 690.16,452.90 690.83,452.92 691.50,452.94 692.16,452.95 692.83,452.96 693.50,452.97 694.17,452.98 694.84,452.98 695.51,452.98 696.18,452.97 696.85,452.96 697.52,452.95 698.19,452.94 698.85,452.93 699.52,452.91 700.19,452.89 700.86,452.87 701.53,452.84 702.20,452.82" fill="none" stroke="#D09048" stroke-width="2.0" stroke-linejoin="round"/><polyline points="33.20,452.67 33.87,448.37 34.54,444.17 35.21,440.08 35.88,436.16 36.55,432.45 37.21,428.98 37.88,425.77 38.55,422.87 39.22,420.29 39.89,418.06 40.56,416.20 41.23,414.72 41.90,413.63 42.57,412.94 43.24,412.65 43.90,412.77 44.57,413.28 45.24,414.19 45.91,415.46 46.58,417.09 47.25,419.07 47.92,421.35 48.59,423.93 49.26,426.77 49.93,429.83 50.59,433.10 51.26,436.52 51.93,440.08 52.60,443.72 53.27,447.42 53.94,451.13 54.61,454.82 55.28,458.45 55.95,461.99 56.62,465.40 57.28,468.65 57.95,471.71 58.62,474.55 59.29,477.14 59.96,479.46 60.63,481.49 61.30,483.22 61.97,484.62 62.64,485.69 63.31,486.42 63.97,486.81 64.64,486.85 65.31,486.55 65.98,485.92 66.65,484.96 67.32,483.69 67.99,482.12 68.66,480.28 69.33,478.18 69.99,475.84 70.66,473.30 71.33,470.58 72.00,467.70 72.67,464.71 73.34,461.62 74.01,458.48 74.68,455.31 75.35,452.14 76.02,449.01 76.68,445.95 77.35,442.99 78.02,440.15 78.69,437.46 79.36,434.96 80.03,432.65 80.70,430.57 81.37,428.73 82.04,427.14 82.71,425.83 83.37,424.79 84.04,424.05 84.71,423.60 85.38,423.44 86.05,423.57 86.72,423.99 87.39,424.70 88.06,425.67 88.73,426.91 89.40,428.39 90.06,430.10 90.73,432.01 91.40,434.12 92.07,436.38 92.74,438.79 93.41,441.31 94.08,443.92 94.75,446.59 95.42,449.29 96.09,452.00 96.75,454.69 97.42,457.33 98.09,459.91 98.76,462.38 99.43,464.73 100.10,466.94 100.77,468.98 101.44,470.84 102.11,472.50 102.78,473.95 103.44,475.17 104.11,476.16 104.78,476.90 105.45,477.39 106.12,477.63 106.79,477.62 107.46,477.36 108.13,476.85 108.80,476.12 109.47,475.15 110.13,473.97 110.80,472.59 111.47,471.03 112.14,469.29 112.81,467.41 113.48,465.40 114.15,463.29 114.82,461.09 115.49,458.82 116.16,456.52 116.82,454.21 117.49,451.90 118.16,449.62 118.83,447.39 119.50,445.24 120.17,443.19 120.84,441.25 121.51,439.44 122.18,437.78 122.85,436.29 123.51,434.97 124.18,433.85 124.85,432.92 125.52,432.20 126.19,431.69 126.86,431.40 127.53,431.32 128.20,431.45 128.87,431.80 129.54,432.35 130.20,433.09 130.87,434.02 131.54,435.13 132.21,436.41 132.88,437.83 133.55,439.39 134.22,441.06 134.89,442.83 135.56,444.69 136.23,446.60 136.89,448.56 137.56,450.53 138.23,452.51 138.90,454.47 139.57,456.40 140.24,458.26 140.91,460.06 141.58,461.76 142.25,463.35 142.92,464.82 143.58,466.16 144.25,467.35 144.92,468.38 145.59,469.24 146.26,469.93 146.93,470.44 147.60,470.77 148.27,470.91 148.94,470.87 149.61,470.65 150.27,470.26 150.94,469.69 151.61,468.96 152.28,468.07 152.95,467.04 153.62,465.87 154.29,464.59 154.96,463.20 155.63,461.72 156.30,460.16 156.96,458.54 157.63,456.88 158.30,455.20 158.97,453.51 159.64,451.82 160.31,450.16 160.98,448.55 161.65,446.99 162.32,445.50 162.99,444.10 163.66,442.79 164.32,441.60 164.99,440.53 165.66,439.60 166.33,438.80 167.00,438.15 167.67,437.65 168.34,437.30 169.01,437.11 169.68,437.08 170.35,437.20 171.01,437.48 171.68,437.91 172.35,438.47 173.02,439.18 173.69,440.01 174.36,440.96 175.03,442.02 175.70,443.17 176.37,444.40 177.04,445.71 177.70,447.07 178.37,448.48 179.04,449.91 179.71,451.35 180.38,452.80 181.05,454.23 181.72,455.62 182.39,456.98 183.06,458.28 183.73,459.51 184.39,460.66 185.06,461.72 185.73,462.68 186.40,463.52 187.07,464.26 187.74,464.87 188.41,465.35 189.08,465.70 189.75,465.91 190.42,466.00 191.08,465.95 191.75,465.76 192.42,465.45 193.09,465.02 193.76,464.46 194.43,463.80 195.10,463.03 195.77,462.16 196.44,461.21 197.11,460.18 197.77,459.09 198.44,457.94 199.11,456.76 199.78,455.54 200.45,454.31 201.12,453.07 201.79,451.85 202.46,450.64 203.13,449.46 203.80,448.33 204.46,447.25 205.13,446.24 205.80,445.30 206.47,444.45 207.14,443.68 207.81,443.02 208.48,442.45 209.15,441.99 209.82,441.65 210.49,441.41 211.15,441.30 211.82,441.29 212.49,441.40 213.16,441.62 213.83,441.95 214.50,442.38 215.17,442.91 215.84,443.53 216.51,444.24 217.18,445.03 217.84,445.88 218.51,446.79 219.18,447.75 219.85,448.75 220.52,449.78 221.19,450.83 221.86,451.89 222.53,452.94 223.20,453.98 223.87,455.00 224.53,455.98 225.20,456.92 225.87,457.81 226.54,458.64 227.21,459.40 227.88,460.09 228.55,460.69 229.22,461.21 229.89,461.64 230.56,461.98 231.22,462.22 231.89,462.36 232.56,462.41 233.23,462.35 233.90,462.20 234.57,461.96 235.24,461.63 235.91,461.21 236.58,460.71 237.25,460.13 237.91,459.49 238.58,458.78 239.25,458.03 239.92,457.22 240.59,456.38 241.26,455.51 241.93,454.62 242.60,453.72 243.27,452.81 243.94,451.92 244.60,451.04 245.27,450.19 245.94,449.37 246.61,448.59 247.28,447.86 247.95,447.18 248.62,446.57 249.29,446.02 249.96,445.54 250.63,445.14 251.29,444.82 251.96,444.58 252.63,444.43 253.30,444.36 253.97,444.37 254.64,444.46 255.31,444.63 255.98,444.89 256.65,445.22 257.32,445.61 257.98,446.08 258.65,446.61 259.32,447.19 259.99,447.82 260.66,448.49 261.33,449.20 262.00,449.93 262.67,450.69 263.34,451.46 264.01,452.23 264.67,453.00 265.34,453.75 266.01,454.49 266.68,455.21 267.35,455.89 268.02,456.53 268.69,457.13 269.36,457.67 270.03,458.17 270.70,458.60 271.36,458.97 272.03,459.27 272.70,459.50 273.37,459.67 274.04,459.76 274.71,459.78 275.38,459.73 276.05,459.61 276.72,459.42 277.39,459.17 278.05,458.85 278.72,458.47 279.39,458.05 280.06,457.57 280.73,457.05 281.40,456.48 282.07,455.89 282.74,455.27 283.41,454.63 284.08,453.98 284.74,453.32 285.41,452.66 286.08,452.01 286.75,451.37 287.42,450.75 288.09,450.16 288.76,449.60 289.43,449.07 290.10,448.58 290.77,448.14 291.43,447.75 292.10,447.41 292.77,447.13 293.44,446.91 294.11,446.74 294.78,446.64 295.45,446.59 296.12,446.61 296.79,446.69 297.46,446.83 298.12,447.02 298.79,447.27 299.46,447.57 300.13,447.92 300.80,448.31 301.47,448.74 302.14,449.21 302.81,449.70 303.48,450.22 304.15,450.76 304.81,451.32 305.48,451.88 306.15,452.44 306.82,453.00 307.49,453.55 308.16,454.09 308.83,454.61 309.50,455.10 310.17,455.57 310.84,456.00 311.50,456.39 312.17,456.74 312.84,457.05 313.51,457.31 314.18,457.52 314.85,457.69 315.52,457.80 316.19,457.85 316.86,457.86 317.53,457.81 318.19,457.72 318.86,457.57 319.53,457.38 320.20,457.14 320.87,456.86 321.54,456.54 322.21,456.19 322.88,455.80 323.55,455.39 324.22,454.95 324.88,454.49 325.55,454.02 326.22,453.55 326.89,453.07 327.56,452.59 328.23,452.11 328.90,451.65 329.57,451.20 330.24,450.76 330.91,450.36 331.57,449.98 332.24,449.63 332.91,449.31 333.58,449.03 334.25,448.79 334.92,448.59 335.59,448.44 336.26,448.32 336.93,448.26 337.60,448.23 338.26,448.25 338.93,448.32 339.60,448.42 340.27,448.57 340.94,448.76 341.61,448.99 342.28,449.25 342.95,449.54 343.62,449.86 344.29,450.20 344.95,450.57 345.62,450.95 346.29,451.34 346.96,451.75 347.63,452.16 348.30,452.57 348.97,452.98 349.64,453.38 350.31,453.77 350.98,454.15 351.64,454.50 352.31,454.84 352.98,455.15 353.65,455.43 354.32,455.68 354.99,455.90 355.66,456.09 356.33,456.24 357.00,456.35 357.67,456.42 358.33,456.46 359.00,456.46 359.67,456.42 360.34,456.34 361.01,456.23 361.68,456.08 362.35,455.90 363.02,455.69 363.69,455.45 364.36,455.19 365.02,454.91 365.69,454.60 366.36,454.28 367.03,453.94 367.70,453.60 368.37,453.25 369.04,452.90 369.71,452.55 370.38,452.20 371.05,451.87 371.71,451.54 372.38,451.23 373.05,450.93 373.72,450.66 374.39,450.41 375.06,450.18 375.73,449.98 376.40,449.81 377.07,449.67 377.74,449.56 378.40,449.48 379.07,449.44 379.74,449.43 380.41,449.45 381.08,449.50 381.75,449.58 382.42,449.70 383.09,449.84 383.76,450.01 384.43,450.20 385.09,450.42 385.76,450.66 386.43,450.91 387.10,451.18 387.77,451.46 388.44,451.75 389.11,452.05 389.78,452.35 390.45,452.65 391.12,452.95 391.78,453.24 392.45,453.52 393.12,453.79 393.79,454.05 394.46,454.29 395.13,454.52 395.80,454.72 396.47,454.90 397.14,455.06 397.81,455.19 398.47,455.29 399.14,455.37 399.81,455.42 400.48,455.44 401.15,455.43 401.82,455.40 402.49,455.34 403.16,455.25 403.83,455.14 404.50,455.01 405.16,454.85 405.83,454.67 406.50,454.48 407.17,454.27 407.84,454.04 408.51,453.80 409.18,453.56 409.85,453.31 410.52,453.05 411.19,452.79 411.85,452.54 412.52,452.29 413.19,452.04 413.86,451.80 414.53,451.58 415.20,451.37 415.87,451.17 416.54,450.99 417.21,450.83 417.88,450.68 418.54,450.56 419.21,450.46 419.88,450.39 420.55,450.34 421.22,450.31 421.89,450.30 422.56,450.32 423.23,450.36 423.90,450.43 424.57,450.52 425.23,450.62 425.90,450.75 426.57,450.89 427.24,451.05 427.91,451.23 428.58,451.42 429.25,451.61 429.92,451.82 430.59,452.04 431.26,452.25 431.92,452.47 432.59,452.69 433.26,452.91 433.93,453.12 434.60,453.33 435.27,453.52 435.94,453.71 436.61,453.88 437.28,454.05 437.95,454.19 438.61,454.32 439.28,454.43 439.95,454.52 440.62,454.60 441.29,454.65 441.96,454.68 442.63,454.69 443.30,454.69 443.97,454.66 444.64,454.61 445.30,454.54 445.97,454.46 446.64,454.36 447.31,454.24 447.98,454.11 448.65,453.97 449.32,453.81 449.99,453.64 450.66,453.47 451.33,453.29 451.99,453.10 452.66,452.92 453.33,452.73 454.00,452.54 454.67,452.36 455.34,452.18 456.01,452.01 456.68,451.85 457.35,451.69 458.02,451.55 458.68,451.42 459.35,451.30 460.02,451.20 460.69,451.12 461.36,451.05 462.03,451.00 462.70,450.96 463.37,450.94 464.04,450.94 464.71,450.96 465.37,450.99 466.04,451.04 466.71,451.11 467.38,451.19 468.05,451.28 468.72,451.39 469.39,451.51 470.06,451.64 470.73,451.78 471.40,451.92 472.06,452.08 472.73,452.23 473.40,452.39 474.07,452.55 474.74,452.71 475.41,452.87 476.08,453.02 476.75,453.17 477.42,453.32 478.09,453.45 478.75,453.58 479.42,453.69 480.09,453.80 480.76,453.89 481.43,453.97 482.10,454.03 482.77,454.08 483.44,454.12 484.11,454.14 484.78,454.15 485.44,454.14 486.11,454.12 486.78,454.08 487.45,454.03 488.12,453.97 488.79,453.89 489.46,453.80 490.13,453.70 490.80,453.60 491.47,453.48 492.13,453.36 492.80,453.23 493.47,453.10 494.14,452.96 494.81,452.83 495.48,452.69 496.15,452.55 496.82,452.42 497.49,452.29 498.16,452.17 498.82,452.05 499.49,451.94 500.16,451.84 500.83,451.74 501.50,451.66 502.17,451.59 502.84,451.53 503.51,451.48 504.18,451.44 504.85,451.42 505.51,451.41 506.18,451.41 506.85,451.42 507.52,451.45 508.19,451.49 508.86,451.54 509.53,451.60 510.20,451.67 510.87,451.75 511.54,451.84 512.20,451.93 512.87,452.04 513.54,452.14 514.21,452.26 514.88,452.37 515.55,452.49 516.22,452.60 516.89,452.72 517.56,452.84 518.23,452.95 518.89,453.06 519.56,453.16 520.23,453.26 520.90,453.35 521.57,453.43 522.24,453.51 522.91,453.57 523.58,453.63 524.25,453.67 524.92,453.71 525.58,453.73 526.25,453.75 526.92,453.75 527.59,453.74 528.26,453.72 528.93,453.69 529.60,453.66 530.27,453.61 530.94,453.55 531.61,453.49 532.27,453.41 532.94,453.33 533.61,453.25 534.28,453.16 534.95,453.06 535.62,452.97 536.29,452.87 536.96,452.77 537.63,452.67 538.29,452.57 538.96,452.47 539.63,452.38 540.30,452.29 540.97,452.20 541.64,452.12 542.31,452.05 542.98,451.98 543.65,451.92 544.32,451.87 544.98,451.83 545.65,451.79 546.32,451.77 546.99,451.75 547.66,451.75 548.33,451.75 549.00,451.76 549.67,451.78 550.34,451.81 551.01,451.85 551.67,451.90 552.34,451.95 553.01,452.01 553.68,452.07 554.35,452.14 555.02,452.22 555.69,452.30 556.36,452.38 557.03,452.47 557.70,452.55 558.36,452.64 559.03,452.72 559.70,452.80 560.37,452.89 561.04,452.96 561.71,453.04 562.38,453.11 563.05,453.18 563.72,453.24 564.39,453.29 565.05,453.34 565.72,453.37 566.39,453.41 567.06,453.43 567.73,453.45 568.40,453.46 569.07,453.46 569.74,453.45 570.41,453.44 571.08,453.41 571.74,453.38 572.41,453.35 573.08,453.31 573.75,453.26 574.42,453.20 575.09,453.14 575.76,453.08 576.43,453.02 577.10,452.95 577.77,452.88 578.43,452.80 579.10,452.73 579.77,452.66 580.44,452.58 581.11,452.51 581.78,452.45 582.45,452.38 583.12,452.32 583.79,452.26 584.46,452.21 585.12,452.16 585.79,452.12 586.46,452.08 587.13,452.05 587.80,452.03 588.47,452.01 589.14,452.00 589.81,452.00 590.48,452.00 591.15,452.01 591.81,452.03 592.48,452.05 593.15,452.08 593.82,452.11 594.49,452.15 595.16,452.19 595.83,452.24 596.50,452.30 597.17,452.35 597.84,452.41 598.50,452.47 599.17,452.53 599.84,452.59 600.51,452.66 601.18,452.72 601.85,452.78 602.52,452.84 603.19,452.89 603.86,452.95 604.53,453.00 605.19,453.05 605.86,453.09 606.53,453.13 607.20,453.16 607.87,453.19 608.54,453.21 609.21,453.23 609.88,453.24 610.55,453.25 611.22,453.25 611.88,453.24 612.55,453.23 613.22,453.21 613.89,453.19 614.56,453.16 615.23,453.13 615.90,453.09 616.57,453.05 617.24,453.01 617.91,452.96 618.57,452.91 619.24,452.86 619.91,452.81 620.58,452.76 621.25,452.70 621.92,452.65 622.59,452.60 623.26,452.55 623.93,452.50 624.60,452.45 625.26,452.41 625.93,452.36 626.60,452.33 627.27,452.29 627.94,452.26 628.61,452.24 629.28,452.21 629.95,452.20 630.62,452.19 631.29,452.18 631.95,452.18 632.62,452.18 633.29,452.19 633.96,452.20 634.63,452.22 635.30,452.24 635.97,452.27 636.64,452.30 637.31,452.33 637.98,452.36 638.64,452.40 639.31,452.44 639.98,452.49 640.65,452.53 641.32,452.58 641.99,452.62 642.66,452.67 643.33,452.71 644.00,452.76 644.67,452.80 645.33,452.84 646.00,452.88 646.67,452.92 647.34,452.95 648.01,452.98 648.68,453.01 649.35,453.03 650.02,453.05 650.69,453.07 651.36,453.08 652.02,453.09 652.69,453.09 653.36,453.09 654.03,453.08 654.70,453.08 655.37,453.06 656.04,453.05 656.71,453.02 657.38,453.00 658.05,452.97 658.71,452.94 659.38,452.91 660.05,452.88 660.72,452.84 661.39,452.80 662.06,452.77 662.73,452.73 663.40,452.69 664.07,452.65 664.74,452.61 665.40,452.57 666.07,452.54 666.74,452.50 667.41,452.47 668.08,452.44 668.75,452.41 669.42,452.39 670.09,452.37 670.76,452.35 671.43,452.33 672.09,452.32 672.76,452.32 673.43,452.31 674.10,452.31 674.77,452.31 675.44,452.32 676.11,452.33 676.78,452.34 677.45,452.36 678.12,452.38 678.78,452.40 679.45,452.42 680.12,452.45 680.79,452.48 681.46,452.51 682.13,452.54 682.80,452.57 683.47,452.61 684.14,452.64 684.81,452.67 685.47,452.71 686.14,452.74 686.81,452.77 687.48,452.80 688.15,452.83 688.82,452.85 689.49,452.88 690.16,452.90 690.83,452.92 691.50,452.94 692.16,452.95 692.83,452.96 693.50,452.97 694.17,452.98 694.84,452.98 695.51,452.98 696.18,452.97 696.85,452.96 697.52,452.95 698.19,452.94 698.85,452.93 699.52,452.91 700.19,452.89 700.86,452.87 701.53,452.84 702.20,452.82" fill="none" stroke="#484C40" stroke-width="1.0" stroke-linejoin="round"/></g><text x="33.2" y="507.9" font-size="10.4" fill="#202020" font-weight="400" text-anchor="middle" textLength="5.1" lengthAdjust="spacingAndGlyphs" stroke="#202020" stroke-width="0.15" >0</text><text x="100.10000000000001" y="507.9" font-size="10.4" fill="#202020" font-weight="400" text-anchor="middle" textLength="10.2" lengthAdjust="spacingAndGlyphs" stroke="#202020" stroke-width="0.15" >10</text><text x="167.0" y="507.9" font-size="10.4" fill="#202020" font-weight="400" text-anchor="middle" textLength="10.2" lengthAdjust="spacingAndGlyphs" stroke="#202020" stroke-width="0.15" >20</text><text x="233.90000000000003" y="507.9" font-size="10.4" fill="#202020" font-weight="400" text-anchor="middle" textLength="10.2" lengthAdjust="spacingAndGlyphs" stroke="#202020" stroke-width="0.15" >30</text><text x="300.8" y="507.9" font-size="10.4" fill="#202020" font-weight="400" text-anchor="middle" textLength="10.2" lengthAdjust="spacingAndGlyphs" stroke="#202020" stroke-width="0.15" >40</text><text x="367.7" y="507.9" font-size="10.4" fill="#202020" font-weight="400" text-anchor="middle" textLength="10.2" lengthAdjust="spacingAndGlyphs" stroke="#202020" stroke-width="0.15" >50</text><text x="434.6" y="507.9" font-size="10.4" fill="#202020" font-weight="400" text-anchor="middle" textLength="10.2" lengthAdjust="spacingAndGlyphs" stroke="#202020" stroke-width="0.15" >60</text><text x="501.5" y="507.9" font-size="10.4" fill="#202020" font-weight="400" text-anchor="middle" textLength="10.2" lengthAdjust="spacingAndGlyphs" stroke="#202020" stroke-width="0.15" >70</text><text x="568.4000000000001" y="507.9" font-size="10.4" fill="#202020" font-weight="400" text-anchor="middle" textLength="10.2" lengthAdjust="spacingAndGlyphs" stroke="#202020" stroke-width="0.15" >80</text><text x="635.3000000000001" y="507.9" font-size="10.4" fill="#202020" font-weight="400" text-anchor="middle" textLength="10.2" lengthAdjust="spacingAndGlyphs" stroke="#202020" stroke-width="0.15" >90</text><text x="702.2" y="507.9" font-size="10.4" fill="#202020" font-weight="400" text-anchor="middle" textLength="15.299999999999999" lengthAdjust="spacingAndGlyphs" stroke="#202020" stroke-width="0.15" >100</text><text transform="translate(15.4,485.6) rotate(-90)" x="0" y="0" font-size="10.4" fill="#202020" stroke="#202020" stroke-width="0.15" text-anchor="middle" textLength="13.799999999999999" lengthAdjust="spacingAndGlyphs">-20</text><text transform="translate(15.4,431.5) rotate(-90)" x="0" y="0" font-size="10.4" fill="#202020" stroke="#202020" stroke-width="0.15" text-anchor="middle" textLength="13.799999999999999" lengthAdjust="spacingAndGlyphs">-15</text><text transform="translate(15.4,377.5) rotate(-90)" x="0" y="0" font-size="10.4" fill="#202020" stroke="#202020" stroke-width="0.15" text-anchor="middle" textLength="13.799999999999999" lengthAdjust="spacingAndGlyphs">-10</text><text transform="translate(15.4,323.4) rotate(-90)" x="0" y="0" font-size="10.4" fill="#202020" stroke="#202020" stroke-width="0.15" text-anchor="middle" textLength="8.7" lengthAdjust="spacingAndGlyphs">-5</text><text transform="translate(15.4,269.4) rotate(-90)" x="0" y="0" font-size="10.4" fill="#202020" stroke="#202020" stroke-width="0.15" text-anchor="middle" textLength="5.1" lengthAdjust="spacingAndGlyphs">0</text><text transform="translate(15.4,215.3) rotate(-90)" x="0" y="0" font-size="10.4" fill="#202020" stroke="#202020" stroke-width="0.15" text-anchor="middle" textLength="5.1" lengthAdjust="spacingAndGlyphs">5</text><text transform="translate(15.4,161.3) rotate(-90)" x="0" y="0" font-size="10.4" fill="#202020" stroke="#202020" stroke-width="0.15" text-anchor="middle" textLength="10.2" lengthAdjust="spacingAndGlyphs">10</text><text transform="translate(15.4,107.2) rotate(-90)" x="0" y="0" font-size="10.4" fill="#202020" stroke="#202020" stroke-width="0.15" text-anchor="middle" textLength="10.2" lengthAdjust="spacingAndGlyphs">15</text><line x1="3" y1="513.5" x2="723" y2="513.5" stroke="#B4B0A0" stroke-width="1" /><line x1="3" y1="514.5" x2="723" y2="514.5" stroke="#F4F2E8" stroke-width="1" /><rect x="3" y="515" width="720" height="12" fill="#ECE9D8" stroke="none" stroke-width="1" rx="0" /><text x="6" y="524" font-size="8.3" fill="#202020" font-weight="400" textLength="108" lengthAdjust="spacingAndGlyphs" stroke="#202020" stroke-width="0.2" >X= 56.733251;&#160; Y= 19.087170</text><line x1="151.9" y1="516" x2="151.9" y2="527" stroke="#C8C4B4" stroke-width="1" /><line x1="162.2" y1="516" x2="162.2" y2="527" stroke="#C8C4B4" stroke-width="1" /><line x1="183.5" y1="516" x2="183.5" y2="527" stroke="#C8C4B4" stroke-width="1" /><line x1="272.7" y1="516" x2="272.7" y2="527" stroke="#C8C4B4" stroke-width="1" /><line x1="363.3" y1="516" x2="363.3" y2="527" stroke="#C8C4B4" stroke-width="1" /><line x1="660.4" y1="516" x2="660.4" y2="527" stroke="#C8C4B4" stroke-width="1" /><circle cx="157.6" cy="519.5" r="1.2" fill="#2050D0"/><rect x="367.8" y="517.5" width="9" height="7.5" fill="#C88C48" stroke="#B0A890" stroke-width="0.6" rx="1.5" /><rect x="381.2" y="517.5" width="9" height="7.5" fill="#FF18FF" stroke="#B0A890" stroke-width="0.6" rx="1.5" /><rect x="394.6" y="517.5" width="9" height="7.5" fill="#A8C0EC" stroke="#B0A890" stroke-width="0.6" rx="1.5" /><rect x="408.0" y="517.5" width="9" height="7.5" fill="#FF4A10" stroke="#B0A890" stroke-width="0.6" rx="1.5" /><rect x="421.40000000000003" y="517.5" width="9" height="7.5" fill="#909090" stroke="#B0A890" stroke-width="0.6" rx="1.5" /><rect x="434.8" y="517.5" width="9" height="7.5" fill="#1450E0" stroke="#B0A890" stroke-width="0.6" rx="1.5" /><rect x="448.20000000000005" y="517.5" width="9" height="7.5" fill="#C88C48" stroke="#B0A890" stroke-width="0.6" rx="1.5" /><g><path d="M668,516 V526 M668,516 H678" stroke="#3C6CE8" stroke-width="1" stroke-dasharray="1.5,1"/><circle cx="672.5" cy="521" r="3" fill="#D8E4F4" stroke="#888" stroke-width="1"/><path d="M674.5,523 L677,526" stroke="#D08838" stroke-width="1.8"/></g><g><path d="M683,516 V526 M683,516 H693" stroke="#3C6CE8" stroke-width="1" stroke-dasharray="1.5,1"/><rect x="685.5" y="518" width="6" height="8" rx="2.5" fill="#E8E8E4" stroke="#707070" stroke-width="1"/></g><g><path d="M698.3,516 V526.2 H708.5" fill="none" stroke="#404840" stroke-width="1.2"/></g><g><rect x="719.8" y="518.8" width="1.6" height="1.6" fill="#A8A494"/><rect x="716.9" y="521.7" width="1.6" height="1.6" fill="#A8A494"/><rect x="719.8" y="521.7" width="1.6" height="1.6" fill="#A8A494"/><rect x="714" y="524.6" width="1.6" height="1.6" fill="#A8A494"/><rect x="716.9" y="524.6" width="1.6" height="1.6" fill="#A8A494"/><rect x="719.8" y="524.6" width="1.6" height="1.6" fill="#A8A494"/></g><linearGradient id="dtg" x1="0" y1="0" x2="0" y2="1"><stop offset="0" stop-color="#7CA0EC"/><stop offset="0.1" stop-color="#5A88EC"/><stop offset="0.13" stop-color="#0E4EE2"/><stop offset="0.9" stop-color="#0A4ADE"/><stop offset="1" stop-color="#0846DC"/></linearGradient><rect x="154.3" y="116.2" width="416.7" height="297.2" fill="#0C48DC" stroke="none" stroke-width="1" rx="0" /><rect x="154.3" y="116.2" width="416.7" height="15.799999999999997" fill="url(#dtg)" stroke="none" stroke-width="1" rx="0" /><rect x="156.9" y="132" width="411.30000000000007" height="278.4" fill="#ECE9D8" stroke="none" stroke-width="1" rx="0" /><text x="157.6" y="128.9" font-size="8.9" fill="#FFFFFF" font-weight="700" textLength="122.4" lengthAdjust="spacingAndGlyphs" stroke="#FFFFFF" stroke-width="0.25" >Выбор параметров фильтра</text><rect x="557.6" y="120.6" width="9.2" height="9.2" fill="#E4582C" stroke="#FFFFFF" stroke-width="0.8" rx="1.2" /><line x1="559.6" y1="122.6" x2="564.8" y2="127.8" stroke="#FFFFFF" stroke-width="1.3" /><line x1="564.8" y1="122.6" x2="559.6" y2="127.8" stroke="#FFFFFF" stroke-width="1.3" /><path d="M166,139.4 H163.5 Q160.5,139.4 160.5,142.4 V161.5 Q160.5,164.5 163.5,164.5 H562.5 Q565.5,164.5 565.5,161.5 V142.4 Q565.5,139.4 562.5,139.4 H245" fill="none" stroke="#D2CFBE" stroke-width="1"/><text x="169" y="142.20000000000002" font-size="8.3" fill="#0046D5" font-weight="400" textLength="73" lengthAdjust="spacingAndGlyphs" stroke="#0046D5" stroke-width="0.2" >Применить фильтр</text><circle cx="171" cy="151.8" r="4.6" fill="#F2F2EE" stroke="#3C5C90" stroke-width="0.9"/><text x="178.5" y="154.6" font-size="8.3" fill="#000" font-weight="400" textLength="69.5" lengthAdjust="spacingAndGlyphs" stroke="#000" stroke-width="0.2" >ко всем графикам</text><circle cx="264.3" cy="151.8" r="4.6" fill="#F2F2EE" stroke="#3C5C90" stroke-width="0.9"/><text x="271" y="154.6" font-size="8.3" fill="#000" font-weight="400" textLength="91" lengthAdjust="spacingAndGlyphs" stroke="#000" stroke-width="0.2" >к выбранным графикам</text><circle cx="382.6" cy="151.8" r="4.6" fill="#F2F2EE" stroke="#3C5C90" stroke-width="0.9"/><circle cx="382.6" cy="151.8" r="1.6" fill="#303830"/><text x="388.8" y="154.6" font-size="8.3" fill="#000" font-weight="400" textLength="37.7" lengthAdjust="spacingAndGlyphs" stroke="#000" stroke-width="0.2" >к графику</text><rect x="435.5" y="145.5" width="124.0" height="14.0" fill="#FFFFFF" stroke="#7F9DB9" stroke-width="1" rx="0" /><rect x="437.8" y="148.4" width="30" height="7" fill="#C88C44" stroke="#404038" stroke-width="0.8" rx="0" /><text x="474" y="154.6" font-size="8.3" fill="#000" font-weight="400" textLength="13" lengthAdjust="spacingAndGlyphs" stroke="#000" stroke-width="0.2" >ans</text><rect x="546.3" y="146" width="12.0" height="13" rx="1" fill="#C4D4F8" stroke="#B4C8F4" stroke-width="0.6"/><path d="M549.3,151.0 L552.3,154.0 L555.3,151.0" fill="none" stroke="#4C6084" stroke-width="1.4"/><text x="165" y="178.8" font-size="8.3" fill="#000" font-weight="400" textLength="182" lengthAdjust="spacingAndGlyphs" stroke="#000" stroke-width="0.2" >Частота дискретизации исходного сигнала (Гц)</text><rect x="350.5" y="168.5" width="34.0" height="15.0" fill="#FFFFFF" stroke="#7F9DB9" stroke-width="1" rx="0" /><text x="352.3" y="178.8" font-size="8.3" fill="#000" font-weight="400" stroke="#000" stroke-width="0.2" >1</text><rect x="387.3" y="168.8" width="14" height="14" rx="2" fill="#F4F4F0" stroke="#3C4438" stroke-width="1"/><text x="394.3" y="180" font-size="10" font-weight="700" fill="#202020" text-anchor="middle">i</text><path d="M165,190.2 H163.9 Q160.9,190.2 160.9,193.2 V303 Q160.9,306 163.9,306 H301.6 Q304.6,306 304.6,303 V193.2 Q304.6,190.2 301.6,190.2 H249.9" fill="none" stroke="#D2CFBE" stroke-width="1"/><text x="168" y="193.0" font-size="8.3" fill="#0046D5" font-weight="400" textLength="78.9" lengthAdjust="spacingAndGlyphs" stroke="#0046D5" stroke-width="0.2" >Параметры фильтра</text><rect x="164.5" y="200.5" width="134.0" height="16.0" fill="#FFFFFF" stroke="#7F9DB9" stroke-width="1" rx="0" /><rect x="166.3" y="202" width="117.7" height="13" fill="#1046D8" stroke="none" stroke-width="1" rx="0" /><text x="167" y="212" font-size="8.3" fill="#FFFFFF" font-weight="700" textLength="82" lengthAdjust="spacingAndGlyphs" stroke="#FFFFFF" stroke-width="0.1" >Фильтр Баттерворда</text><rect x="285.7" y="201.8" width="11.800000000000011" height="13.599999999999994" rx="1" fill="#C4D4F8" stroke="#B4C8F4" stroke-width="0.6"/><path d="M288.6,207.10000000000002 L291.6,210.10000000000002 L294.6,207.10000000000002" fill="none" stroke="#4C6084" stroke-width="1.4"/><text x="165" y="230.8" font-size="8.3" fill="#000" font-weight="400" textLength="65.9" lengthAdjust="spacingAndGlyphs" stroke="#000" stroke-width="0.2" >порядок фильтра</text><rect x="240.5" y="219.5" width="43.0" height="15.0" fill="#FFFFFF" stroke="#7F9DB9" stroke-width="1" rx="0" /><text x="242.8" y="230.5" font-size="8.3" fill="#000" font-weight="400" stroke="#000" stroke-width="0.2" >2</text><rect x="284.6" y="219.5" width="10.8" height="15.5" rx="1" fill="#C4D4F8"/><path d="M287.5,225 L290,222.5 L292.5,225 M287.5,229.5 L290,232 L292.5,229.5" fill="none" stroke="#4C6084" stroke-width="1.1"/><text x="165" y="246.3" font-size="8.3" fill="#A8A89C" font-weight="400" textLength="69.6" lengthAdjust="spacingAndGlyphs" stroke="#A8A89C" stroke-width="0.2" >коэфф. пульсаций</text><rect x="240.5" y="236.5" width="43.0" height="15.0" fill="#FFFFFF" stroke="#C0CCD8" stroke-width="1" rx="0" /><text x="242.8" y="246.5" font-size="8.3" fill="#A8A89C" font-weight="400" textLength="15" lengthAdjust="spacingAndGlyphs" stroke="#A8A89C" stroke-width="0.2" >0.01</text><text x="165" y="263.3" font-size="8.3" fill="#000" font-weight="400" textLength="73" lengthAdjust="spacingAndGlyphs" stroke="#000" stroke-width="0.2" >частота среза (Гц)</text><rect x="240.5" y="252.5" width="43.0" height="15.0" fill="#FFFFFF" stroke="#7F9DB9" stroke-width="1" rx="0" /><text x="242.8" y="263.3" font-size="8.3" fill="#000" font-weight="400" textLength="11" lengthAdjust="spacingAndGlyphs" stroke="#000" stroke-width="0.2" >0.2</text><text x="166.3" y="277.9" font-size="8.3" fill="#000" font-weight="400" textLength="48.1" lengthAdjust="spacingAndGlyphs" stroke="#000" stroke-width="0.2" >тип фильтра</text><circle cx="226.8" cy="275.2" r="4.6" fill="#F2F2EE" stroke="#3C5C90" stroke-width="0.9"/><circle cx="226.8" cy="275.2" r="1.6" fill="#303830"/><text x="233.2" y="277.9" font-size="8.3" fill="#000" font-weight="400" textLength="10.8" lengthAdjust="spacingAndGlyphs" stroke="#000" stroke-width="0.2" >НЧ</text><circle cx="259.8" cy="275.2" r="4.6" fill="#F2F2EE" stroke="#3C5C90" stroke-width="0.9"/><text x="265.7" y="277.9" font-size="8.3" fill="#000" font-weight="400" textLength="11.3" lengthAdjust="spacingAndGlyphs" stroke="#000" stroke-width="0.2" >ВЧ</text><rect x="184.5" y="285.5" width="98.0" height="15.0" rx="2.5" fill="#F8F8F4" stroke="#2C3428" stroke-width="1"/><rect x="186.0" y="298.5" width="95.0" height="1" fill="#E2DED2"/><text x="203.3" y="296" font-size="8.3" fill="#000" font-weight="400" textLength="75.4" lengthAdjust="spacingAndGlyphs" stroke="#000" stroke-width="0.2" >Рассчитать фильтр</text><rect x="185.5" y="287" width="96" height="12" rx="1.5" fill="none" stroke="#A4BEF2" stroke-width="1"/><rect x="189.5" y="287.5" width="8.5" height="11.5" rx="1.5" fill="#606860" stroke="#303830" stroke-width="0.8"/><rect x="191" y="289" width="5.5" height="3" fill="#C8D0C8"/><rect x="195" y="296" width="2" height="1.5" fill="#F04010"/><path d="M165,314 H163 Q160,314 160,317 V364.3 Q160,367.3 163,367.3 H301 Q304,367.3 304,364.3 V317 Q304,314 301,314 H250.2" fill="none" stroke="#D2CFBE" stroke-width="1"/><text x="168" y="316.8" font-size="8.3" fill="#0046D5" font-weight="400" textLength="79.2" lengthAdjust="spacingAndGlyphs" stroke="#0046D5" stroke-width="0.2" >Реализация фильтра</text><rect x="164.5" y="322.5" width="134.0" height="15.0" fill="#FFFFFF" stroke="#7F9DB9" stroke-width="1" rx="0" /><text x="167.3" y="333" font-size="8.3" fill="#000" font-weight="400" textLength="113.5" lengthAdjust="spacingAndGlyphs" stroke="#000" stroke-width="0.2" >С нулевым фазовым сдвигом</text><rect x="286.5" y="323.5" width="11.300000000000011" height="13.100000000000023" rx="1" fill="#C4D4F8" stroke="#B4C8F4" stroke-width="0.6"/><path d="M289.15,328.55 L292.15,331.55 L295.15,328.55" fill="none" stroke="#4C6084" stroke-width="1.4"/><rect x="165.8" y="344.7" width="9.5" height="9.100000000000023" fill="#F4F4F0" stroke="#3C5C90" stroke-width="0.9" rx="0" /><text x="178" y="352.2" font-size="8.3" fill="#000" font-weight="400" textLength="112" lengthAdjust="spacingAndGlyphs" stroke="#000" stroke-width="0.2" >вывести результат только в</text><text x="179.9" y="362.1" font-size="8.3" fill="#000" font-weight="400" textLength="96" lengthAdjust="spacingAndGlyphs" stroke="#000" stroke-width="0.2" >узлах исходного графика</text><text x="166.7" y="382.4" font-size="8.3" fill="#000" font-weight="400" textLength="91.8" lengthAdjust="spacingAndGlyphs" stroke="#000" stroke-width="0.2" >Поместить результат в</text><rect x="261.5" y="372.5" width="302.0" height="15.0" fill="#FFFFFF" stroke="#7F9DB9" stroke-width="1" rx="0" /><text x="263.4" y="382.9" font-size="8.3" fill="#000" font-weight="400" textLength="54.3" lengthAdjust="spacingAndGlyphs" stroke="#000" stroke-width="0.2" >новый график</text><rect x="552.3" y="373.8" width="11.100000000000023" height="12.599999999999966" rx="1" fill="#C4D4F8" stroke="#B4C8F4" stroke-width="0.6"/><path d="M554.8499999999999,378.6 L557.8499999999999,381.6 L560.8499999999999,378.6" fill="none" stroke="#4C6084" stroke-width="1.4"/><rect x="164.5" y="393.5" width="64.0" height="14.0" rx="2.5" fill="#F8F8F4" stroke="#2C3428" stroke-width="1"/><rect x="166.0" y="405.5" width="61.0" height="1" fill="#E2DED2"/><text x="181.6" y="403" font-size="8.3" fill="#000" font-weight="400" textLength="30.9" lengthAdjust="spacingAndGlyphs" stroke="#000" stroke-width="0.2" >Помощь</text><rect x="262.7" y="394.4" width="9.699999999999989" height="10.400000000000034" fill="#F4F4F0" stroke="#3C5C90" stroke-width="0.9" rx="0" /><text x="274.8" y="402.9" font-size="8.3" fill="#000" font-weight="400" textLength="135.7" lengthAdjust="spacingAndGlyphs" stroke="#000" stroke-width="0.2" >Закрывать окно после вычисления</text><rect x="424.5" y="392.5" width="64.0" height="15.0" rx="2.5" fill="#F8F8F4" stroke="#2C3428" stroke-width="1"/><rect x="426.0" y="405.5" width="61.0" height="1" fill="#E2DED2"/><text x="435.7" y="403" font-size="8.3" fill="#000" font-weight="400" textLength="41.9" lengthAdjust="spacingAndGlyphs" stroke="#000" stroke-width="0.2" >Применить</text><rect x="498.5" y="392.5" width="63.0" height="15.0" rx="2.5" fill="#F8F8F4" stroke="#2C3428" stroke-width="1"/><rect x="500.0" y="405.5" width="60.0" height="1" fill="#E2DED2"/><text x="514.5" y="403" font-size="8.3" fill="#000" font-weight="400" textLength="31.0" lengthAdjust="spacingAndGlyphs" stroke="#000" stroke-width="0.2" >Закрыть</text><path d="M313.4,191 H310.8 Q307.8,191 307.8,194 V363 Q307.8,366 310.8,366 H561.6 Q564.6,366 564.6,363 V194 Q564.6,191 561.6,191 H511.9" fill="none" stroke="#D2CFBE" stroke-width="1"/><text x="316.4" y="193.8" font-size="8.3" fill="#0046D5" font-weight="400" textLength="192.5" lengthAdjust="spacingAndGlyphs" stroke="#0046D5" stroke-width="0.2" >Амплитудная и фазовая характеристики фильтра</text><rect x="337.3" y="201.3" width="220.7" height="141.0" fill="#FFFFFF" stroke="none" stroke-width="1" rx="0" /><g><line x1="363.5" y1="201.3" x2="363.5" y2="342.3" stroke="#ECEBDF" stroke-width="1" stroke-dasharray="2.5,2" /><line x1="406.5" y1="201.3" x2="406.5" y2="342.3" stroke="#ECEBDF" stroke-width="1" stroke-dasharray="2.5,2" /><line x1="448.5" y1="201.3" x2="448.5" y2="342.3" stroke="#ECEBDF" stroke-width="1" stroke-dasharray="2.5,2" /><line x1="490.5" y1="201.3" x2="490.5" y2="342.3" stroke="#ECEBDF" stroke-width="1" stroke-dasharray="2.5,2" /><line x1="532.5" y1="201.3" x2="532.5" y2="342.3" stroke="#ECEBDF" stroke-width="1" stroke-dasharray="2.5,2" /><line x1="337.3" y1="218.5" x2="558" y2="218.5" stroke="#ECEBDF" stroke-width="1" stroke-dasharray="2.5,2" /><line x1="337.3" y1="252.5" x2="558" y2="252.5" stroke="#ECEBDF" stroke-width="1" stroke-dasharray="2.5,2" /><line x1="337.3" y1="286.5" x2="558" y2="286.5" stroke="#ECEBDF" stroke-width="1" stroke-dasharray="2.5,2" /><line x1="337.3" y1="320.5" x2="558" y2="320.5" stroke="#ECEBDF" stroke-width="1" stroke-dasharray="2.5,2" /><line x1="384.5" y1="201.3" x2="384.5" y2="342.3" stroke="#C8C4B0" stroke-width="1" stroke-dasharray="3,2" /><line x1="427.5" y1="201.3" x2="427.5" y2="342.3" stroke="#C8C4B0" stroke-width="1" stroke-dasharray="3,2" /><line x1="469.5" y1="201.3" x2="469.5" y2="342.3" stroke="#C8C4B0" stroke-width="1" stroke-dasharray="3,2" /><line x1="511.5" y1="201.3" x2="511.5" y2="342.3" stroke="#C8C4B0" stroke-width="1" stroke-dasharray="3,2" /><line x1="553.5" y1="201.3" x2="553.5" y2="342.3" stroke="#C8C4B0" stroke-width="1" stroke-dasharray="3,2" /><line x1="337.3" y1="201.5" x2="558" y2="201.5" stroke="#C8C4B0" stroke-width="1" stroke-dasharray="3,2" /><line x1="337.3" y1="235.5" x2="558" y2="235.5" stroke="#C8C4B0" stroke-width="1" stroke-dasharray="3,2" /><line x1="337.3" y1="303.5" x2="558" y2="303.5" stroke="#C8C4B0" stroke-width="1" stroke-dasharray="3,2" /><line x1="337.3" y1="337.5" x2="558" y2="337.5" stroke="#C8C4B0" stroke-width="1" stroke-dasharray="3,2" /><line x1="337.3" y1="269.4" x2="558" y2="269.4" stroke="#4C5444" stroke-width="1.3" stroke-dasharray="9,2.5" /><line x1="342.4" y1="201.3" x2="342.4" y2="342.3" stroke="#4C5444" stroke-width="1.3" stroke-dasharray="9,2.5" /></g><rect x="337.3" y="201.3" width="220.7" height="141.0" fill="none" stroke="#4C5444" stroke-width="1.6" rx="0" /><polyline points="342.40,201.40 343.45,201.40 344.50,201.40 345.56,201.40 346.61,201.40 347.66,201.40 348.71,201.40 349.77,201.40 350.82,201.40 351.87,201.40 352.92,201.40 353.98,201.41 355.03,201.41 356.08,201.41 357.13,201.42 358.19,201.42 359.24,201.43 360.29,201.44 361.34,201.45 362.40,201.46 363.45,201.48 364.50,201.49 365.55,201.51 366.61,201.54 367.66,201.56 368.71,201.59 369.76,201.62 370.82,201.66 371.87,201.70 372.92,201.75 373.97,201.80 375.03,201.86 376.08,201.92 377.13,202.00 378.19,202.07 379.24,202.16 380.29,202.25 381.34,202.36 382.39,202.47 383.45,202.59 384.50,202.72 385.55,202.86 386.60,203.02 387.66,203.18 388.71,203.36 389.76,203.55 390.81,203.76 391.87,203.98 392.92,204.21 393.97,204.46 395.02,204.73 396.08,205.01 397.13,205.31 398.18,205.63 399.23,205.97 400.29,206.32 401.34,206.69 402.39,207.09 403.44,207.50 404.50,207.93 405.55,208.38 406.60,208.85 407.65,209.34 408.71,209.86 409.76,210.39 410.81,210.94 411.87,211.51 412.92,212.10 413.97,212.71 415.02,213.34 416.07,213.99 417.13,214.66 418.18,215.34 419.23,216.04 420.28,216.75 421.34,217.48 422.39,218.22 423.44,218.98 424.50,219.75 425.55,220.53 426.60,221.32 427.65,222.12 428.70,222.92 429.76,223.74 430.81,224.55 431.86,225.38 432.91,226.21 433.97,227.04 435.02,227.87 436.07,228.70 437.12,229.54 438.18,230.37 439.23,231.20 440.28,232.02 441.33,232.84 442.39,233.66 443.44,234.47 444.49,235.28 445.54,236.08 446.60,236.87 447.65,237.66 448.70,238.43 449.75,239.20 450.81,239.96 451.86,240.70 452.91,241.44 453.96,242.17 455.02,242.88 456.07,243.59 457.12,244.28 458.17,244.97 459.23,245.64 460.28,246.30 461.33,246.94 462.38,247.58 463.44,248.20 464.49,248.82 465.54,249.42 466.59,250.01 467.65,250.58 468.70,251.15 469.75,251.70 470.80,252.24 471.86,252.77 472.91,253.29 473.96,253.80 475.01,254.30 476.07,254.78 477.12,255.26 478.17,255.72 479.23,256.18 480.28,256.62 481.33,257.05 482.38,257.48 483.43,257.89 484.49,258.29 485.54,258.69 486.59,259.07 487.64,259.45 488.70,259.81 489.75,260.17 490.80,260.51 491.85,260.85 492.91,261.18 493.96,261.51 495.01,261.82 496.06,262.12 497.12,262.42 498.17,262.71 499.22,262.99 500.27,263.27 501.33,263.53 502.38,263.79 503.43,264.04 504.49,264.29 505.54,264.53 506.59,264.76 507.64,264.98 508.69,265.20 509.75,265.41 510.80,265.62 511.85,265.81 512.90,266.01 513.96,266.19 515.01,266.37 516.06,266.55 517.12,266.72 518.17,266.88 519.22,267.04 520.27,267.19 521.32,267.33 522.38,267.47 523.43,267.61 524.48,267.74 525.53,267.86 526.59,267.98 527.64,268.09 528.69,268.20 529.75,268.31 530.80,268.41 531.85,268.50 532.90,268.59 533.95,268.67 535.01,268.75 536.06,268.83 537.11,268.90 538.16,268.96 539.22,269.02 540.27,269.08 541.32,269.13 542.38,269.18 543.43,269.22 544.48,269.26 545.53,269.29 546.59,269.32 547.64,269.34 548.69,269.36 549.74,269.38 550.79,269.39 551.85,269.40 552.90,269.40" fill="none" stroke="#404838" stroke-width="1.7"/><polyline points="342.40,273.30 343.45,273.62 344.50,273.95 345.56,274.27 346.61,274.60 347.66,274.92 348.71,275.25 349.77,275.58 350.82,275.90 351.87,276.23 352.92,276.56 353.98,276.89 355.03,277.22 356.08,277.56 357.13,277.89 358.19,278.23 359.24,278.56 360.29,278.90 361.34,279.25 362.40,279.59 363.45,279.94 364.50,280.28 365.55,280.64 366.61,280.99 367.66,281.34 368.71,281.70 369.76,282.07 370.82,282.43 371.87,282.80 372.92,283.17 373.97,283.54 375.03,283.92 376.08,284.30 377.13,284.68 378.19,285.07 379.24,285.46 380.29,285.86 381.34,286.26 382.39,286.66 383.45,287.07 384.50,287.48 385.55,287.90 386.60,288.32 387.66,288.74 388.71,289.17 389.76,289.60 390.81,290.04 391.87,290.48 392.92,290.92 393.97,291.37 395.02,291.82 396.08,292.28 397.13,292.74 398.18,293.21 399.23,293.68 400.29,294.15 401.34,294.62 402.39,295.10 403.44,295.59 404.50,296.07 405.55,296.56 406.60,297.05 407.65,297.55 408.71,298.04 409.76,298.54 410.81,299.04 411.87,299.55 412.92,300.05 413.97,300.56 415.02,301.06 416.07,301.57 417.13,302.07 418.18,302.58 419.23,303.09 420.28,303.59 421.34,304.10 422.39,304.60 423.44,305.10 424.50,305.60 425.55,306.10 426.60,306.60 427.65,307.09 428.70,307.58 429.76,308.07 430.81,308.56 431.86,309.04 432.91,309.52 433.97,309.99 435.02,310.46 436.07,310.93 437.12,311.39 438.18,311.84 439.23,312.30 440.28,312.74 441.33,313.18 442.39,313.62 443.44,314.05 444.49,314.48 445.54,314.90 446.60,315.32 447.65,315.73 448.70,316.14 449.75,316.54 450.81,316.93 451.86,317.32 452.91,317.71 453.96,318.09 455.02,318.46 456.07,318.83 457.12,319.20 458.17,319.56 459.23,319.91 460.28,320.26 461.33,320.61 462.38,320.95 463.44,321.28 464.49,321.61 465.54,321.94 466.59,322.26 467.65,322.57 468.70,322.89 469.75,323.19 470.80,323.50 471.86,323.80 472.91,324.09 473.96,324.39 475.01,324.67 476.07,324.96 477.12,325.24 478.17,325.51 479.23,325.79 480.28,326.06 481.33,326.32 482.38,326.59 483.43,326.85 484.49,327.10 485.54,327.36 486.59,327.61 487.64,327.85 488.70,328.10 489.75,328.34 490.80,328.58 491.85,328.82 492.91,329.05 493.96,329.28 495.01,329.51 496.06,329.74 497.12,329.96 498.17,330.18 499.22,330.40 500.27,330.62 501.33,330.84 502.38,331.05 503.43,331.26 504.49,331.47 505.54,331.68 506.59,331.89 507.64,332.09 508.69,332.29 509.75,332.50 510.80,332.70 511.85,332.89 512.90,333.09 513.96,333.29 515.01,333.48 516.06,333.67 517.12,333.86 518.17,334.05 519.22,334.24 520.27,334.43 521.32,334.62 522.38,334.80 523.43,334.99 524.48,335.17 525.53,335.36 526.59,335.54 527.64,335.72 528.69,335.90 529.75,336.08 530.80,336.26 531.85,336.43 532.90,336.61 533.95,336.79 535.01,336.97 536.06,337.14 537.11,337.32 538.16,337.49 539.22,337.66 540.27,337.84 541.32,338.01 542.38,338.18 543.43,338.36 544.48,338.53 545.53,338.70 546.59,338.87 547.64,339.04 548.69,339.22 549.74,339.39 550.79,339.56 551.85,339.73 552.90,339.90" fill="none" stroke="#1848D8" stroke-width="1.7"/><path d="M323.8,201.6 V342.2 Q323.8,343.4 325.6,343.4" fill="none" stroke="#4C5444" stroke-width="1.2"/><circle cx="323.8" cy="339.2" r="1.4" fill="#2050E0"/><text x="312" y="207.4" font-size="11" font-weight="700" font-style="italic" fill="#303830" stroke="#303830" stroke-width="0.4">φ</text><text x="325.3" y="205.5" font-size="9.3" font-weight="700" font-style="italic" fill="#303830" stroke="#303830" stroke-width="0.4">A</text><text transform="translate(323.8,235.8) rotate(-90)" font-size="8.2" fill="#202020" stroke="#202020" stroke-width="0.2" text-anchor="middle" textLength="14" lengthAdjust="spacingAndGlyphs">100</text><text transform="translate(323.8,272.8) rotate(-90)" font-size="8.2" fill="#202020" stroke="#202020" stroke-width="0.2" text-anchor="middle" textLength="5" lengthAdjust="spacingAndGlyphs">0</text><text transform="translate(323.8,310.9) rotate(-90)" font-size="8.2" fill="#202020" stroke="#202020" stroke-width="0.2" text-anchor="middle" textLength="17" lengthAdjust="spacingAndGlyphs">-100</text><text transform="translate(336.2,235.4) rotate(-90)" font-size="7.8" fill="#202020" stroke="#202020" stroke-width="0.2" text-anchor="middle" textLength="12" lengthAdjust="spacingAndGlyphs">0.5</text><text transform="translate(336.2,269.4) rotate(-90)" font-size="7.8" fill="#202020" stroke="#202020" stroke-width="0.2" text-anchor="middle" textLength="5" lengthAdjust="spacingAndGlyphs">0</text><text transform="translate(336.2,303.4) rotate(-90)" font-size="7.8" fill="#202020" stroke="#202020" stroke-width="0.2" text-anchor="middle" textLength="15" lengthAdjust="spacingAndGlyphs">-0.5</text><text transform="translate(336.2,337.4) rotate(-90)" font-size="7.8" fill="#202020" stroke="#202020" stroke-width="0.2" text-anchor="middle" textLength="8" lengthAdjust="spacingAndGlyphs">-1</text><text x="342.4" y="351" font-size="7.4" fill="#202020" font-weight="400" text-anchor="middle" stroke="#202020" stroke-width="0.2" >0</text><text x="384.5" y="351" font-size="7.4" fill="#202020" font-weight="400" text-anchor="middle" stroke="#202020" stroke-width="0.2" >0.1</text><text x="426.59999999999997" y="351" font-size="7.4" fill="#202020" font-weight="400" text-anchor="middle" stroke="#202020" stroke-width="0.2" >0.2</text><text x="468.7" y="351" font-size="7.4" fill="#202020" font-weight="400" text-anchor="middle" stroke="#202020" stroke-width="0.2" >0.3</text><text x="510.79999999999995" y="351" font-size="7.4" fill="#202020" font-weight="400" text-anchor="middle" stroke="#202020" stroke-width="0.2" >0.4</text><text x="554.8" y="352.5" font-size="10" font-weight="700" font-style="italic" fill="#303830">f</text><text x="325.6" y="362.3" font-size="9" font-style="italic" fill="#202020">f</text><text x="331.5" y="362.3" font-size="8" fill="#202020" font-weight="400" textLength="53" lengthAdjust="spacingAndGlyphs" stroke="#202020" stroke-width="0.2" >=0.512845 Гц</text><text x="397.5" y="362.3" font-size="9" font-style="italic" fill="#202020">A</text><text x="404.5" y="362.3" font-size="8" fill="#202020" font-weight="400" textLength="41.5" lengthAdjust="spacingAndGlyphs" stroke="#202020" stroke-width="0.2" >= 0.477723</text><text x="461.8" y="363" font-size="10" font-style="italic" fill="#202020">φ</text><text x="471" y="362.3" font-size="8" fill="#202020" font-weight="400" textLength="65" lengthAdjust="spacingAndGlyphs" stroke="#202020" stroke-width="0.2" >= 96.416807 град</text></svg></body></html>
